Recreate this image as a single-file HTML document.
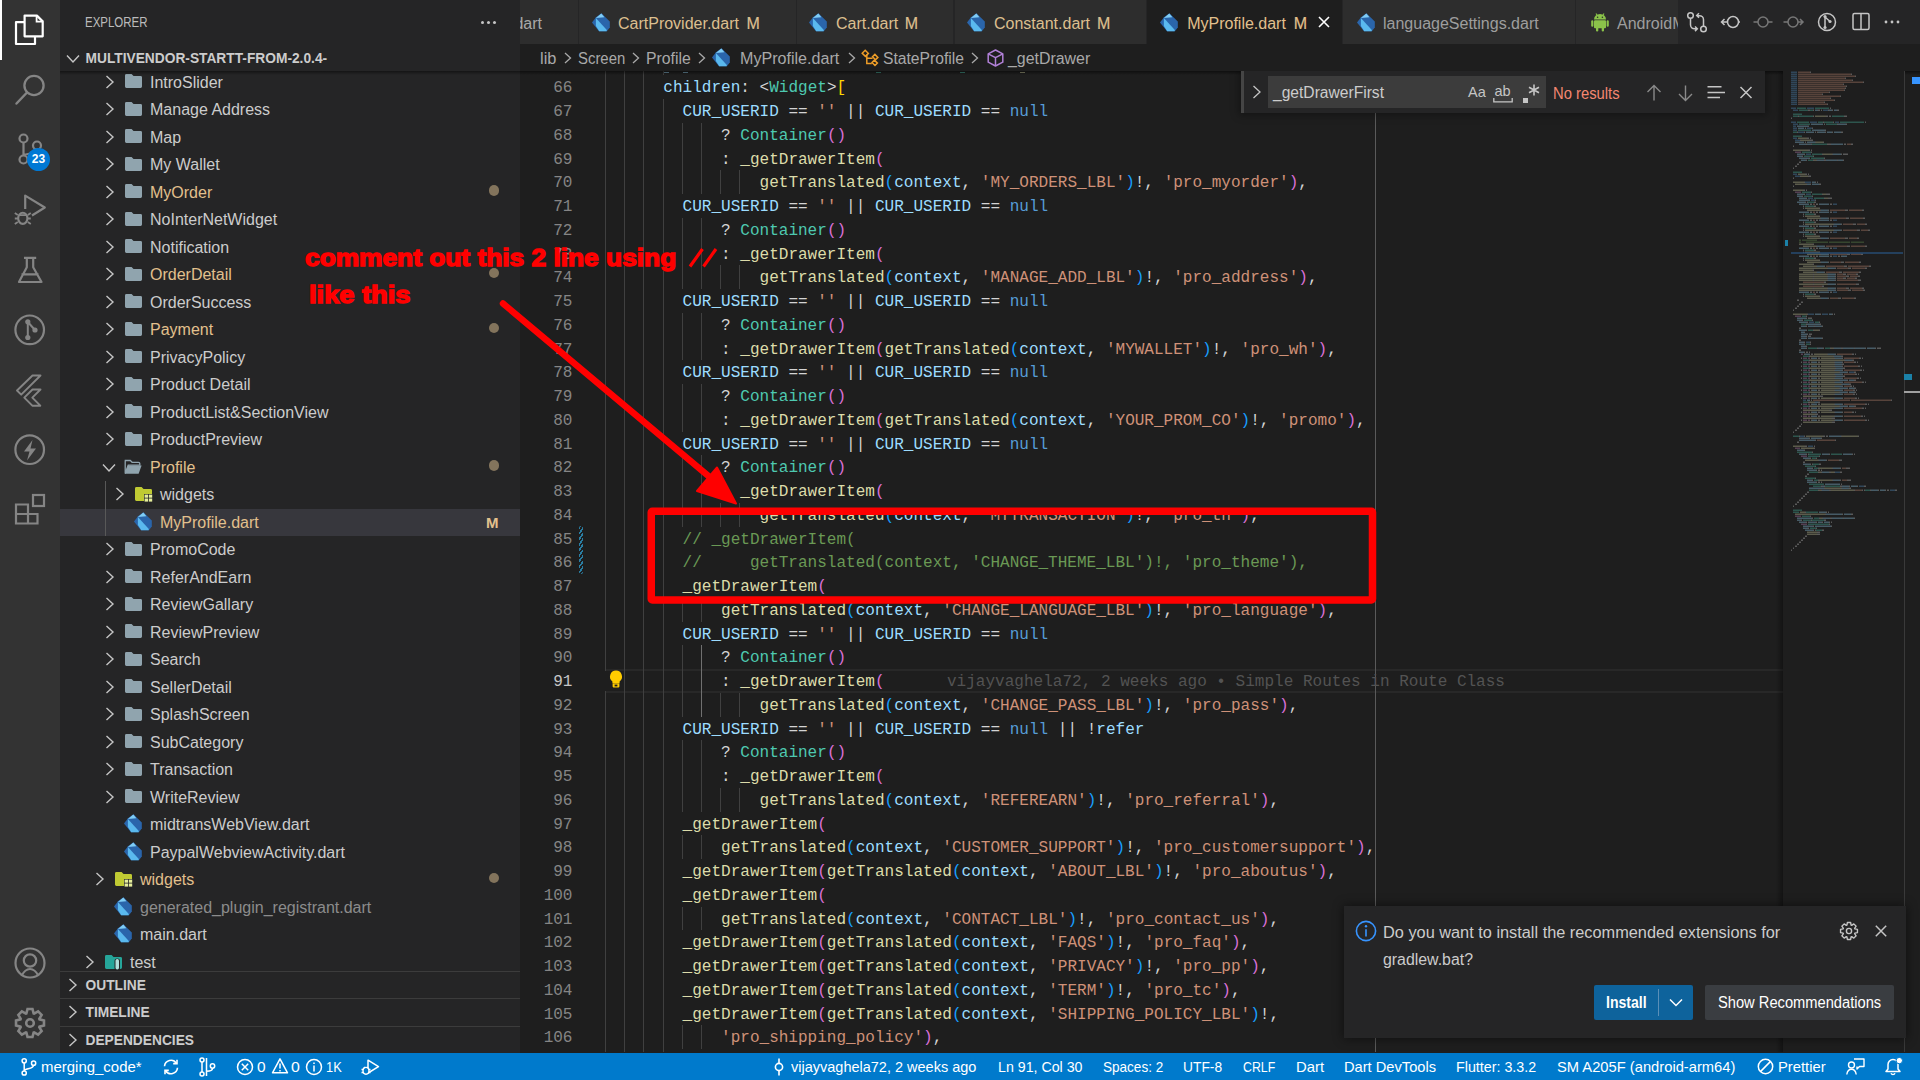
<!DOCTYPE html><html><head><meta charset="utf-8"><style>
*{margin:0;padding:0;box-sizing:border-box}
html,body{width:1920px;height:1080px;overflow:hidden;background:#1e1e1e;font-family:"Liberation Sans",sans-serif;}
.a{position:absolute}
svg{position:absolute;overflow:visible}
#act{position:absolute;left:0;top:0;width:60px;height:1052.5px;background:#333333}
#side{position:absolute;left:60px;top:0;width:460px;height:1052.5px;background:#252526;color:#cccccc;font-size:16px;overflow:hidden}
.row{position:absolute;left:0;width:460px;height:27.5px;line-height:27.5px;white-space:nowrap}
.row .t{position:absolute;top:0}
#tabs{position:absolute;left:520px;top:0;width:1400px;height:43.75px;background:#252526;overflow:hidden}
.tab{position:absolute;top:0;height:43.75px;background:#2d2d2d;font-size:16px;color:#969696;white-space:nowrap;overflow:hidden;line-height:43.75px}
#crumbs{position:absolute;left:520px;top:43.75px;width:1400px;height:27.5px;background:#1e1e1e;font-size:16px;color:#a9a9a9;white-space:nowrap;line-height:27.5px}
#editor{position:absolute;left:520px;top:71.25px;width:1400px;height:980.75px;background:#1e1e1e;overflow:hidden}
#status{position:absolute;left:0;top:1052.5px;width:1920px;height:27.5px;background:#007acc;color:#fff;font-size:16px;white-space:nowrap;line-height:28px}
.ln{position:absolute;left:0;padding-top:2px;width:52px;text-align:right;font-family:"Liberation Mono",monospace;font-size:16.04px;line-height:23.75px;color:#858585;white-space:pre}
.cl{position:absolute;padding-top:2px;font-family:"Liberation Mono",monospace;font-size:16.04px;line-height:23.75px;white-space:pre;color:#d4d4d4}
.g{position:absolute;width:1px;background:#404040}
</style></head><body>
<div id="act">
<div class="a" style="left:0;top:0;width:2.2px;height:60px;background:#ffffff"></div>
<svg width="60" height="60" style="left:0;top:0" viewBox="0 0 60 60">
<path d="M24.6 36.3V15.6h12.3l5.8 5.8v14.9z" fill="none" stroke="#fff" stroke-width="2.2" stroke-linejoin="round"/>
<path d="M36.6 15.6v6h6" fill="none" stroke="#fff" stroke-width="1.8"/>
<path d="M24.6 22.2h-8.6v21.8h19v-7.7" fill="none" stroke="#fff" stroke-width="2.2" stroke-linejoin="round"/>
</svg>
<svg width="60" height="60" style="left:0;top:60px" viewBox="0 0 60 60">
<circle cx="34" cy="25.5" r="9.6" fill="none" stroke="#858585" stroke-width="2.3"/>
<path d="M27 32.5L16.5 43.5" stroke="#858585" stroke-width="2.5" stroke-linecap="round"/>
</svg>
<svg width="60" height="60" style="left:0;top:120px" viewBox="0 0 60 60">
<circle cx="23.5" cy="18.5" r="4" fill="none" stroke="#858585" stroke-width="2.2"/>
<circle cx="37" cy="25.5" r="4" fill="none" stroke="#858585" stroke-width="2.2"/>
<circle cx="23.5" cy="39.5" r="4" fill="none" stroke="#858585" stroke-width="2.2"/>
<path d="M23.5 22.5v13M37 29.5c0 5-13.5 4-13.5 6" fill="none" stroke="#858585" stroke-width="2.2"/>
</svg>
<div class="a" style="left:27px;top:148px;width:23px;height:23px;border-radius:12px;background:#0078d4;color:#fff;font-size:12px;font-weight:bold;text-align:center;line-height:23px">23</div>
<svg width="60" height="60" style="left:0;top:180px" viewBox="0 0 60 60">
<path d="M25.2 29V15.6L44.8 27.5L32 35.5" fill="none" stroke="#858585" stroke-width="2.2" stroke-linejoin="round"/>
<ellipse cx="22.8" cy="38.3" rx="4.6" ry="5.6" fill="#333" stroke="#858585" stroke-width="2.1"/>
<path d="M18.8 35.2h8M14.8 33l3 2M14.8 38.5h3.5M14.8 44l3-2M30.8 33l-3 2M30.8 38.5h-3.5M30.8 44l-3-2" stroke="#858585" stroke-width="1.8"/>
</svg>
<svg width="60" height="60" style="left:0;top:240px" viewBox="0 0 60 60">
<path d="M24 17.8h12.2M26.8 17.8v9.5L19 42h22.5L33.2 27.3v-9.5M21.5 34.4h17" fill="none" stroke="#858585" stroke-width="2.2" stroke-linejoin="round"/>
</svg>
<svg width="60" height="60" style="left:0;top:300px" viewBox="0 0 60 60">
<circle cx="29.7" cy="29.8" r="14.3" fill="none" stroke="#858585" stroke-width="2.2"/>
<circle cx="27.8" cy="21.8" r="2.6" fill="#858585"/><circle cx="35" cy="30" r="2.6" fill="#858585"/><circle cx="27.8" cy="37.5" r="2.6" fill="#858585"/>
<path d="M27.8 21.8v15.7M27.8 22l7.2 8" stroke="#858585" stroke-width="2"/>
</svg>
<svg width="60" height="60" style="left:0;top:360px" viewBox="0 0 60 60">
<path d="M40.5 15.5h-8L17 30.5l4.2 4.2z" fill="none" stroke="#858585" stroke-width="1.9" stroke-linejoin="round"/>
<path d="M40.5 29.5h-8l-8.2 8.2l8 8h8l-8-8z" fill="none" stroke="#858585" stroke-width="1.9" stroke-linejoin="round"/>
</svg>
<svg width="60" height="60" style="left:0;top:420px" viewBox="0 0 60 60">
<circle cx="29.7" cy="29.7" r="14.3" fill="none" stroke="#858585" stroke-width="2.2"/>
<path d="M32.5 20L24 31.5h5.5L27 40.5l9-12h-5.5z" fill="#858585"/>
</svg>
<svg width="60" height="60" style="left:0;top:480px" viewBox="0 0 60 60">
<path d="M16 24.5h12v19h-12zM16 34h21.5v9.5h-9.5" fill="none" stroke="#858585" stroke-width="2.2"/>
<rect x="33" y="15" width="11" height="11" fill="none" stroke="#858585" stroke-width="2.2"/>
</svg>
<svg width="60" height="60" style="left:0;top:932.8px" viewBox="0 0 60 60">
<circle cx="30" cy="30" r="14.5" fill="none" stroke="#858585" stroke-width="2.2"/>
<circle cx="30" cy="27.5" r="6.2" fill="none" stroke="#858585" stroke-width="2.2"/>
<path d="M21.5 43c2.5-5 5-7 8.5-7s6 2 8.5 7" fill="none" stroke="#858585" stroke-width="2.2"/>
</svg>
<svg width="60" height="60" style="left:0;top:992.6px" viewBox="0 0 60 60">
<path d="M43.98 27.53 L43.98 32.47 L39.52 33.66 L39.32 34.15 L41.63 38.14 L38.14 41.63 L34.15 39.32 L33.66 39.52 L32.47 43.98 L27.53 43.98 L26.34 39.52 L25.85 39.32 L21.86 41.63 L18.37 38.14 L20.68 34.15 L20.48 33.66 L16.02 32.47 L16.02 27.53 L20.48 26.34 L20.68 25.85 L18.37 21.86 L21.86 18.37 L25.85 20.68 L26.34 20.48 L27.53 16.02 L32.47 16.02 L33.66 20.48 L34.15 20.68 L38.14 18.37 L41.63 21.86 L39.32 25.85 L39.52 26.34Z" fill="none" stroke="#858585" stroke-width="2.6" stroke-linejoin="miter"/>
<circle cx="30" cy="30" r="3.8" fill="none" stroke="#858585" stroke-width="2.6"/>
</svg>
</div>
<div id="side">
<div class="a" style="left:25.3px;top:0.5px;height:44px;line-height:44px;font-size:13.75px;color:#bbbbbb;transform-origin:0 0;transform:scaleX(0.835)">EXPLORER</div>
<div class="a" style="left:421px;top:20.5px;width:3px;height:3px;background:#c5c5c5;border-radius:2px;box-shadow:6px 0 0 #c5c5c5,12px 0 0 #c5c5c5"></div>
<div class="a" style="left:0;top:71px;width:460px;height:899.5px;overflow:hidden">
<div class="row" style="top:-2.40px;">
<svg width="10" height="14" style="left:44.5px;top:6.2px" viewBox="0 0 10 14">
<path d="M1.5 1L8 7L1.5 13" fill="none" stroke="#c5c5c5" stroke-width="1.4"/>
</svg>
<svg width="17" height="14" style="left:64.6px;top:5.8px" viewBox="0 0 17 14">
<path d="M1.4 0h5.2l1.9 1.9h7.1a1.4 1.4 0 0 1 1.4 1.4v9.3a1.4 1.4 0 0 1-1.4 1.4H1.4A1.4 1.4 0 0 1 0 12.6V1.4A1.4 1.4 0 0 1 1.4 0z" fill="#90a4ae"/>
</svg>
<div class="t" style="left:90px;color:#cccccc">IntroSlider</div>
</div>
<div class="row" style="top:25.10px;">
<svg width="10" height="14" style="left:44.5px;top:6.2px" viewBox="0 0 10 14">
<path d="M1.5 1L8 7L1.5 13" fill="none" stroke="#c5c5c5" stroke-width="1.4"/>
</svg>
<svg width="17" height="14" style="left:64.6px;top:5.8px" viewBox="0 0 17 14">
<path d="M1.4 0h5.2l1.9 1.9h7.1a1.4 1.4 0 0 1 1.4 1.4v9.3a1.4 1.4 0 0 1-1.4 1.4H1.4A1.4 1.4 0 0 1 0 12.6V1.4A1.4 1.4 0 0 1 1.4 0z" fill="#90a4ae"/>
</svg>
<div class="t" style="left:90px;color:#cccccc">Manage Address</div>
</div>
<div class="row" style="top:52.60px;">
<svg width="10" height="14" style="left:44.5px;top:6.2px" viewBox="0 0 10 14">
<path d="M1.5 1L8 7L1.5 13" fill="none" stroke="#c5c5c5" stroke-width="1.4"/>
</svg>
<svg width="17" height="14" style="left:64.6px;top:5.8px" viewBox="0 0 17 14">
<path d="M1.4 0h5.2l1.9 1.9h7.1a1.4 1.4 0 0 1 1.4 1.4v9.3a1.4 1.4 0 0 1-1.4 1.4H1.4A1.4 1.4 0 0 1 0 12.6V1.4A1.4 1.4 0 0 1 1.4 0z" fill="#90a4ae"/>
</svg>
<div class="t" style="left:90px;color:#cccccc">Map</div>
</div>
<div class="row" style="top:80.10px;">
<svg width="10" height="14" style="left:44.5px;top:6.2px" viewBox="0 0 10 14">
<path d="M1.5 1L8 7L1.5 13" fill="none" stroke="#c5c5c5" stroke-width="1.4"/>
</svg>
<svg width="17" height="14" style="left:64.6px;top:5.8px" viewBox="0 0 17 14">
<path d="M1.4 0h5.2l1.9 1.9h7.1a1.4 1.4 0 0 1 1.4 1.4v9.3a1.4 1.4 0 0 1-1.4 1.4H1.4A1.4 1.4 0 0 1 0 12.6V1.4A1.4 1.4 0 0 1 1.4 0z" fill="#90a4ae"/>
</svg>
<div class="t" style="left:90px;color:#cccccc">My Wallet</div>
</div>
<div class="row" style="top:107.60px;">
<svg width="10" height="14" style="left:44.5px;top:6.2px" viewBox="0 0 10 14">
<path d="M1.5 1L8 7L1.5 13" fill="none" stroke="#c5c5c5" stroke-width="1.4"/>
</svg>
<svg width="17" height="14" style="left:64.6px;top:5.8px" viewBox="0 0 17 14">
<path d="M1.4 0h5.2l1.9 1.9h7.1a1.4 1.4 0 0 1 1.4 1.4v9.3a1.4 1.4 0 0 1-1.4 1.4H1.4A1.4 1.4 0 0 1 0 12.6V1.4A1.4 1.4 0 0 1 1.4 0z" fill="#90a4ae"/>
</svg>
<div class="t" style="left:90px;color:#e2c08d">MyOrder</div>
<div class="a" style="left:428.5px;top:6.8px;width:10.5px;height:10.5px;border-radius:6px;background:#83745c"></div>
</div>
<div class="row" style="top:135.10px;">
<svg width="10" height="14" style="left:44.5px;top:6.2px" viewBox="0 0 10 14">
<path d="M1.5 1L8 7L1.5 13" fill="none" stroke="#c5c5c5" stroke-width="1.4"/>
</svg>
<svg width="17" height="14" style="left:64.6px;top:5.8px" viewBox="0 0 17 14">
<path d="M1.4 0h5.2l1.9 1.9h7.1a1.4 1.4 0 0 1 1.4 1.4v9.3a1.4 1.4 0 0 1-1.4 1.4H1.4A1.4 1.4 0 0 1 0 12.6V1.4A1.4 1.4 0 0 1 1.4 0z" fill="#90a4ae"/>
</svg>
<div class="t" style="left:90px;color:#cccccc">NoInterNetWidget</div>
</div>
<div class="row" style="top:162.60px;">
<svg width="10" height="14" style="left:44.5px;top:6.2px" viewBox="0 0 10 14">
<path d="M1.5 1L8 7L1.5 13" fill="none" stroke="#c5c5c5" stroke-width="1.4"/>
</svg>
<svg width="17" height="14" style="left:64.6px;top:5.8px" viewBox="0 0 17 14">
<path d="M1.4 0h5.2l1.9 1.9h7.1a1.4 1.4 0 0 1 1.4 1.4v9.3a1.4 1.4 0 0 1-1.4 1.4H1.4A1.4 1.4 0 0 1 0 12.6V1.4A1.4 1.4 0 0 1 1.4 0z" fill="#90a4ae"/>
</svg>
<div class="t" style="left:90px;color:#cccccc">Notification</div>
</div>
<div class="row" style="top:190.10px;">
<svg width="10" height="14" style="left:44.5px;top:6.2px" viewBox="0 0 10 14">
<path d="M1.5 1L8 7L1.5 13" fill="none" stroke="#c5c5c5" stroke-width="1.4"/>
</svg>
<svg width="17" height="14" style="left:64.6px;top:5.8px" viewBox="0 0 17 14">
<path d="M1.4 0h5.2l1.9 1.9h7.1a1.4 1.4 0 0 1 1.4 1.4v9.3a1.4 1.4 0 0 1-1.4 1.4H1.4A1.4 1.4 0 0 1 0 12.6V1.4A1.4 1.4 0 0 1 1.4 0z" fill="#90a4ae"/>
</svg>
<div class="t" style="left:90px;color:#e2c08d">OrderDetail</div>
<div class="a" style="left:428.5px;top:6.8px;width:10.5px;height:10.5px;border-radius:6px;background:#83745c"></div>
</div>
<div class="row" style="top:217.60px;">
<svg width="10" height="14" style="left:44.5px;top:6.2px" viewBox="0 0 10 14">
<path d="M1.5 1L8 7L1.5 13" fill="none" stroke="#c5c5c5" stroke-width="1.4"/>
</svg>
<svg width="17" height="14" style="left:64.6px;top:5.8px" viewBox="0 0 17 14">
<path d="M1.4 0h5.2l1.9 1.9h7.1a1.4 1.4 0 0 1 1.4 1.4v9.3a1.4 1.4 0 0 1-1.4 1.4H1.4A1.4 1.4 0 0 1 0 12.6V1.4A1.4 1.4 0 0 1 1.4 0z" fill="#90a4ae"/>
</svg>
<div class="t" style="left:90px;color:#cccccc">OrderSuccess</div>
</div>
<div class="row" style="top:245.10px;">
<svg width="10" height="14" style="left:44.5px;top:6.2px" viewBox="0 0 10 14">
<path d="M1.5 1L8 7L1.5 13" fill="none" stroke="#c5c5c5" stroke-width="1.4"/>
</svg>
<svg width="17" height="14" style="left:64.6px;top:5.8px" viewBox="0 0 17 14">
<path d="M1.4 0h5.2l1.9 1.9h7.1a1.4 1.4 0 0 1 1.4 1.4v9.3a1.4 1.4 0 0 1-1.4 1.4H1.4A1.4 1.4 0 0 1 0 12.6V1.4A1.4 1.4 0 0 1 1.4 0z" fill="#90a4ae"/>
</svg>
<div class="t" style="left:90px;color:#e2c08d">Payment</div>
<div class="a" style="left:428.5px;top:6.8px;width:10.5px;height:10.5px;border-radius:6px;background:#83745c"></div>
</div>
<div class="row" style="top:272.60px;">
<svg width="10" height="14" style="left:44.5px;top:6.2px" viewBox="0 0 10 14">
<path d="M1.5 1L8 7L1.5 13" fill="none" stroke="#c5c5c5" stroke-width="1.4"/>
</svg>
<svg width="17" height="14" style="left:64.6px;top:5.8px" viewBox="0 0 17 14">
<path d="M1.4 0h5.2l1.9 1.9h7.1a1.4 1.4 0 0 1 1.4 1.4v9.3a1.4 1.4 0 0 1-1.4 1.4H1.4A1.4 1.4 0 0 1 0 12.6V1.4A1.4 1.4 0 0 1 1.4 0z" fill="#90a4ae"/>
</svg>
<div class="t" style="left:90px;color:#cccccc">PrivacyPolicy</div>
</div>
<div class="row" style="top:300.10px;">
<svg width="10" height="14" style="left:44.5px;top:6.2px" viewBox="0 0 10 14">
<path d="M1.5 1L8 7L1.5 13" fill="none" stroke="#c5c5c5" stroke-width="1.4"/>
</svg>
<svg width="17" height="14" style="left:64.6px;top:5.8px" viewBox="0 0 17 14">
<path d="M1.4 0h5.2l1.9 1.9h7.1a1.4 1.4 0 0 1 1.4 1.4v9.3a1.4 1.4 0 0 1-1.4 1.4H1.4A1.4 1.4 0 0 1 0 12.6V1.4A1.4 1.4 0 0 1 1.4 0z" fill="#90a4ae"/>
</svg>
<div class="t" style="left:90px;color:#cccccc">Product Detail</div>
</div>
<div class="row" style="top:327.60px;">
<svg width="10" height="14" style="left:44.5px;top:6.2px" viewBox="0 0 10 14">
<path d="M1.5 1L8 7L1.5 13" fill="none" stroke="#c5c5c5" stroke-width="1.4"/>
</svg>
<svg width="17" height="14" style="left:64.6px;top:5.8px" viewBox="0 0 17 14">
<path d="M1.4 0h5.2l1.9 1.9h7.1a1.4 1.4 0 0 1 1.4 1.4v9.3a1.4 1.4 0 0 1-1.4 1.4H1.4A1.4 1.4 0 0 1 0 12.6V1.4A1.4 1.4 0 0 1 1.4 0z" fill="#90a4ae"/>
</svg>
<div class="t" style="left:90px;color:#cccccc">ProductList&amp;SectionView</div>
</div>
<div class="row" style="top:355.10px;">
<svg width="10" height="14" style="left:44.5px;top:6.2px" viewBox="0 0 10 14">
<path d="M1.5 1L8 7L1.5 13" fill="none" stroke="#c5c5c5" stroke-width="1.4"/>
</svg>
<svg width="17" height="14" style="left:64.6px;top:5.8px" viewBox="0 0 17 14">
<path d="M1.4 0h5.2l1.9 1.9h7.1a1.4 1.4 0 0 1 1.4 1.4v9.3a1.4 1.4 0 0 1-1.4 1.4H1.4A1.4 1.4 0 0 1 0 12.6V1.4A1.4 1.4 0 0 1 1.4 0z" fill="#90a4ae"/>
</svg>
<div class="t" style="left:90px;color:#cccccc">ProductPreview</div>
</div>
<div class="row" style="top:382.60px;">
<svg width="14" height="10" style="left:42px;top:9.5px" viewBox="0 0 14 10">
<path d="M1 1.5L7 8L13 1.5" fill="none" stroke="#c5c5c5" stroke-width="1.4"/>
</svg>
<svg width="18" height="15" style="left:64px;top:6.5px" viewBox="0 0 18 15">
<path d="M1.3 0.5h5l1.8 1.8h6.4a1.3 1.3 0 0 1 1.3 1.3v1.6H4.2L1.2 13.5V1.8z" fill="none" stroke="#90a4ae" stroke-width="1.3"/>
<path d="M4 5.6h13.6l-3 8.2H0.8z" fill="#90a4ae"/>
</svg>
<div class="t" style="left:90px;color:#e2c08d">Profile</div>
<div class="a" style="left:428.5px;top:6.8px;width:10.5px;height:10.5px;border-radius:6px;background:#83745c"></div>
</div>
<div class="row" style="top:410.10px;">
<svg width="10" height="14" style="left:54.5px;top:6.2px" viewBox="0 0 10 14">
<path d="M1.5 1L8 7L1.5 13" fill="none" stroke="#c5c5c5" stroke-width="1.4"/>
</svg>
<svg width="18" height="15" style="left:74.6px;top:6.2px" viewBox="0 0 18 15">
<path d="M1.4 0h5.2l1.9 1.9h7.1a1.4 1.4 0 0 1 1.4 1.4v9.3a1.4 1.4 0 0 1-1.4 1.4H1.4A1.4 1.4 0 0 1 0 12.6V1.4A1.4 1.4 0 0 1 1.4 0z" fill="#c0ca33"/>
<rect x="9" y="7" width="8.5" height="8" fill="#252526"/>
<rect x="9.6" y="7.6" width="3.4" height="3.1" fill="#e6ee9c"/><rect x="13.8" y="7.6" width="3.4" height="3.1" fill="#e6ee9c"/>
<rect x="9.6" y="11.5" width="3.4" height="3.1" fill="#e6ee9c"/><rect x="13.8" y="11.5" width="3.4" height="3.1" fill="#e6ee9c"/>
</svg>
<div class="t" style="left:100px;color:#cccccc">widgets</div>
</div>
<div class="row" style="top:437.60px;background:#37373d;">
<svg width="18" height="18" style="left:74px;top:3.0px" viewBox="0 0 18 18">
<path d="M4 4.2L9.4 0.3L17.8 8.6L17.8 14.5L14.8 18.2L7 18.2L0 9.5Z" fill="#2a65ab"/>
<path d="M3.9 5L14.8 17L14.6 18.2L7.2 18.2L3.9 13Z" fill="#5ab9ee"/>
<path d="M3.9 5L9.3 0.4L12.4 4.3Z" fill="#80cdf5"/>
</svg>
<div class="t" style="left:100px;color:#e2c08d">MyProfile.dart</div>
<div class="a" style="left:426px;top:0;font-size:15px;font-weight:bold;color:#e2c08d">M</div>
</div>
<div class="row" style="top:465.10px;">
<svg width="10" height="14" style="left:44.5px;top:6.2px" viewBox="0 0 10 14">
<path d="M1.5 1L8 7L1.5 13" fill="none" stroke="#c5c5c5" stroke-width="1.4"/>
</svg>
<svg width="17" height="14" style="left:64.6px;top:5.8px" viewBox="0 0 17 14">
<path d="M1.4 0h5.2l1.9 1.9h7.1a1.4 1.4 0 0 1 1.4 1.4v9.3a1.4 1.4 0 0 1-1.4 1.4H1.4A1.4 1.4 0 0 1 0 12.6V1.4A1.4 1.4 0 0 1 1.4 0z" fill="#90a4ae"/>
</svg>
<div class="t" style="left:90px;color:#cccccc">PromoCode</div>
</div>
<div class="row" style="top:492.60px;">
<svg width="10" height="14" style="left:44.5px;top:6.2px" viewBox="0 0 10 14">
<path d="M1.5 1L8 7L1.5 13" fill="none" stroke="#c5c5c5" stroke-width="1.4"/>
</svg>
<svg width="17" height="14" style="left:64.6px;top:5.8px" viewBox="0 0 17 14">
<path d="M1.4 0h5.2l1.9 1.9h7.1a1.4 1.4 0 0 1 1.4 1.4v9.3a1.4 1.4 0 0 1-1.4 1.4H1.4A1.4 1.4 0 0 1 0 12.6V1.4A1.4 1.4 0 0 1 1.4 0z" fill="#90a4ae"/>
</svg>
<div class="t" style="left:90px;color:#cccccc">ReferAndEarn</div>
</div>
<div class="row" style="top:520.10px;">
<svg width="10" height="14" style="left:44.5px;top:6.2px" viewBox="0 0 10 14">
<path d="M1.5 1L8 7L1.5 13" fill="none" stroke="#c5c5c5" stroke-width="1.4"/>
</svg>
<svg width="17" height="14" style="left:64.6px;top:5.8px" viewBox="0 0 17 14">
<path d="M1.4 0h5.2l1.9 1.9h7.1a1.4 1.4 0 0 1 1.4 1.4v9.3a1.4 1.4 0 0 1-1.4 1.4H1.4A1.4 1.4 0 0 1 0 12.6V1.4A1.4 1.4 0 0 1 1.4 0z" fill="#90a4ae"/>
</svg>
<div class="t" style="left:90px;color:#cccccc">ReviewGallary</div>
</div>
<div class="row" style="top:547.60px;">
<svg width="10" height="14" style="left:44.5px;top:6.2px" viewBox="0 0 10 14">
<path d="M1.5 1L8 7L1.5 13" fill="none" stroke="#c5c5c5" stroke-width="1.4"/>
</svg>
<svg width="17" height="14" style="left:64.6px;top:5.8px" viewBox="0 0 17 14">
<path d="M1.4 0h5.2l1.9 1.9h7.1a1.4 1.4 0 0 1 1.4 1.4v9.3a1.4 1.4 0 0 1-1.4 1.4H1.4A1.4 1.4 0 0 1 0 12.6V1.4A1.4 1.4 0 0 1 1.4 0z" fill="#90a4ae"/>
</svg>
<div class="t" style="left:90px;color:#cccccc">ReviewPreview</div>
</div>
<div class="row" style="top:575.10px;">
<svg width="10" height="14" style="left:44.5px;top:6.2px" viewBox="0 0 10 14">
<path d="M1.5 1L8 7L1.5 13" fill="none" stroke="#c5c5c5" stroke-width="1.4"/>
</svg>
<svg width="17" height="14" style="left:64.6px;top:5.8px" viewBox="0 0 17 14">
<path d="M1.4 0h5.2l1.9 1.9h7.1a1.4 1.4 0 0 1 1.4 1.4v9.3a1.4 1.4 0 0 1-1.4 1.4H1.4A1.4 1.4 0 0 1 0 12.6V1.4A1.4 1.4 0 0 1 1.4 0z" fill="#90a4ae"/>
</svg>
<div class="t" style="left:90px;color:#cccccc">Search</div>
</div>
<div class="row" style="top:602.60px;">
<svg width="10" height="14" style="left:44.5px;top:6.2px" viewBox="0 0 10 14">
<path d="M1.5 1L8 7L1.5 13" fill="none" stroke="#c5c5c5" stroke-width="1.4"/>
</svg>
<svg width="17" height="14" style="left:64.6px;top:5.8px" viewBox="0 0 17 14">
<path d="M1.4 0h5.2l1.9 1.9h7.1a1.4 1.4 0 0 1 1.4 1.4v9.3a1.4 1.4 0 0 1-1.4 1.4H1.4A1.4 1.4 0 0 1 0 12.6V1.4A1.4 1.4 0 0 1 1.4 0z" fill="#90a4ae"/>
</svg>
<div class="t" style="left:90px;color:#cccccc">SellerDetail</div>
</div>
<div class="row" style="top:630.10px;">
<svg width="10" height="14" style="left:44.5px;top:6.2px" viewBox="0 0 10 14">
<path d="M1.5 1L8 7L1.5 13" fill="none" stroke="#c5c5c5" stroke-width="1.4"/>
</svg>
<svg width="17" height="14" style="left:64.6px;top:5.8px" viewBox="0 0 17 14">
<path d="M1.4 0h5.2l1.9 1.9h7.1a1.4 1.4 0 0 1 1.4 1.4v9.3a1.4 1.4 0 0 1-1.4 1.4H1.4A1.4 1.4 0 0 1 0 12.6V1.4A1.4 1.4 0 0 1 1.4 0z" fill="#90a4ae"/>
</svg>
<div class="t" style="left:90px;color:#cccccc">SplashScreen</div>
</div>
<div class="row" style="top:657.60px;">
<svg width="10" height="14" style="left:44.5px;top:6.2px" viewBox="0 0 10 14">
<path d="M1.5 1L8 7L1.5 13" fill="none" stroke="#c5c5c5" stroke-width="1.4"/>
</svg>
<svg width="17" height="14" style="left:64.6px;top:5.8px" viewBox="0 0 17 14">
<path d="M1.4 0h5.2l1.9 1.9h7.1a1.4 1.4 0 0 1 1.4 1.4v9.3a1.4 1.4 0 0 1-1.4 1.4H1.4A1.4 1.4 0 0 1 0 12.6V1.4A1.4 1.4 0 0 1 1.4 0z" fill="#90a4ae"/>
</svg>
<div class="t" style="left:90px;color:#cccccc">SubCategory</div>
</div>
<div class="row" style="top:685.10px;">
<svg width="10" height="14" style="left:44.5px;top:6.2px" viewBox="0 0 10 14">
<path d="M1.5 1L8 7L1.5 13" fill="none" stroke="#c5c5c5" stroke-width="1.4"/>
</svg>
<svg width="17" height="14" style="left:64.6px;top:5.8px" viewBox="0 0 17 14">
<path d="M1.4 0h5.2l1.9 1.9h7.1a1.4 1.4 0 0 1 1.4 1.4v9.3a1.4 1.4 0 0 1-1.4 1.4H1.4A1.4 1.4 0 0 1 0 12.6V1.4A1.4 1.4 0 0 1 1.4 0z" fill="#90a4ae"/>
</svg>
<div class="t" style="left:90px;color:#cccccc">Transaction</div>
</div>
<div class="row" style="top:712.60px;">
<svg width="10" height="14" style="left:44.5px;top:6.2px" viewBox="0 0 10 14">
<path d="M1.5 1L8 7L1.5 13" fill="none" stroke="#c5c5c5" stroke-width="1.4"/>
</svg>
<svg width="17" height="14" style="left:64.6px;top:5.8px" viewBox="0 0 17 14">
<path d="M1.4 0h5.2l1.9 1.9h7.1a1.4 1.4 0 0 1 1.4 1.4v9.3a1.4 1.4 0 0 1-1.4 1.4H1.4A1.4 1.4 0 0 1 0 12.6V1.4A1.4 1.4 0 0 1 1.4 0z" fill="#90a4ae"/>
</svg>
<div class="t" style="left:90px;color:#cccccc">WriteReview</div>
</div>
<div class="row" style="top:740.10px;">
<svg width="18" height="18" style="left:64px;top:3.0px" viewBox="0 0 18 18">
<path d="M4 4.2L9.4 0.3L17.8 8.6L17.8 14.5L14.8 18.2L7 18.2L0 9.5Z" fill="#2a65ab"/>
<path d="M3.9 5L14.8 17L14.6 18.2L7.2 18.2L3.9 13Z" fill="#5ab9ee"/>
<path d="M3.9 5L9.3 0.4L12.4 4.3Z" fill="#80cdf5"/>
</svg>
<div class="t" style="left:90px;color:#cccccc">midtransWebView.dart</div>
</div>
<div class="row" style="top:767.60px;">
<svg width="18" height="18" style="left:64px;top:3.0px" viewBox="0 0 18 18">
<path d="M4 4.2L9.4 0.3L17.8 8.6L17.8 14.5L14.8 18.2L7 18.2L0 9.5Z" fill="#2a65ab"/>
<path d="M3.9 5L14.8 17L14.6 18.2L7.2 18.2L3.9 13Z" fill="#5ab9ee"/>
<path d="M3.9 5L9.3 0.4L12.4 4.3Z" fill="#80cdf5"/>
</svg>
<div class="t" style="left:90px;color:#cccccc">PaypalWebviewActivity.dart</div>
</div>
<div class="row" style="top:795.10px;">
<svg width="10" height="14" style="left:34.5px;top:6.2px" viewBox="0 0 10 14">
<path d="M1.5 1L8 7L1.5 13" fill="none" stroke="#c5c5c5" stroke-width="1.4"/>
</svg>
<svg width="18" height="15" style="left:54.6px;top:6.2px" viewBox="0 0 18 15">
<path d="M1.4 0h5.2l1.9 1.9h7.1a1.4 1.4 0 0 1 1.4 1.4v9.3a1.4 1.4 0 0 1-1.4 1.4H1.4A1.4 1.4 0 0 1 0 12.6V1.4A1.4 1.4 0 0 1 1.4 0z" fill="#c0ca33"/>
<rect x="9" y="7" width="8.5" height="8" fill="#252526"/>
<rect x="9.6" y="7.6" width="3.4" height="3.1" fill="#e6ee9c"/><rect x="13.8" y="7.6" width="3.4" height="3.1" fill="#e6ee9c"/>
<rect x="9.6" y="11.5" width="3.4" height="3.1" fill="#e6ee9c"/><rect x="13.8" y="11.5" width="3.4" height="3.1" fill="#e6ee9c"/>
</svg>
<div class="t" style="left:80px;color:#e2c08d">widgets</div>
<div class="a" style="left:428.5px;top:6.8px;width:10.5px;height:10.5px;border-radius:6px;background:#83745c"></div>
</div>
<div class="row" style="top:822.60px;">
<svg width="18" height="18" style="left:54px;top:3.0px" viewBox="0 0 18 18">
<path d="M4 4.2L9.4 0.3L17.8 8.6L17.8 14.5L14.8 18.2L7 18.2L0 9.5Z" fill="#2a65ab"/>
<path d="M3.9 5L14.8 17L14.6 18.2L7.2 18.2L3.9 13Z" fill="#5ab9ee"/>
<path d="M3.9 5L9.3 0.4L12.4 4.3Z" fill="#80cdf5"/>
</svg>
<div class="t" style="left:80px;color:#8c8c8c">generated_plugin_registrant.dart</div>
</div>
<div class="row" style="top:850.10px;">
<svg width="18" height="18" style="left:54px;top:3.0px" viewBox="0 0 18 18">
<path d="M4 4.2L9.4 0.3L17.8 8.6L17.8 14.5L14.8 18.2L7 18.2L0 9.5Z" fill="#2a65ab"/>
<path d="M3.9 5L14.8 17L14.6 18.2L7.2 18.2L3.9 13Z" fill="#5ab9ee"/>
<path d="M3.9 5L9.3 0.4L12.4 4.3Z" fill="#80cdf5"/>
</svg>
<div class="t" style="left:80px;color:#cccccc">main.dart</div>
</div>
<div class="row" style="top:877.60px;">
<svg width="10" height="14" style="left:24.5px;top:6.2px" viewBox="0 0 10 14">
<path d="M1.5 1L8 7L1.5 13" fill="none" stroke="#c5c5c5" stroke-width="1.4"/>
</svg>
<svg width="18" height="15" style="left:44.6px;top:6.2px" viewBox="0 0 18 15">
<path d="M1.4 0h5.2l1.9 1.9h7.1a1.4 1.4 0 0 1 1.4 1.4v9.3a1.4 1.4 0 0 1-1.4 1.4H1.4A1.4 1.4 0 0 1 0 12.6V1.4A1.4 1.4 0 0 1 1.4 0z" fill="#26a69a"/>
<rect x="9.5" y="3.5" width="5.5" height="12" rx="2.5" fill="#252526"/>
<rect x="10.5" y="4" width="3.5" height="10.5" rx="1.7" fill="#b2dfdb"/>
</svg>
<div class="t" style="left:70px;color:#cccccc">test</div>
</div>
<div class="a" style="left:44.8px;top:410.10px;width:1px;height:55.0px;background:#585858"></div>
</div>
<svg width="14" height="10" style="left:5.5px;top:53.5px" viewBox="0 0 14 10">
<path d="M1 1.5L7 8L13 1.5" fill="none" stroke="#c5c5c5" stroke-width="1.4"/>
</svg>
<div class="a" style="left:25.5px;top:45px;height:27px;line-height:27px;font-size:13.75px;font-weight:bold;color:#cccccc">MULTIVENDOR-STARTT-FROM-2.0.4-</div>
<div class="a" style="left:0;top:71px;width:460px;height:4px;background:linear-gradient(rgba(0,0,0,0.45),rgba(0,0,0,0))"></div>
<div class="a" style="left:0;top:970.5px;width:460px;height:27.5px;background:#252526;border-top:1px solid #3c3c3c"></div>
<svg width="10" height="14" style="left:8px;top:977.5px" viewBox="0 0 10 14">
<path d="M1.5 1L8 7L1.5 13" fill="none" stroke="#c5c5c5" stroke-width="1.4"/>
</svg>
<div class="a" style="left:25.5px;top:971.8px;height:27.5px;line-height:28px;font-size:13.75px;font-weight:bold;color:#cccccc">OUTLINE</div>
<div class="a" style="left:0;top:998.0px;width:460px;height:27.5px;background:#252526;border-top:1px solid #3c3c3c"></div>
<svg width="10" height="14" style="left:8px;top:1005.0px" viewBox="0 0 10 14">
<path d="M1.5 1L8 7L1.5 13" fill="none" stroke="#c5c5c5" stroke-width="1.4"/>
</svg>
<div class="a" style="left:25.5px;top:999.3px;height:27.5px;line-height:28px;font-size:13.75px;font-weight:bold;color:#cccccc">TIMELINE</div>
<div class="a" style="left:0;top:1025.5px;width:460px;height:27.5px;background:#252526;border-top:1px solid #3c3c3c"></div>
<svg width="10" height="14" style="left:8px;top:1032.5px" viewBox="0 0 10 14">
<path d="M1.5 1L8 7L1.5 13" fill="none" stroke="#c5c5c5" stroke-width="1.4"/>
</svg>
<div class="a" style="left:25.5px;top:1026.8px;height:27.5px;line-height:28px;font-size:13.75px;font-weight:bold;color:#cccccc">DEPENDENCIES</div>
</div>
<div id="tabs">
<div class="tab" style="left:0px;width:57.799999999999955px;background:#2d2d2d">
<div class="a" style="right:35.799999999999955px;top:1.5px;line-height:43.75px;color:#a8a8a8">Helper.dart</div>
</div>
<div class="tab" style="left:58.799999999999955px;width:216.80000000000007px;background:#2d2d2d">
<svg width="18" height="18" style="left:13.200000000000045px;top:12.8px" viewBox="0 0 18 18">
<path d="M4 4.2L9.4 0.3L17.8 8.6L17.8 14.5L14.8 18.2L7 18.2L0 9.5Z" fill="#2a65ab"/>
<path d="M3.9 5L14.8 17L14.6 18.2L7.2 18.2L3.9 13Z" fill="#5ab9ee"/>
<path d="M3.9 5L9.3 0.4L12.4 4.3Z" fill="#80cdf5"/>
</svg>
<div class="a" style="left:39.200000000000045px;top:1.5px;line-height:43.75px;color:#dcbf8f">CartProvider.dart</div>
<div class="a" style="left:167.80000000000007px;top:1.5px;line-height:43.75px;color:#dcbf8f;font-size:16px;-webkit-text-stroke:0.2px #dcbf8f">M</div>
</div>
<div class="tab" style="left:276.6px;width:156.89999999999998px;background:#2d2d2d">
<svg width="18" height="18" style="left:12.149999999999977px;top:12.8px" viewBox="0 0 18 18">
<path d="M4 4.2L9.4 0.3L17.8 8.6L17.8 14.5L14.8 18.2L7 18.2L0 9.5Z" fill="#2a65ab"/>
<path d="M3.9 5L14.8 17L14.6 18.2L7.2 18.2L3.9 13Z" fill="#5ab9ee"/>
<path d="M3.9 5L9.3 0.4L12.4 4.3Z" fill="#80cdf5"/>
</svg>
<div class="a" style="left:39.39999999999998px;top:1.5px;line-height:43.75px;color:#dcbf8f">Cart.dart</div>
<div class="a" style="left:108.19999999999993px;top:1.5px;line-height:43.75px;color:#dcbf8f;font-size:16px;-webkit-text-stroke:0.2px #dcbf8f">M</div>
</div>
<div class="tab" style="left:434.5px;width:191.79999999999995px;background:#2d2d2d">
<svg width="18" height="18" style="left:12.5px;top:12.8px" viewBox="0 0 18 18">
<path d="M4 4.2L9.4 0.3L17.8 8.6L17.8 14.5L14.8 18.2L7 18.2L0 9.5Z" fill="#2a65ab"/>
<path d="M3.9 5L14.8 17L14.6 18.2L7.2 18.2L3.9 13Z" fill="#5ab9ee"/>
<path d="M3.9 5L9.3 0.4L12.4 4.3Z" fill="#80cdf5"/>
</svg>
<div class="a" style="left:39.5px;top:1.5px;line-height:43.75px;color:#dcbf8f">Constant.dart</div>
<div class="a" style="left:142.5px;top:1.5px;line-height:43.75px;color:#dcbf8f;font-size:16px;-webkit-text-stroke:0.2px #dcbf8f">M</div>
</div>
<div class="tab" style="left:627.3px;width:195.10000000000014px;background:#1e1e1e">
<svg width="18" height="18" style="left:13.100000000000136px;top:12.8px" viewBox="0 0 18 18">
<path d="M4 4.2L9.4 0.3L17.8 8.6L17.8 14.5L14.8 18.2L7 18.2L0 9.5Z" fill="#2a65ab"/>
<path d="M3.9 5L14.8 17L14.6 18.2L7.2 18.2L3.9 13Z" fill="#5ab9ee"/>
<path d="M3.9 5L9.3 0.4L12.4 4.3Z" fill="#80cdf5"/>
</svg>
<div class="a" style="left:39.90000000000009px;top:1.5px;line-height:43.75px;color:#e2c08d">MyProfile.dart</div>
<div class="a" style="left:146.5px;top:1.5px;line-height:43.75px;color:#e2c08d;font-size:16px;-webkit-text-stroke:0.2px #e2c08d">M</div>
<svg width="12" height="12" style="left:171.20000000000005px;top:16px" viewBox="0 0 12 12"><path d="M1 1L11 11M11 1L1 11" stroke="#ffffff" stroke-width="1.6"/></svg>
</div>
<div class="tab" style="left:823.4000000000001px;width:231.39999999999986px;background:#2d2d2d">
<svg width="18" height="18" style="left:14.099999999999909px;top:12.8px" viewBox="0 0 18 18">
<path d="M4 4.2L9.4 0.3L17.8 8.6L17.8 14.5L14.8 18.2L7 18.2L0 9.5Z" fill="#2a65ab"/>
<path d="M3.9 5L14.8 17L14.6 18.2L7.2 18.2L3.9 13Z" fill="#5ab9ee"/>
<path d="M3.9 5L9.3 0.4L12.4 4.3Z" fill="#80cdf5"/>
</svg>
<div class="a" style="left:39.59999999999991px;top:1.5px;line-height:43.75px;color:#9e9e9e">languageSettings.dart</div>
</div>
<div class="tab" style="left:1055.8px;width:102.20000000000005px;background:#2d2d2d">
<svg width="18" height="20" style="left:15.200000000000045px;top:12px" viewBox="0 0 18 20">
<path d="M3 7.5a6 5.5 0 0 1 12 0z" fill="#8bc34a"/>
<path d="M5 1.5l1.6 2.5M13 1.5l-1.6 2.5" stroke="#8bc34a" stroke-width="1.1"/>
<rect x="3" y="8.3" width="12" height="8" rx="1" fill="#8bc34a"/>
<rect x="0.2" y="8.3" width="2.2" height="6.5" rx="1.1" fill="#8bc34a"/><rect x="15.6" y="8.3" width="2.2" height="6.5" rx="1.1" fill="#8bc34a"/>
<rect x="5" y="15" width="2.3" height="4.5" rx="1.1" fill="#8bc34a"/><rect x="10.7" y="15" width="2.3" height="4.5" rx="1.1" fill="#8bc34a"/>
<circle cx="6.6" cy="5.3" r="0.8" fill="#2d2d2d"/><circle cx="11.4" cy="5.3" r="0.8" fill="#2d2d2d"/>
</svg>
<div class="a" style="left:41.200000000000045px;top:1.5px;line-height:43.75px;color:#9e9e9e">AndroidManifest.xml</div>
</div>
<svg width="242" height="44" style="left:1139px;top:0" viewBox="0 0 242 44">
<g fill="none" stroke="#c5c5c5" stroke-width="1.5">
<circle cx="31.5" cy="15.5" r="2.8"/><circle cx="44.5" cy="29" r="2.8"/>
<path d="M31.5 18.3v6.5a4 4 0 0 0 4 4h2.5M36 26.5l2.3 2.3l-2.3 2.3M44.5 26.2v-6.5a4 4 0 0 0-4-4h-2.5M40 13.2l-2.3 2.3l2.3 2.3"/>
<circle cx="74" cy="22" r="5.5"/><path d="M68.5 22h-6M65.5 19l-3 3l3 3M79.5 22h1.5"/>
</g>
<g fill="none" stroke="#777" stroke-width="1.5">
<circle cx="104" cy="22" r="5"/><path d="M94.5 22h4.5M109 22h4.5"/>
<circle cx="134" cy="22" r="5"/><path d="M124.5 22h4.5M139 22h5M141 19l3 3l-3 3"/>
</g>
<g fill="none" stroke="#c5c5c5" stroke-width="1.5">
<circle cx="168" cy="22" r="8.5"/><path d="M166 16v12M166 17l5 4.5"/>
</g>
<circle cx="166" cy="16.5" r="1.6" fill="#c5c5c5"/><circle cx="171" cy="21.5" r="1.6" fill="#c5c5c5"/><circle cx="166" cy="27.5" r="1.6" fill="#c5c5c5"/>
<g fill="none" stroke="#c5c5c5" stroke-width="1.5">
<rect x="194" y="13.5" width="16" height="16" rx="1.5"/><path d="M202 13.5v16"/>
</g>
<circle cx="227" cy="22" r="1.4" fill="#c5c5c5"/><circle cx="233" cy="22" r="1.4" fill="#c5c5c5"/><circle cx="239" cy="22" r="1.4" fill="#c5c5c5"/>
</svg>
</div>
<div id="crumbs">
<div class="a" style="left:20.30px;top:7.20px;font-size:16px;color:#a9a9a9;white-space:nowrap;line-height:1;transform-origin:0 0;transform:scale(1.0245,1.0);">lib</div>
<svg width="8" height="12" style="left:44px;top:8.5px" viewBox="0 0 8 12"><path d="M1 1L6.5 6L1 11" fill="none" stroke="#a9a9a9" stroke-width="1.3"/></svg>
<div class="a" style="left:57.80px;top:7.20px;font-size:16px;color:#a9a9a9;white-space:nowrap;line-height:1;transform-origin:0 0;transform:scale(0.9311,1.0);">Screen</div>
<svg width="8" height="12" style="left:112px;top:8.5px" viewBox="0 0 8 12"><path d="M1 1L6.5 6L1 11" fill="none" stroke="#a9a9a9" stroke-width="1.3"/></svg>
<div class="a" style="left:126.20px;top:7.20px;font-size:16px;color:#a9a9a9;white-space:nowrap;line-height:1;transform-origin:0 0;transform:scale(0.9867,1.0);">Profile</div>
<svg width="8" height="12" style="left:177.5px;top:8.5px" viewBox="0 0 8 12"><path d="M1 1L6.5 6L1 11" fill="none" stroke="#a9a9a9" stroke-width="1.3"/></svg>
<svg width="18" height="18" style="left:192px;top:4.5px" viewBox="0 0 18 18">
<path d="M4 4.2L9.4 0.3L17.8 8.6L17.8 14.5L14.8 18.2L7 18.2L0 9.5Z" fill="#2a65ab"/>
<path d="M3.9 5L14.8 17L14.6 18.2L7.2 18.2L3.9 13Z" fill="#5ab9ee"/>
<path d="M3.9 5L9.3 0.4L12.4 4.3Z" fill="#80cdf5"/>
</svg>
<div class="a" style="left:219.50px;top:7.20px;font-size:16px;color:#a9a9a9;white-space:nowrap;line-height:1;transform-origin:0 0;transform:scale(1.0051,1.0);">MyProfile.dart</div>
<svg width="8" height="12" style="left:327.5px;top:8.5px" viewBox="0 0 8 12"><path d="M1 1L6.5 6L1 11" fill="none" stroke="#a9a9a9" stroke-width="1.3"/></svg>
<svg width="18" height="18" style="left:341px;top:5px" viewBox="0 0 18 18"><g fill="none" stroke="#ee9d28" stroke-width="1.5">
<path d="M1.2 4.2l3-3l3.2 3.2l-3 3z"/><path d="M11.5 7.8l2.4-2.4l3 3l-2.4 2.4z"/><path d="M11 13.5l2.4-2.4l3 3l-2.4 2.4z"/>
<path d="M5.8 5.8v8.8h5M5.8 9.2h5.8"/></g></svg>
<div class="a" style="left:363.00px;top:7.20px;font-size:16px;color:#a9a9a9;white-space:nowrap;line-height:1;transform-origin:0 0;transform:scale(0.9793,1.0);">StateProfile</div>
<svg width="8" height="12" style="left:451px;top:8.5px" viewBox="0 0 8 12"><path d="M1 1L6.5 6L1 11" fill="none" stroke="#a9a9a9" stroke-width="1.3"/></svg>
<svg width="17" height="18" style="left:466.5px;top:5px" viewBox="0 0 17 18"><g fill="none" stroke="#b180d7" stroke-width="1.5" stroke-linejoin="round">
<path d="M8.5 1L15.8 4.8v8.4L8.5 17L1.2 13.2V4.8z"/><path d="M1.2 4.8L8.5 8.6L15.8 4.8M8.5 8.6V17"/></g></svg>
<div class="a" style="left:487.50px;top:7.20px;font-size:16px;color:#a9a9a9;white-space:nowrap;line-height:1;transform-origin:0 0;transform:scale(0.9939,1.0);">_getDrawer</div>
</div>
<div id="editor">
<div class="a" style="left:85.60000000000002px;top:597.75px;width:1177.4px;height:23.75px;border-top:2px solid #282828;border-bottom:2px solid #282828"></div>
<div class="g" style="left:84.80px;top:4.00px;height:23.75px;background:#404040"></div>
<div class="g" style="left:104.04px;top:4.00px;height:23.75px;background:#404040"></div>
<div class="g" style="left:123.28px;top:4.00px;height:23.75px;background:#404040"></div>
<div class="g" style="left:84.80px;top:27.75px;height:23.75px;background:#404040"></div>
<div class="g" style="left:104.04px;top:27.75px;height:23.75px;background:#404040"></div>
<div class="g" style="left:123.28px;top:27.75px;height:23.75px;background:#404040"></div>
<div class="g" style="left:142.52px;top:27.75px;height:23.75px;background:#404040"></div>
<div class="g" style="left:84.80px;top:51.50px;height:23.75px;background:#404040"></div>
<div class="g" style="left:104.04px;top:51.50px;height:23.75px;background:#404040"></div>
<div class="g" style="left:123.28px;top:51.50px;height:23.75px;background:#404040"></div>
<div class="g" style="left:142.52px;top:51.50px;height:23.75px;background:#404040"></div>
<div class="g" style="left:161.76px;top:51.50px;height:23.75px;background:#404040"></div>
<div class="g" style="left:181.00px;top:51.50px;height:23.75px;background:#404040"></div>
<div class="g" style="left:84.80px;top:75.25px;height:23.75px;background:#404040"></div>
<div class="g" style="left:104.04px;top:75.25px;height:23.75px;background:#404040"></div>
<div class="g" style="left:123.28px;top:75.25px;height:23.75px;background:#404040"></div>
<div class="g" style="left:142.52px;top:75.25px;height:23.75px;background:#404040"></div>
<div class="g" style="left:161.76px;top:75.25px;height:23.75px;background:#404040"></div>
<div class="g" style="left:181.00px;top:75.25px;height:23.75px;background:#404040"></div>
<div class="g" style="left:84.80px;top:99.00px;height:23.75px;background:#404040"></div>
<div class="g" style="left:104.04px;top:99.00px;height:23.75px;background:#404040"></div>
<div class="g" style="left:123.28px;top:99.00px;height:23.75px;background:#404040"></div>
<div class="g" style="left:142.52px;top:99.00px;height:23.75px;background:#404040"></div>
<div class="g" style="left:161.76px;top:99.00px;height:23.75px;background:#404040"></div>
<div class="g" style="left:181.00px;top:99.00px;height:23.75px;background:#404040"></div>
<div class="g" style="left:200.24px;top:99.00px;height:23.75px;background:#404040"></div>
<div class="g" style="left:219.48px;top:99.00px;height:23.75px;background:#404040"></div>
<div class="g" style="left:84.80px;top:122.75px;height:23.75px;background:#404040"></div>
<div class="g" style="left:104.04px;top:122.75px;height:23.75px;background:#404040"></div>
<div class="g" style="left:123.28px;top:122.75px;height:23.75px;background:#404040"></div>
<div class="g" style="left:142.52px;top:122.75px;height:23.75px;background:#404040"></div>
<div class="g" style="left:84.80px;top:146.50px;height:23.75px;background:#404040"></div>
<div class="g" style="left:104.04px;top:146.50px;height:23.75px;background:#404040"></div>
<div class="g" style="left:123.28px;top:146.50px;height:23.75px;background:#404040"></div>
<div class="g" style="left:142.52px;top:146.50px;height:23.75px;background:#404040"></div>
<div class="g" style="left:161.76px;top:146.50px;height:23.75px;background:#404040"></div>
<div class="g" style="left:181.00px;top:146.50px;height:23.75px;background:#404040"></div>
<div class="g" style="left:84.80px;top:170.25px;height:23.75px;background:#404040"></div>
<div class="g" style="left:104.04px;top:170.25px;height:23.75px;background:#404040"></div>
<div class="g" style="left:123.28px;top:170.25px;height:23.75px;background:#404040"></div>
<div class="g" style="left:142.52px;top:170.25px;height:23.75px;background:#404040"></div>
<div class="g" style="left:161.76px;top:170.25px;height:23.75px;background:#404040"></div>
<div class="g" style="left:181.00px;top:170.25px;height:23.75px;background:#404040"></div>
<div class="g" style="left:84.80px;top:194.00px;height:23.75px;background:#404040"></div>
<div class="g" style="left:104.04px;top:194.00px;height:23.75px;background:#404040"></div>
<div class="g" style="left:123.28px;top:194.00px;height:23.75px;background:#404040"></div>
<div class="g" style="left:142.52px;top:194.00px;height:23.75px;background:#404040"></div>
<div class="g" style="left:161.76px;top:194.00px;height:23.75px;background:#404040"></div>
<div class="g" style="left:181.00px;top:194.00px;height:23.75px;background:#404040"></div>
<div class="g" style="left:200.24px;top:194.00px;height:23.75px;background:#404040"></div>
<div class="g" style="left:219.48px;top:194.00px;height:23.75px;background:#404040"></div>
<div class="g" style="left:84.80px;top:217.75px;height:23.75px;background:#404040"></div>
<div class="g" style="left:104.04px;top:217.75px;height:23.75px;background:#404040"></div>
<div class="g" style="left:123.28px;top:217.75px;height:23.75px;background:#404040"></div>
<div class="g" style="left:142.52px;top:217.75px;height:23.75px;background:#404040"></div>
<div class="g" style="left:84.80px;top:241.50px;height:23.75px;background:#404040"></div>
<div class="g" style="left:104.04px;top:241.50px;height:23.75px;background:#404040"></div>
<div class="g" style="left:123.28px;top:241.50px;height:23.75px;background:#404040"></div>
<div class="g" style="left:142.52px;top:241.50px;height:23.75px;background:#404040"></div>
<div class="g" style="left:161.76px;top:241.50px;height:23.75px;background:#404040"></div>
<div class="g" style="left:181.00px;top:241.50px;height:23.75px;background:#404040"></div>
<div class="g" style="left:84.80px;top:265.25px;height:23.75px;background:#404040"></div>
<div class="g" style="left:104.04px;top:265.25px;height:23.75px;background:#404040"></div>
<div class="g" style="left:123.28px;top:265.25px;height:23.75px;background:#404040"></div>
<div class="g" style="left:142.52px;top:265.25px;height:23.75px;background:#404040"></div>
<div class="g" style="left:161.76px;top:265.25px;height:23.75px;background:#404040"></div>
<div class="g" style="left:181.00px;top:265.25px;height:23.75px;background:#404040"></div>
<div class="g" style="left:84.80px;top:289.00px;height:23.75px;background:#404040"></div>
<div class="g" style="left:104.04px;top:289.00px;height:23.75px;background:#404040"></div>
<div class="g" style="left:123.28px;top:289.00px;height:23.75px;background:#404040"></div>
<div class="g" style="left:142.52px;top:289.00px;height:23.75px;background:#404040"></div>
<div class="g" style="left:84.80px;top:312.75px;height:23.75px;background:#404040"></div>
<div class="g" style="left:104.04px;top:312.75px;height:23.75px;background:#404040"></div>
<div class="g" style="left:123.28px;top:312.75px;height:23.75px;background:#404040"></div>
<div class="g" style="left:142.52px;top:312.75px;height:23.75px;background:#404040"></div>
<div class="g" style="left:161.76px;top:312.75px;height:23.75px;background:#404040"></div>
<div class="g" style="left:181.00px;top:312.75px;height:23.75px;background:#404040"></div>
<div class="g" style="left:84.80px;top:336.50px;height:23.75px;background:#404040"></div>
<div class="g" style="left:104.04px;top:336.50px;height:23.75px;background:#404040"></div>
<div class="g" style="left:123.28px;top:336.50px;height:23.75px;background:#404040"></div>
<div class="g" style="left:142.52px;top:336.50px;height:23.75px;background:#404040"></div>
<div class="g" style="left:161.76px;top:336.50px;height:23.75px;background:#404040"></div>
<div class="g" style="left:181.00px;top:336.50px;height:23.75px;background:#404040"></div>
<div class="g" style="left:84.80px;top:360.25px;height:23.75px;background:#404040"></div>
<div class="g" style="left:104.04px;top:360.25px;height:23.75px;background:#404040"></div>
<div class="g" style="left:123.28px;top:360.25px;height:23.75px;background:#404040"></div>
<div class="g" style="left:142.52px;top:360.25px;height:23.75px;background:#404040"></div>
<div class="g" style="left:84.80px;top:384.00px;height:23.75px;background:#404040"></div>
<div class="g" style="left:104.04px;top:384.00px;height:23.75px;background:#404040"></div>
<div class="g" style="left:123.28px;top:384.00px;height:23.75px;background:#404040"></div>
<div class="g" style="left:142.52px;top:384.00px;height:23.75px;background:#404040"></div>
<div class="g" style="left:161.76px;top:384.00px;height:23.75px;background:#404040"></div>
<div class="g" style="left:181.00px;top:384.00px;height:23.75px;background:#404040"></div>
<div class="g" style="left:84.80px;top:407.75px;height:23.75px;background:#404040"></div>
<div class="g" style="left:104.04px;top:407.75px;height:23.75px;background:#404040"></div>
<div class="g" style="left:123.28px;top:407.75px;height:23.75px;background:#404040"></div>
<div class="g" style="left:142.52px;top:407.75px;height:23.75px;background:#404040"></div>
<div class="g" style="left:161.76px;top:407.75px;height:23.75px;background:#404040"></div>
<div class="g" style="left:181.00px;top:407.75px;height:23.75px;background:#404040"></div>
<div class="g" style="left:84.80px;top:431.50px;height:23.75px;background:#404040"></div>
<div class="g" style="left:104.04px;top:431.50px;height:23.75px;background:#404040"></div>
<div class="g" style="left:123.28px;top:431.50px;height:23.75px;background:#404040"></div>
<div class="g" style="left:142.52px;top:431.50px;height:23.75px;background:#404040"></div>
<div class="g" style="left:161.76px;top:431.50px;height:23.75px;background:#404040"></div>
<div class="g" style="left:181.00px;top:431.50px;height:23.75px;background:#404040"></div>
<div class="g" style="left:200.24px;top:431.50px;height:23.75px;background:#404040"></div>
<div class="g" style="left:219.48px;top:431.50px;height:23.75px;background:#404040"></div>
<div class="g" style="left:84.80px;top:455.25px;height:23.75px;background:#404040"></div>
<div class="g" style="left:104.04px;top:455.25px;height:23.75px;background:#404040"></div>
<div class="g" style="left:123.28px;top:455.25px;height:23.75px;background:#404040"></div>
<div class="g" style="left:142.52px;top:455.25px;height:23.75px;background:#404040"></div>
<div class="g" style="left:84.80px;top:479.00px;height:23.75px;background:#404040"></div>
<div class="g" style="left:104.04px;top:479.00px;height:23.75px;background:#404040"></div>
<div class="g" style="left:123.28px;top:479.00px;height:23.75px;background:#404040"></div>
<div class="g" style="left:142.52px;top:479.00px;height:23.75px;background:#404040"></div>
<div class="g" style="left:84.80px;top:502.75px;height:23.75px;background:#404040"></div>
<div class="g" style="left:104.04px;top:502.75px;height:23.75px;background:#404040"></div>
<div class="g" style="left:123.28px;top:502.75px;height:23.75px;background:#404040"></div>
<div class="g" style="left:142.52px;top:502.75px;height:23.75px;background:#404040"></div>
<div class="g" style="left:84.80px;top:526.50px;height:23.75px;background:#404040"></div>
<div class="g" style="left:104.04px;top:526.50px;height:23.75px;background:#404040"></div>
<div class="g" style="left:123.28px;top:526.50px;height:23.75px;background:#404040"></div>
<div class="g" style="left:142.52px;top:526.50px;height:23.75px;background:#404040"></div>
<div class="g" style="left:161.76px;top:526.50px;height:23.75px;background:#404040"></div>
<div class="g" style="left:181.00px;top:526.50px;height:23.75px;background:#404040"></div>
<div class="g" style="left:84.80px;top:550.25px;height:23.75px;background:#404040"></div>
<div class="g" style="left:104.04px;top:550.25px;height:23.75px;background:#404040"></div>
<div class="g" style="left:123.28px;top:550.25px;height:23.75px;background:#404040"></div>
<div class="g" style="left:142.52px;top:550.25px;height:23.75px;background:#404040"></div>
<div class="g" style="left:84.80px;top:574.00px;height:23.75px;background:#404040"></div>
<div class="g" style="left:104.04px;top:574.00px;height:23.75px;background:#404040"></div>
<div class="g" style="left:123.28px;top:574.00px;height:23.75px;background:#404040"></div>
<div class="g" style="left:142.52px;top:574.00px;height:23.75px;background:#404040"></div>
<div class="g" style="left:161.76px;top:574.00px;height:23.75px;background:#404040"></div>
<div class="g" style="left:181.00px;top:574.00px;height:23.75px;background:#707070"></div>
<div class="g" style="left:84.80px;top:597.75px;height:23.75px;background:#404040"></div>
<div class="g" style="left:104.04px;top:597.75px;height:23.75px;background:#404040"></div>
<div class="g" style="left:123.28px;top:597.75px;height:23.75px;background:#404040"></div>
<div class="g" style="left:142.52px;top:597.75px;height:23.75px;background:#404040"></div>
<div class="g" style="left:161.76px;top:597.75px;height:23.75px;background:#404040"></div>
<div class="g" style="left:181.00px;top:597.75px;height:23.75px;background:#707070"></div>
<div class="g" style="left:84.80px;top:621.50px;height:23.75px;background:#404040"></div>
<div class="g" style="left:104.04px;top:621.50px;height:23.75px;background:#404040"></div>
<div class="g" style="left:123.28px;top:621.50px;height:23.75px;background:#404040"></div>
<div class="g" style="left:142.52px;top:621.50px;height:23.75px;background:#404040"></div>
<div class="g" style="left:161.76px;top:621.50px;height:23.75px;background:#404040"></div>
<div class="g" style="left:181.00px;top:621.50px;height:23.75px;background:#707070"></div>
<div class="g" style="left:200.24px;top:621.50px;height:23.75px;background:#404040"></div>
<div class="g" style="left:219.48px;top:621.50px;height:23.75px;background:#404040"></div>
<div class="g" style="left:84.80px;top:645.25px;height:23.75px;background:#404040"></div>
<div class="g" style="left:104.04px;top:645.25px;height:23.75px;background:#404040"></div>
<div class="g" style="left:123.28px;top:645.25px;height:23.75px;background:#404040"></div>
<div class="g" style="left:142.52px;top:645.25px;height:23.75px;background:#404040"></div>
<div class="g" style="left:84.80px;top:669.00px;height:23.75px;background:#404040"></div>
<div class="g" style="left:104.04px;top:669.00px;height:23.75px;background:#404040"></div>
<div class="g" style="left:123.28px;top:669.00px;height:23.75px;background:#404040"></div>
<div class="g" style="left:142.52px;top:669.00px;height:23.75px;background:#404040"></div>
<div class="g" style="left:161.76px;top:669.00px;height:23.75px;background:#404040"></div>
<div class="g" style="left:181.00px;top:669.00px;height:23.75px;background:#404040"></div>
<div class="g" style="left:84.80px;top:692.75px;height:23.75px;background:#404040"></div>
<div class="g" style="left:104.04px;top:692.75px;height:23.75px;background:#404040"></div>
<div class="g" style="left:123.28px;top:692.75px;height:23.75px;background:#404040"></div>
<div class="g" style="left:142.52px;top:692.75px;height:23.75px;background:#404040"></div>
<div class="g" style="left:161.76px;top:692.75px;height:23.75px;background:#404040"></div>
<div class="g" style="left:181.00px;top:692.75px;height:23.75px;background:#404040"></div>
<div class="g" style="left:84.80px;top:716.50px;height:23.75px;background:#404040"></div>
<div class="g" style="left:104.04px;top:716.50px;height:23.75px;background:#404040"></div>
<div class="g" style="left:123.28px;top:716.50px;height:23.75px;background:#404040"></div>
<div class="g" style="left:142.52px;top:716.50px;height:23.75px;background:#404040"></div>
<div class="g" style="left:161.76px;top:716.50px;height:23.75px;background:#404040"></div>
<div class="g" style="left:181.00px;top:716.50px;height:23.75px;background:#404040"></div>
<div class="g" style="left:200.24px;top:716.50px;height:23.75px;background:#404040"></div>
<div class="g" style="left:219.48px;top:716.50px;height:23.75px;background:#404040"></div>
<div class="g" style="left:84.80px;top:740.25px;height:23.75px;background:#404040"></div>
<div class="g" style="left:104.04px;top:740.25px;height:23.75px;background:#404040"></div>
<div class="g" style="left:123.28px;top:740.25px;height:23.75px;background:#404040"></div>
<div class="g" style="left:142.52px;top:740.25px;height:23.75px;background:#404040"></div>
<div class="g" style="left:84.80px;top:764.00px;height:23.75px;background:#404040"></div>
<div class="g" style="left:104.04px;top:764.00px;height:23.75px;background:#404040"></div>
<div class="g" style="left:123.28px;top:764.00px;height:23.75px;background:#404040"></div>
<div class="g" style="left:142.52px;top:764.00px;height:23.75px;background:#404040"></div>
<div class="g" style="left:161.76px;top:764.00px;height:23.75px;background:#404040"></div>
<div class="g" style="left:181.00px;top:764.00px;height:23.75px;background:#404040"></div>
<div class="g" style="left:84.80px;top:787.75px;height:23.75px;background:#404040"></div>
<div class="g" style="left:104.04px;top:787.75px;height:23.75px;background:#404040"></div>
<div class="g" style="left:123.28px;top:787.75px;height:23.75px;background:#404040"></div>
<div class="g" style="left:142.52px;top:787.75px;height:23.75px;background:#404040"></div>
<div class="g" style="left:84.80px;top:811.50px;height:23.75px;background:#404040"></div>
<div class="g" style="left:104.04px;top:811.50px;height:23.75px;background:#404040"></div>
<div class="g" style="left:123.28px;top:811.50px;height:23.75px;background:#404040"></div>
<div class="g" style="left:142.52px;top:811.50px;height:23.75px;background:#404040"></div>
<div class="g" style="left:84.80px;top:835.25px;height:23.75px;background:#404040"></div>
<div class="g" style="left:104.04px;top:835.25px;height:23.75px;background:#404040"></div>
<div class="g" style="left:123.28px;top:835.25px;height:23.75px;background:#404040"></div>
<div class="g" style="left:142.52px;top:835.25px;height:23.75px;background:#404040"></div>
<div class="g" style="left:161.76px;top:835.25px;height:23.75px;background:#404040"></div>
<div class="g" style="left:181.00px;top:835.25px;height:23.75px;background:#404040"></div>
<div class="g" style="left:84.80px;top:859.00px;height:23.75px;background:#404040"></div>
<div class="g" style="left:104.04px;top:859.00px;height:23.75px;background:#404040"></div>
<div class="g" style="left:123.28px;top:859.00px;height:23.75px;background:#404040"></div>
<div class="g" style="left:142.52px;top:859.00px;height:23.75px;background:#404040"></div>
<div class="g" style="left:84.80px;top:882.75px;height:23.75px;background:#404040"></div>
<div class="g" style="left:104.04px;top:882.75px;height:23.75px;background:#404040"></div>
<div class="g" style="left:123.28px;top:882.75px;height:23.75px;background:#404040"></div>
<div class="g" style="left:142.52px;top:882.75px;height:23.75px;background:#404040"></div>
<div class="g" style="left:84.80px;top:906.50px;height:23.75px;background:#404040"></div>
<div class="g" style="left:104.04px;top:906.50px;height:23.75px;background:#404040"></div>
<div class="g" style="left:123.28px;top:906.50px;height:23.75px;background:#404040"></div>
<div class="g" style="left:142.52px;top:906.50px;height:23.75px;background:#404040"></div>
<div class="g" style="left:84.80px;top:930.25px;height:23.75px;background:#404040"></div>
<div class="g" style="left:104.04px;top:930.25px;height:23.75px;background:#404040"></div>
<div class="g" style="left:123.28px;top:930.25px;height:23.75px;background:#404040"></div>
<div class="g" style="left:142.52px;top:930.25px;height:23.75px;background:#404040"></div>
<div class="g" style="left:84.80px;top:954.00px;height:23.75px;background:#404040"></div>
<div class="g" style="left:104.04px;top:954.00px;height:23.75px;background:#404040"></div>
<div class="g" style="left:123.28px;top:954.00px;height:23.75px;background:#404040"></div>
<div class="g" style="left:142.52px;top:954.00px;height:23.75px;background:#404040"></div>
<div class="g" style="left:161.76px;top:954.00px;height:23.75px;background:#404040"></div>
<div class="g" style="left:181.00px;top:954.00px;height:23.75px;background:#404040"></div>
<div class="g" style="left:84.80px;top:-19.75px;height:23.75px"></div>
<div class="g" style="left:84.80px;top:977.75px;height:23.75px"></div>
<div class="g" style="left:104.04px;top:-19.75px;height:23.75px"></div>
<div class="g" style="left:104.04px;top:977.75px;height:23.75px"></div>
<div class="g" style="left:123.28px;top:-19.75px;height:23.75px"></div>
<div class="g" style="left:123.28px;top:977.75px;height:23.75px"></div>
<div class="g" style="left:142.52px;top:-19.75px;height:23.75px"></div>
<div class="g" style="left:142.52px;top:977.75px;height:23.75px"></div>
<div class="a" style="left:855px;top:0;width:1px;height:981px;background:#5a5a5a"></div>
<div class="ln" style="left:0;width:52.5px;top:4.00px;color:#858585">66</div>
<div class="ln" style="left:0;width:52.5px;top:27.75px;color:#858585">67</div>
<div class="ln" style="left:0;width:52.5px;top:51.50px;color:#858585">68</div>
<div class="ln" style="left:0;width:52.5px;top:75.25px;color:#858585">69</div>
<div class="ln" style="left:0;width:52.5px;top:99.00px;color:#858585">70</div>
<div class="ln" style="left:0;width:52.5px;top:122.75px;color:#858585">71</div>
<div class="ln" style="left:0;width:52.5px;top:146.50px;color:#858585">72</div>
<div class="ln" style="left:0;width:52.5px;top:170.25px;color:#858585">73</div>
<div class="ln" style="left:0;width:52.5px;top:194.00px;color:#858585">74</div>
<div class="ln" style="left:0;width:52.5px;top:217.75px;color:#858585">75</div>
<div class="ln" style="left:0;width:52.5px;top:241.50px;color:#858585">76</div>
<div class="ln" style="left:0;width:52.5px;top:265.25px;color:#858585">77</div>
<div class="ln" style="left:0;width:52.5px;top:289.00px;color:#858585">78</div>
<div class="ln" style="left:0;width:52.5px;top:312.75px;color:#858585">79</div>
<div class="ln" style="left:0;width:52.5px;top:336.50px;color:#858585">80</div>
<div class="ln" style="left:0;width:52.5px;top:360.25px;color:#858585">81</div>
<div class="ln" style="left:0;width:52.5px;top:384.00px;color:#858585">82</div>
<div class="ln" style="left:0;width:52.5px;top:407.75px;color:#858585">83</div>
<div class="ln" style="left:0;width:52.5px;top:431.50px;color:#858585">84</div>
<div class="ln" style="left:0;width:52.5px;top:455.25px;color:#858585">85</div>
<div class="ln" style="left:0;width:52.5px;top:479.00px;color:#858585">86</div>
<div class="ln" style="left:0;width:52.5px;top:502.75px;color:#858585">87</div>
<div class="ln" style="left:0;width:52.5px;top:526.50px;color:#858585">88</div>
<div class="ln" style="left:0;width:52.5px;top:550.25px;color:#858585">89</div>
<div class="ln" style="left:0;width:52.5px;top:574.00px;color:#858585">90</div>
<div class="ln" style="left:0;width:52.5px;top:597.75px;color:#c6c6c6">91</div>
<div class="ln" style="left:0;width:52.5px;top:621.50px;color:#858585">92</div>
<div class="ln" style="left:0;width:52.5px;top:645.25px;color:#858585">93</div>
<div class="ln" style="left:0;width:52.5px;top:669.00px;color:#858585">94</div>
<div class="ln" style="left:0;width:52.5px;top:692.75px;color:#858585">95</div>
<div class="ln" style="left:0;width:52.5px;top:716.50px;color:#858585">96</div>
<div class="ln" style="left:0;width:52.5px;top:740.25px;color:#858585">97</div>
<div class="ln" style="left:0;width:52.5px;top:764.00px;color:#858585">98</div>
<div class="ln" style="left:0;width:52.5px;top:787.75px;color:#858585">99</div>
<div class="ln" style="left:0;width:52.5px;top:811.50px;color:#858585">100</div>
<div class="ln" style="left:0;width:52.5px;top:835.25px;color:#858585">101</div>
<div class="ln" style="left:0;width:52.5px;top:859.00px;color:#858585">102</div>
<div class="ln" style="left:0;width:52.5px;top:882.75px;color:#858585">103</div>
<div class="ln" style="left:0;width:52.5px;top:906.50px;color:#858585">104</div>
<div class="ln" style="left:0;width:52.5px;top:930.25px;color:#858585">105</div>
<div class="ln" style="left:0;width:52.5px;top:954.00px;color:#858585">106</div>
<div class="ln" style="left:0;width:52.5px;top:977.75px;color:#858585">107</div>
<div class="cl" style="left:143.32px;top:4.00px"><span style="color:#9cdcfe">children</span>: &lt;<span style="color:#4ec9b0">Widget</span>&gt;<span style="color:#ffd700">[</span></div>
<div class="cl" style="left:162.56px;top:27.75px"><span style="color:#9cdcfe">CUR_USERID</span> == <span style="color:#ce9178">&#x27;&#x27;</span> || <span style="color:#9cdcfe">CUR_USERID</span> == <span style="color:#569cd6">null</span></div>
<div class="cl" style="left:201.04px;top:51.50px">? <span style="color:#4ec9b0">Container</span><span style="color:#da70d6">(</span><span style="color:#da70d6">)</span></div>
<div class="cl" style="left:201.04px;top:75.25px">: <span style="color:#dcdcaa">_getDrawerItem</span><span style="color:#da70d6">(</span></div>
<div class="cl" style="left:239.52px;top:99.00px"><span style="color:#dcdcaa">getTranslated</span><span style="color:#179fff">(</span><span style="color:#9cdcfe">context</span>, <span style="color:#ce9178">&#x27;MY_ORDERS_LBL&#x27;</span><span style="color:#179fff">)</span>!, <span style="color:#ce9178">&#x27;pro_myorder&#x27;</span><span style="color:#da70d6">)</span>,</div>
<div class="cl" style="left:162.56px;top:122.75px"><span style="color:#9cdcfe">CUR_USERID</span> == <span style="color:#ce9178">&#x27;&#x27;</span> || <span style="color:#9cdcfe">CUR_USERID</span> == <span style="color:#569cd6">null</span></div>
<div class="cl" style="left:201.04px;top:146.50px">? <span style="color:#4ec9b0">Container</span><span style="color:#da70d6">(</span><span style="color:#da70d6">)</span></div>
<div class="cl" style="left:201.04px;top:170.25px">: <span style="color:#dcdcaa">_getDrawerItem</span><span style="color:#da70d6">(</span></div>
<div class="cl" style="left:239.52px;top:194.00px"><span style="color:#dcdcaa">getTranslated</span><span style="color:#179fff">(</span><span style="color:#9cdcfe">context</span>, <span style="color:#ce9178">&#x27;MANAGE_ADD_LBL&#x27;</span><span style="color:#179fff">)</span>!, <span style="color:#ce9178">&#x27;pro_address&#x27;</span><span style="color:#da70d6">)</span>,</div>
<div class="cl" style="left:162.56px;top:217.75px"><span style="color:#9cdcfe">CUR_USERID</span> == <span style="color:#ce9178">&#x27;&#x27;</span> || <span style="color:#9cdcfe">CUR_USERID</span> == <span style="color:#569cd6">null</span></div>
<div class="cl" style="left:201.04px;top:241.50px">? <span style="color:#4ec9b0">Container</span><span style="color:#da70d6">(</span><span style="color:#da70d6">)</span></div>
<div class="cl" style="left:201.04px;top:265.25px">: <span style="color:#dcdcaa">_getDrawerItem</span><span style="color:#da70d6">(</span><span style="color:#dcdcaa">getTranslated</span><span style="color:#179fff">(</span><span style="color:#9cdcfe">context</span>, <span style="color:#ce9178">&#x27;MYWALLET&#x27;</span><span style="color:#179fff">)</span>!, <span style="color:#ce9178">&#x27;pro_wh&#x27;</span><span style="color:#da70d6">)</span>,</div>
<div class="cl" style="left:162.56px;top:289.00px"><span style="color:#9cdcfe">CUR_USERID</span> == <span style="color:#ce9178">&#x27;&#x27;</span> || <span style="color:#9cdcfe">CUR_USERID</span> == <span style="color:#569cd6">null</span></div>
<div class="cl" style="left:201.04px;top:312.75px">? <span style="color:#4ec9b0">Container</span><span style="color:#da70d6">(</span><span style="color:#da70d6">)</span></div>
<div class="cl" style="left:201.04px;top:336.50px">: <span style="color:#dcdcaa">_getDrawerItem</span><span style="color:#da70d6">(</span><span style="color:#dcdcaa">getTranslated</span><span style="color:#179fff">(</span><span style="color:#9cdcfe">context</span>, <span style="color:#ce9178">&#x27;YOUR_PROM_CO&#x27;</span><span style="color:#179fff">)</span>!, <span style="color:#ce9178">&#x27;promo&#x27;</span><span style="color:#da70d6">)</span>,</div>
<div class="cl" style="left:162.56px;top:360.25px"><span style="color:#9cdcfe">CUR_USERID</span> == <span style="color:#ce9178">&#x27;&#x27;</span> || <span style="color:#9cdcfe">CUR_USERID</span> == <span style="color:#569cd6">null</span></div>
<div class="cl" style="left:201.04px;top:384.00px">? <span style="color:#4ec9b0">Container</span><span style="color:#da70d6">(</span><span style="color:#da70d6">)</span></div>
<div class="cl" style="left:201.04px;top:407.75px">: <span style="color:#dcdcaa">_getDrawerItem</span><span style="color:#da70d6">(</span></div>
<div class="cl" style="left:239.52px;top:431.50px"><span style="color:#dcdcaa">getTranslated</span><span style="color:#179fff">(</span><span style="color:#9cdcfe">context</span>, <span style="color:#ce9178">&#x27;MYTRANSACTION&#x27;</span><span style="color:#179fff">)</span>!, <span style="color:#ce9178">&#x27;pro_th&#x27;</span><span style="color:#da70d6">)</span>,</div>
<div class="cl" style="left:162.56px;top:455.25px"><span style="color:#6a9955">// _getDrawerItem(</span></div>
<div class="cl" style="left:162.56px;top:479.00px"><span style="color:#6a9955">//     getTranslated(context, &#x27;CHANGE_THEME_LBL&#x27;)!, &#x27;pro_theme&#x27;),</span></div>
<div class="cl" style="left:162.56px;top:502.75px"><span style="color:#dcdcaa">_getDrawerItem</span><span style="color:#da70d6">(</span></div>
<div class="cl" style="left:201.04px;top:526.50px"><span style="color:#dcdcaa">getTranslated</span><span style="color:#179fff">(</span><span style="color:#9cdcfe">context</span>, <span style="color:#ce9178">&#x27;CHANGE_LANGUAGE_LBL&#x27;</span><span style="color:#179fff">)</span>!, <span style="color:#ce9178">&#x27;pro_language&#x27;</span><span style="color:#da70d6">)</span>,</div>
<div class="cl" style="left:162.56px;top:550.25px"><span style="color:#9cdcfe">CUR_USERID</span> == <span style="color:#ce9178">&#x27;&#x27;</span> || <span style="color:#9cdcfe">CUR_USERID</span> == <span style="color:#569cd6">null</span></div>
<div class="cl" style="left:201.04px;top:574.00px">? <span style="color:#4ec9b0">Container</span><span style="color:#da70d6">(</span><span style="color:#da70d6">)</span></div>
<div class="cl" style="left:201.04px;top:597.75px">: <span style="color:#dcdcaa">_getDrawerItem</span><span style="color:#da70d6">(</span></div>
<div class="cl" style="left:239.52px;top:621.50px"><span style="color:#dcdcaa">getTranslated</span><span style="color:#179fff">(</span><span style="color:#9cdcfe">context</span>, <span style="color:#ce9178">&#x27;CHANGE_PASS_LBL&#x27;</span><span style="color:#179fff">)</span>!, <span style="color:#ce9178">&#x27;pro_pass&#x27;</span><span style="color:#da70d6">)</span>,</div>
<div class="cl" style="left:162.56px;top:645.25px"><span style="color:#9cdcfe">CUR_USERID</span> == <span style="color:#ce9178">&#x27;&#x27;</span> || <span style="color:#9cdcfe">CUR_USERID</span> == <span style="color:#569cd6">null</span> || !<span style="color:#9cdcfe">refer</span></div>
<div class="cl" style="left:201.04px;top:669.00px">? <span style="color:#4ec9b0">Container</span><span style="color:#da70d6">(</span><span style="color:#da70d6">)</span></div>
<div class="cl" style="left:201.04px;top:692.75px">: <span style="color:#dcdcaa">_getDrawerItem</span><span style="color:#da70d6">(</span></div>
<div class="cl" style="left:239.52px;top:716.50px"><span style="color:#dcdcaa">getTranslated</span><span style="color:#179fff">(</span><span style="color:#9cdcfe">context</span>, <span style="color:#ce9178">&#x27;REFEREARN&#x27;</span><span style="color:#179fff">)</span>!, <span style="color:#ce9178">&#x27;pro_referral&#x27;</span><span style="color:#da70d6">)</span>,</div>
<div class="cl" style="left:162.56px;top:740.25px"><span style="color:#dcdcaa">_getDrawerItem</span><span style="color:#da70d6">(</span></div>
<div class="cl" style="left:201.04px;top:764.00px"><span style="color:#dcdcaa">getTranslated</span><span style="color:#179fff">(</span><span style="color:#9cdcfe">context</span>, <span style="color:#ce9178">&#x27;CUSTOMER_SUPPORT&#x27;</span><span style="color:#179fff">)</span>!, <span style="color:#ce9178">&#x27;pro_customersupport&#x27;</span><span style="color:#da70d6">)</span>,</div>
<div class="cl" style="left:162.56px;top:787.75px"><span style="color:#dcdcaa">_getDrawerItem</span><span style="color:#da70d6">(</span><span style="color:#dcdcaa">getTranslated</span><span style="color:#179fff">(</span><span style="color:#9cdcfe">context</span>, <span style="color:#ce9178">&#x27;ABOUT_LBL&#x27;</span><span style="color:#179fff">)</span>!, <span style="color:#ce9178">&#x27;pro_aboutus&#x27;</span><span style="color:#da70d6">)</span>,</div>
<div class="cl" style="left:162.56px;top:811.50px"><span style="color:#dcdcaa">_getDrawerItem</span><span style="color:#da70d6">(</span></div>
<div class="cl" style="left:201.04px;top:835.25px"><span style="color:#dcdcaa">getTranslated</span><span style="color:#179fff">(</span><span style="color:#9cdcfe">context</span>, <span style="color:#ce9178">&#x27;CONTACT_LBL&#x27;</span><span style="color:#179fff">)</span>!, <span style="color:#ce9178">&#x27;pro_contact_us&#x27;</span><span style="color:#da70d6">)</span>,</div>
<div class="cl" style="left:162.56px;top:859.00px"><span style="color:#dcdcaa">_getDrawerItem</span><span style="color:#da70d6">(</span><span style="color:#dcdcaa">getTranslated</span><span style="color:#179fff">(</span><span style="color:#9cdcfe">context</span>, <span style="color:#ce9178">&#x27;FAQS&#x27;</span><span style="color:#179fff">)</span>!, <span style="color:#ce9178">&#x27;pro_faq&#x27;</span><span style="color:#da70d6">)</span>,</div>
<div class="cl" style="left:162.56px;top:882.75px"><span style="color:#dcdcaa">_getDrawerItem</span><span style="color:#da70d6">(</span><span style="color:#dcdcaa">getTranslated</span><span style="color:#179fff">(</span><span style="color:#9cdcfe">context</span>, <span style="color:#ce9178">&#x27;PRIVACY&#x27;</span><span style="color:#179fff">)</span>!, <span style="color:#ce9178">&#x27;pro_pp&#x27;</span><span style="color:#da70d6">)</span>,</div>
<div class="cl" style="left:162.56px;top:906.50px"><span style="color:#dcdcaa">_getDrawerItem</span><span style="color:#da70d6">(</span><span style="color:#dcdcaa">getTranslated</span><span style="color:#179fff">(</span><span style="color:#9cdcfe">context</span>, <span style="color:#ce9178">&#x27;TERM&#x27;</span><span style="color:#179fff">)</span>!, <span style="color:#ce9178">&#x27;pro_tc&#x27;</span><span style="color:#da70d6">)</span>,</div>
<div class="cl" style="left:162.56px;top:930.25px"><span style="color:#dcdcaa">_getDrawerItem</span><span style="color:#da70d6">(</span><span style="color:#dcdcaa">getTranslated</span><span style="color:#179fff">(</span><span style="color:#9cdcfe">context</span>, <span style="color:#ce9178">&#x27;SHIPPING_POLICY_LBL&#x27;</span><span style="color:#179fff">)</span>!,</div>
<div class="cl" style="left:201.04px;top:954.00px"><span style="color:#ce9178">&#x27;pro_shipping_policy&#x27;</span><span style="color:#da70d6">)</span>,</div>
<div class="cl" style="left:162.56px;top:977.75px"><span style="color:#ffd700">]</span></div>
<div class="cl" style="left:427px;top:597.75px;color:#535353">vijayvaghela72, 2 weeks ago • Simple Routes in Route Class</div>
<div class="a" style="left:84.40000000000002px;top:599.75px;width:18.74px;height:19.75px;background:#1e1e1e"></div>
<svg width="14" height="18" style="left:88.70000000000005px;top:598.75px" viewBox="0 0 14 18">
<path d="M7 0.6a6 6 0 0 1 3.6 10.8v2.2h-7.2v-2.2A6 6 0 0 1 7 0.6z" fill="#ffcc00"/>
<rect x="3.6" y="13.6" width="6.8" height="3.8" rx="0.8" fill="#ffcc00"/><rect x="5.6" y="14.6" width="2.8" height="1.8" fill="#1e1e1e"/>
</svg>
<div class="a" style="left:58.700000000000045px;top:454.55px;width:4.6px;height:48.4px;background:repeating-linear-gradient(-55deg,#2a7ea3 0 1.6px,transparent 1.6px 3.2px);border-radius:2px"></div>
<div class="a" style="left:144px;top:0.5px;width:5px;height:1.5px;background:#9cdcfe;opacity:.55"></div>
<div class="a" style="left:163px;top:0.5px;width:5px;height:1.5px;background:#9cdcfe;opacity:.55"></div>
<div class="a" style="left:356px;top:0.5px;width:5px;height:1.5px;background:#4ec9b0;opacity:.55"></div>
<div class="a" style="left:440px;top:0.5px;width:5px;height:1.5px;background:#4ec9b0;opacity:.55"></div>
<div class="a" style="left:500px;top:0.5px;width:5px;height:1.5px;background:#dcdcaa;opacity:.55"></div>
<div class="a" style="left:0;top:0;width:1400px;height:4px;background:linear-gradient(rgba(0,0,0,0.5),rgba(0,0,0,0))"></div>
<div class="a" style="left:1256px;top:0;width:7px;height:981px;background:linear-gradient(90deg,rgba(0,0,0,0),rgba(0,0,0,0.35))"></div>
<div class="a" style="left:1263px;top:0;width:120.5px;height:981px;background:#1e1e1e"></div>
<div class="a" style="left:1383.5px;top:0;width:1px;height:981px;background:#3a3a3a"></div>
<div class="a" style="left:1392px;top:5.75px;width:8px;height:7px;background:#3794ff"></div>
<div class="a" style="left:1384px;top:302.75px;width:8px;height:6px;background:#1b81a8"></div>
<div class="a" style="left:1384px;top:319.75px;width:16px;height:2px;background:#a0a0a0"></div>
<div class="a" style="left:1265px;top:168.75px;width:3px;height:6px;background:#1b81a8"></div>
<svg width="120" height="490" style="left:1263px;top:-0.25px"><g opacity="0.32"><rect x="8" y="0.5" width="6" height="1.5" fill="#569cd6"/><rect x="15" y="0.5" width="12" height="1.5" fill="#ce9178"/><rect x="27" y="0.5" width="1" height="1.5" fill="#d4d4d4"/><rect x="8" y="2.5" width="6" height="1.5" fill="#569cd6"/><rect x="15" y="2.5" width="53" height="1.5" fill="#ce9178"/><rect x="68" y="2.5" width="1" height="1.5" fill="#d4d4d4"/><rect x="8" y="4.5" width="6" height="1.5" fill="#569cd6"/><rect x="15" y="4.5" width="57" height="1.5" fill="#ce9178"/><rect x="72" y="4.5" width="1" height="1.5" fill="#d4d4d4"/><rect x="8" y="6.5" width="6" height="1.5" fill="#569cd6"/><rect x="15" y="6.5" width="47" height="1.5" fill="#ce9178"/><rect x="62" y="6.5" width="1" height="1.5" fill="#d4d4d4"/><rect x="8" y="8.5" width="6" height="1.5" fill="#569cd6"/><rect x="15" y="8.5" width="54" height="1.5" fill="#ce9178"/><rect x="69" y="8.5" width="1" height="1.5" fill="#d4d4d4"/><rect x="8" y="10.5" width="6" height="1.5" fill="#569cd6"/><rect x="15" y="10.5" width="65" height="1.5" fill="#ce9178"/><rect x="80" y="10.5" width="1" height="1.5" fill="#d4d4d4"/><rect x="8" y="12.5" width="6" height="1.5" fill="#569cd6"/><rect x="15" y="12.5" width="45" height="1.5" fill="#ce9178"/><rect x="60" y="12.5" width="1" height="1.5" fill="#d4d4d4"/><rect x="8" y="14.5" width="6" height="1.5" fill="#569cd6"/><rect x="15" y="14.5" width="48" height="1.5" fill="#ce9178"/><rect x="63" y="14.5" width="1" height="1.5" fill="#d4d4d4"/><rect x="8" y="16.5" width="6" height="1.5" fill="#569cd6"/><rect x="15" y="16.5" width="47" height="1.5" fill="#ce9178"/><rect x="62" y="16.5" width="1" height="1.5" fill="#d4d4d4"/><rect x="8" y="18.5" width="6" height="1.5" fill="#569cd6"/><rect x="15" y="18.5" width="46" height="1.5" fill="#ce9178"/><rect x="61" y="18.5" width="1" height="1.5" fill="#d4d4d4"/><rect x="8" y="20.5" width="6" height="1.5" fill="#569cd6"/><rect x="15" y="20.5" width="31" height="1.5" fill="#ce9178"/><rect x="46" y="20.5" width="1" height="1.5" fill="#d4d4d4"/><rect x="8" y="22.5" width="6" height="1.5" fill="#569cd6"/><rect x="15" y="22.5" width="24" height="1.5" fill="#ce9178"/><rect x="39" y="22.5" width="1" height="1.5" fill="#d4d4d4"/><rect x="8" y="24.5" width="6" height="1.5" fill="#569cd6"/><rect x="15" y="24.5" width="42" height="1.5" fill="#ce9178"/><rect x="57" y="24.5" width="1" height="1.5" fill="#d4d4d4"/><rect x="8" y="26.5" width="6" height="1.5" fill="#569cd6"/><rect x="15" y="26.5" width="32" height="1.5" fill="#ce9178"/><rect x="47" y="26.5" width="1" height="1.5" fill="#d4d4d4"/><rect x="8" y="28.5" width="6" height="1.5" fill="#569cd6"/><rect x="15" y="28.5" width="36" height="1.5" fill="#ce9178"/><rect x="51" y="28.5" width="1" height="1.5" fill="#d4d4d4"/><rect x="8" y="30.5" width="6" height="1.5" fill="#569cd6"/><rect x="15" y="30.5" width="26" height="1.5" fill="#ce9178"/><rect x="41" y="30.5" width="1" height="1.5" fill="#d4d4d4"/><rect x="8" y="32.5" width="6" height="1.5" fill="#569cd6"/><rect x="15" y="32.5" width="29" height="1.5" fill="#ce9178"/><rect x="44" y="32.5" width="1" height="1.5" fill="#d4d4d4"/><rect x="8" y="36.5" width="5" height="1.5" fill="#569cd6"/><rect x="14" y="36.5" width="9" height="1.5" fill="#4ec9b0"/><rect x="24" y="36.5" width="7" height="1.5" fill="#569cd6"/><rect x="32" y="36.5" width="14" height="1.5" fill="#4ec9b0"/><rect x="47" y="36.5" width="1" height="1.5" fill="#d4d4d4"/><rect x="10" y="38.5" width="5" height="1.5" fill="#569cd6"/><rect x="16" y="38.5" width="9" height="1.5" fill="#4ec9b0"/><rect x="25" y="38.5" width="1" height="1.5" fill="#d4d4d4"/><rect x="26" y="38.5" width="1" height="1.5" fill="#d4d4d4"/><rect x="27" y="38.5" width="3" height="1.5" fill="#4ec9b0"/><rect x="30" y="38.5" width="1" height="1.5" fill="#d4d4d4"/><rect x="32" y="38.5" width="3" height="1.5" fill="#9cdcfe"/><rect x="35" y="38.5" width="1" height="1.5" fill="#d4d4d4"/><rect x="36" y="38.5" width="1" height="1.5" fill="#d4d4d4"/><rect x="38" y="38.5" width="1" height="1.5" fill="#d4d4d4"/><rect x="40" y="38.5" width="5" height="1.5" fill="#569cd6"/><rect x="45" y="38.5" width="1" height="1.5" fill="#d4d4d4"/><rect x="46" y="38.5" width="3" height="1.5" fill="#9cdcfe"/><rect x="49" y="38.5" width="1" height="1.5" fill="#d4d4d4"/><rect x="51" y="38.5" width="3" height="1.5" fill="#9cdcfe"/><rect x="54" y="38.5" width="1" height="1.5" fill="#d4d4d4"/><rect x="55" y="38.5" width="1" height="1.5" fill="#d4d4d4"/><rect x="10" y="42.5" width="9" height="1.5" fill="#4ec9b0"/><rect x="10" y="44.5" width="5" height="1.5" fill="#4ec9b0"/><rect x="15" y="44.5" width="1" height="1.5" fill="#d4d4d4"/><rect x="16" y="44.5" width="14" height="1.5" fill="#4ec9b0"/><rect x="30" y="44.5" width="1" height="1.5" fill="#d4d4d4"/><rect x="32" y="44.5" width="11" height="1.5" fill="#dcdcaa"/><rect x="43" y="44.5" width="1" height="1.5" fill="#d4d4d4"/><rect x="44" y="44.5" width="1" height="1.5" fill="#d4d4d4"/><rect x="46" y="44.5" width="1" height="1.5" fill="#d4d4d4"/><rect x="47" y="44.5" width="1" height="1.5" fill="#d4d4d4"/><rect x="49" y="44.5" width="12" height="1.5" fill="#4ec9b0"/><rect x="61" y="44.5" width="1" height="1.5" fill="#d4d4d4"/><rect x="62" y="44.5" width="1" height="1.5" fill="#d4d4d4"/><rect x="63" y="44.5" width="1" height="1.5" fill="#d4d4d4"/><rect x="8" y="46.5" width="1" height="1.5" fill="#d4d4d4"/><rect x="8" y="50.5" width="5" height="1.5" fill="#569cd6"/><rect x="14" y="50.5" width="12" height="1.5" fill="#4ec9b0"/><rect x="27" y="50.5" width="7" height="1.5" fill="#569cd6"/><rect x="35" y="50.5" width="5" height="1.5" fill="#4ec9b0"/><rect x="40" y="50.5" width="1" height="1.5" fill="#d4d4d4"/><rect x="41" y="50.5" width="9" height="1.5" fill="#4ec9b0"/><rect x="50" y="50.5" width="1" height="1.5" fill="#d4d4d4"/><rect x="52" y="50.5" width="4" height="1.5" fill="#569cd6"/><rect x="57" y="50.5" width="24" height="1.5" fill="#4ec9b0"/><rect x="82" y="50.5" width="1" height="1.5" fill="#d4d4d4"/><rect x="10" y="52.5" width="5" height="1.5" fill="#569cd6"/><rect x="16" y="52.5" width="11" height="1.5" fill="#4ec9b0"/><rect x="28" y="52.5" width="12" height="1.5" fill="#9cdcfe"/><rect x="41" y="52.5" width="1" height="1.5" fill="#d4d4d4"/><rect x="43" y="52.5" width="11" height="1.5" fill="#4ec9b0"/><rect x="54" y="52.5" width="1" height="1.5" fill="#d4d4d4"/><rect x="55" y="52.5" width="8" height="1.5" fill="#9cdcfe"/><rect x="63" y="52.5" width="1" height="1.5" fill="#d4d4d4"/><rect x="10" y="54.5" width="3" height="1.5" fill="#569cd6"/><rect x="14" y="54.5" width="11" height="1.5" fill="#9cdcfe"/><rect x="25" y="54.5" width="1" height="1.5" fill="#d4d4d4"/><rect x="10" y="56.5" width="4" height="1.5" fill="#569cd6"/><rect x="15" y="56.5" width="6" height="1.5" fill="#9cdcfe"/><rect x="22" y="56.5" width="1" height="1.5" fill="#d4d4d4"/><rect x="24" y="56.5" width="5" height="1.5" fill="#569cd6"/><rect x="29" y="56.5" width="1" height="1.5" fill="#d4d4d4"/><rect x="10" y="58.5" width="4" height="1.5" fill="#569cd6"/><rect x="15" y="58.5" width="13" height="1.5" fill="#4ec9b0"/><rect x="29" y="58.5" width="13" height="1.5" fill="#9cdcfe"/><rect x="42" y="58.5" width="1" height="1.5" fill="#d4d4d4"/><rect x="10" y="60.5" width="4" height="1.5" fill="#4ec9b0"/><rect x="14" y="60.5" width="1" height="1.5" fill="#d4d4d4"/><rect x="15" y="60.5" width="6" height="1.5" fill="#569cd6"/><rect x="21" y="60.5" width="1" height="1.5" fill="#d4d4d4"/><rect x="23" y="60.5" width="8" height="1.5" fill="#9cdcfe"/><rect x="32" y="60.5" width="1" height="1.5" fill="#d4d4d4"/><rect x="34" y="60.5" width="1" height="1.5" fill="#d4d4d4"/><rect x="35" y="60.5" width="7" height="1.5" fill="#9cdcfe"/><rect x="42" y="60.5" width="1" height="1.5" fill="#d4d4d4"/><rect x="44" y="60.5" width="5" height="1.5" fill="#9cdcfe"/><rect x="49" y="60.5" width="1" height="1.5" fill="#d4d4d4"/><rect x="51" y="60.5" width="7" height="1.5" fill="#9cdcfe"/><rect x="58" y="60.5" width="1" height="1.5" fill="#d4d4d4"/><rect x="59" y="60.5" width="1" height="1.5" fill="#d4d4d4"/><rect x="10" y="64.5" width="9" height="1.5" fill="#4ec9b0"/><rect x="10" y="66.5" width="4" height="1.5" fill="#569cd6"/><rect x="15" y="66.5" width="9" height="1.5" fill="#dcdcaa"/><rect x="24" y="66.5" width="1" height="1.5" fill="#d4d4d4"/><rect x="25" y="66.5" width="1" height="1.5" fill="#d4d4d4"/><rect x="27" y="66.5" width="1" height="1.5" fill="#d4d4d4"/><rect x="12" y="68.5" width="5" height="1.5" fill="#569cd6"/><rect x="17" y="68.5" width="1" height="1.5" fill="#d4d4d4"/><rect x="18" y="68.5" width="9" height="1.5" fill="#dcdcaa"/><rect x="27" y="68.5" width="1" height="1.5" fill="#d4d4d4"/><rect x="28" y="68.5" width="1" height="1.5" fill="#d4d4d4"/><rect x="29" y="68.5" width="1" height="1.5" fill="#d4d4d4"/><rect x="12" y="70.5" width="9" height="1.5" fill="#9cdcfe"/><rect x="22" y="70.5" width="1" height="1.5" fill="#d4d4d4"/><rect x="24" y="70.5" width="8" height="1.5" fill="#9cdcfe"/><rect x="32" y="70.5" width="1" height="1.5" fill="#d4d4d4"/><rect x="33" y="70.5" width="7" height="1.5" fill="#dcdcaa"/><rect x="40" y="70.5" width="1" height="1.5" fill="#d4d4d4"/><rect x="16" y="72.5" width="7" height="1.5" fill="#9cdcfe"/><rect x="23" y="72.5" width="1" height="1.5" fill="#d4d4d4"/><rect x="24" y="72.5" width="4" height="1.5" fill="#9cdcfe"/><rect x="28" y="72.5" width="1" height="1.5" fill="#d4d4d4"/><rect x="29" y="72.5" width="15" height="1.5" fill="#4ec9b0"/><rect x="44" y="72.5" width="1" height="1.5" fill="#d4d4d4"/><rect x="45" y="72.5" width="1" height="1.5" fill="#d4d4d4"/><rect x="46" y="72.5" width="1" height="1.5" fill="#d4d4d4"/><rect x="47" y="72.5" width="1" height="1.5" fill="#d4d4d4"/><rect x="48" y="72.5" width="12" height="1.5" fill="#9cdcfe"/><rect x="61" y="72.5" width="1" height="1.5" fill="#d4d4d4"/><rect x="62" y="72.5" width="1" height="1.5" fill="#d4d4d4"/><rect x="64" y="72.5" width="4" height="1.5" fill="#ce9178"/><rect x="68" y="72.5" width="1" height="1.5" fill="#d4d4d4"/><rect x="69" y="72.5" width="1" height="1.5" fill="#d4d4d4"/><rect x="10" y="74.5" width="1" height="1.5" fill="#d4d4d4"/><rect x="10" y="78.5" width="15" height="1.5" fill="#dcdcaa"/><rect x="25" y="78.5" width="1" height="1.5" fill="#d4d4d4"/><rect x="26" y="78.5" width="1" height="1.5" fill="#d4d4d4"/><rect x="28" y="78.5" width="1" height="1.5" fill="#d4d4d4"/><rect x="12" y="80.5" width="6" height="1.5" fill="#c586c0"/><rect x="19" y="80.5" width="9" height="1.5" fill="#4ec9b0"/><rect x="28" y="80.5" width="1" height="1.5" fill="#d4d4d4"/><rect x="14" y="82.5" width="7" height="1.5" fill="#9cdcfe"/><rect x="21" y="82.5" width="1" height="1.5" fill="#d4d4d4"/><rect x="23" y="82.5" width="5" height="1.5" fill="#569cd6"/><rect x="29" y="82.5" width="10" height="1.5" fill="#4ec9b0"/><rect x="39" y="82.5" width="1" height="1.5" fill="#d4d4d4"/><rect x="40" y="82.5" width="9" height="1.5" fill="#dcdcaa"/><rect x="49" y="82.5" width="1" height="1.5" fill="#d4d4d4"/><rect x="50" y="82.5" width="8" height="1.5" fill="#9cdcfe"/><rect x="58" y="82.5" width="1" height="1.5" fill="#d4d4d4"/><rect x="60" y="82.5" width="1" height="1.5" fill="#d4d4d4"/><rect x="61" y="82.5" width="1" height="1.5" fill="#d4d4d4"/><rect x="62" y="82.5" width="1" height="1.5" fill="#d4d4d4"/><rect x="63" y="82.5" width="1" height="1.5" fill="#d4d4d4"/><rect x="64" y="82.5" width="1" height="1.5" fill="#d4d4d4"/><rect x="14" y="84.5" width="5" height="1.5" fill="#9cdcfe"/><rect x="19" y="84.5" width="1" height="1.5" fill="#d4d4d4"/><rect x="21" y="84.5" width="9" height="1.5" fill="#4ec9b0"/><rect x="30" y="84.5" width="1" height="1.5" fill="#d4d4d4"/><rect x="16" y="86.5" width="10" height="1.5" fill="#9cdcfe"/><rect x="26" y="86.5" width="1" height="1.5" fill="#d4d4d4"/><rect x="28" y="86.5" width="13" height="1.5" fill="#4ec9b0"/><rect x="41" y="86.5" width="1" height="1.5" fill="#d4d4d4"/><rect x="18" y="88.5" width="5" height="1.5" fill="#9cdcfe"/><rect x="23" y="88.5" width="1" height="1.5" fill="#d4d4d4"/><rect x="25" y="88.5" width="5" height="1.5" fill="#4ec9b0"/><rect x="30" y="88.5" width="1" height="1.5" fill="#d4d4d4"/><rect x="31" y="88.5" width="2" height="1.5" fill="#dcdcaa"/><rect x="33" y="88.5" width="1" height="1.5" fill="#d4d4d4"/><rect x="34" y="88.5" width="7" height="1.5" fill="#9cdcfe"/><rect x="41" y="88.5" width="1" height="1.5" fill="#d4d4d4"/><rect x="42" y="88.5" width="1" height="1.5" fill="#d4d4d4"/><rect x="43" y="88.5" width="11" height="1.5" fill="#9cdcfe"/><rect x="54" y="88.5" width="1" height="1.5" fill="#d4d4d4"/><rect x="55" y="88.5" width="5" height="1.5" fill="#9cdcfe"/><rect x="60" y="88.5" width="1" height="1.5" fill="#d4d4d4"/><rect x="16" y="90.5" width="1" height="1.5" fill="#d4d4d4"/><rect x="17" y="90.5" width="1" height="1.5" fill="#d4d4d4"/><rect x="14" y="92.5" width="1" height="1.5" fill="#d4d4d4"/><rect x="15" y="92.5" width="1" height="1.5" fill="#d4d4d4"/><rect x="12" y="94.5" width="1" height="1.5" fill="#d4d4d4"/><rect x="13" y="94.5" width="1" height="1.5" fill="#d4d4d4"/><rect x="10" y="96.5" width="1" height="1.5" fill="#d4d4d4"/><rect x="10" y="100.5" width="9" height="1.5" fill="#4ec9b0"/><rect x="10" y="102.5" width="4" height="1.5" fill="#569cd6"/><rect x="15" y="102.5" width="7" height="1.5" fill="#dcdcaa"/><rect x="22" y="102.5" width="1" height="1.5" fill="#d4d4d4"/><rect x="23" y="102.5" width="1" height="1.5" fill="#d4d4d4"/><rect x="25" y="102.5" width="1" height="1.5" fill="#d4d4d4"/><rect x="12" y="104.5" width="5" height="1.5" fill="#569cd6"/><rect x="17" y="104.5" width="1" height="1.5" fill="#d4d4d4"/><rect x="18" y="104.5" width="7" height="1.5" fill="#dcdcaa"/><rect x="25" y="104.5" width="1" height="1.5" fill="#d4d4d4"/><rect x="26" y="104.5" width="1" height="1.5" fill="#d4d4d4"/><rect x="27" y="104.5" width="1" height="1.5" fill="#d4d4d4"/><rect x="10" y="106.5" width="1" height="1.5" fill="#d4d4d4"/><rect x="10" y="110.5" width="11" height="1.5" fill="#dcdcaa"/><rect x="21" y="110.5" width="1" height="1.5" fill="#d4d4d4"/><rect x="22" y="110.5" width="6" height="1.5" fill="#569cd6"/><rect x="29" y="110.5" width="3" height="1.5" fill="#9cdcfe"/><rect x="32" y="110.5" width="1" height="1.5" fill="#d4d4d4"/><rect x="34" y="110.5" width="1" height="1.5" fill="#d4d4d4"/><rect x="12" y="112.5" width="11" height="1.5" fill="#dcdcaa"/><rect x="23" y="112.5" width="1" height="1.5" fill="#d4d4d4"/><rect x="24" y="112.5" width="3" height="1.5" fill="#9cdcfe"/><rect x="27" y="112.5" width="1" height="1.5" fill="#d4d4d4"/><rect x="29" y="112.5" width="7" height="1.5" fill="#9cdcfe"/><rect x="36" y="112.5" width="1" height="1.5" fill="#d4d4d4"/><rect x="37" y="112.5" width="1" height="1.5" fill="#d4d4d4"/><rect x="10" y="114.5" width="1" height="1.5" fill="#d4d4d4"/><rect x="10" y="118.5" width="10" height="1.5" fill="#dcdcaa"/><rect x="20" y="118.5" width="1" height="1.5" fill="#d4d4d4"/><rect x="21" y="118.5" width="1" height="1.5" fill="#d4d4d4"/><rect x="23" y="118.5" width="1" height="1.5" fill="#d4d4d4"/><rect x="12" y="120.5" width="6" height="1.5" fill="#c586c0"/><rect x="19" y="120.5" width="9" height="1.5" fill="#4ec9b0"/><rect x="28" y="120.5" width="1" height="1.5" fill="#d4d4d4"/><rect x="14" y="122.5" width="7" height="1.5" fill="#9cdcfe"/><rect x="21" y="122.5" width="1" height="1.5" fill="#d4d4d4"/><rect x="23" y="122.5" width="5" height="1.5" fill="#569cd6"/><rect x="29" y="122.5" width="10" height="1.5" fill="#4ec9b0"/><rect x="39" y="122.5" width="1" height="1.5" fill="#d4d4d4"/><rect x="40" y="122.5" width="3" height="1.5" fill="#dcdcaa"/><rect x="43" y="122.5" width="1" height="1.5" fill="#d4d4d4"/><rect x="44" y="122.5" width="1" height="1.5" fill="#d4d4d4"/><rect x="45" y="122.5" width="1" height="1.5" fill="#d4d4d4"/><rect x="46" y="122.5" width="1" height="1.5" fill="#d4d4d4"/><rect x="14" y="124.5" width="5" height="1.5" fill="#9cdcfe"/><rect x="19" y="124.5" width="1" height="1.5" fill="#d4d4d4"/><rect x="21" y="124.5" width="8" height="1.5" fill="#4ec9b0"/><rect x="29" y="124.5" width="1" height="1.5" fill="#d4d4d4"/><rect x="16" y="126.5" width="7" height="1.5" fill="#9cdcfe"/><rect x="23" y="126.5" width="1" height="1.5" fill="#d4d4d4"/><rect x="25" y="126.5" width="5" height="1.5" fill="#569cd6"/><rect x="31" y="126.5" width="10" height="1.5" fill="#4ec9b0"/><rect x="41" y="126.5" width="1" height="1.5" fill="#d4d4d4"/><rect x="42" y="126.5" width="3" height="1.5" fill="#dcdcaa"/><rect x="45" y="126.5" width="1" height="1.5" fill="#d4d4d4"/><rect x="46" y="126.5" width="1" height="1.5" fill="#d4d4d4"/><rect x="47" y="126.5" width="1" height="1.5" fill="#d4d4d4"/><rect x="48" y="126.5" width="1" height="1.5" fill="#d4d4d4"/><rect x="16" y="128.5" width="10" height="1.5" fill="#9cdcfe"/><rect x="26" y="128.5" width="1" height="1.5" fill="#d4d4d4"/><rect x="28" y="128.5" width="4" height="1.5" fill="#569cd6"/><rect x="32" y="128.5" width="1" height="1.5" fill="#d4d4d4"/><rect x="14" y="130.5" width="8" height="1.5" fill="#9cdcfe"/><rect x="22" y="130.5" width="1" height="1.5" fill="#d4d4d4"/><rect x="24" y="130.5" width="1" height="1.5" fill="#d4d4d4"/><rect x="25" y="130.5" width="6" height="1.5" fill="#4ec9b0"/><rect x="31" y="130.5" width="1" height="1.5" fill="#d4d4d4"/><rect x="32" y="130.5" width="1" height="1.5" fill="#d4d4d4"/><rect x="16" y="132.5" width="10" height="1.5" fill="#9cdcfe"/><rect x="27" y="132.5" width="1" height="1.5" fill="#d4d4d4"/><rect x="28" y="132.5" width="1" height="1.5" fill="#d4d4d4"/><rect x="30" y="132.5" width="2" height="1.5" fill="#ce9178"/><rect x="33" y="132.5" width="1" height="1.5" fill="#d4d4d4"/><rect x="34" y="132.5" width="1" height="1.5" fill="#d4d4d4"/><rect x="36" y="132.5" width="10" height="1.5" fill="#9cdcfe"/><rect x="47" y="132.5" width="1" height="1.5" fill="#d4d4d4"/><rect x="48" y="132.5" width="1" height="1.5" fill="#d4d4d4"/><rect x="50" y="132.5" width="4" height="1.5" fill="#569cd6"/><rect x="20" y="134.5" width="1" height="1.5" fill="#d4d4d4"/><rect x="22" y="134.5" width="9" height="1.5" fill="#4ec9b0"/><rect x="31" y="134.5" width="1" height="1.5" fill="#d4d4d4"/><rect x="32" y="134.5" width="1" height="1.5" fill="#d4d4d4"/><rect x="20" y="136.5" width="1" height="1.5" fill="#d4d4d4"/><rect x="22" y="136.5" width="14" height="1.5" fill="#dcdcaa"/><rect x="36" y="136.5" width="1" height="1.5" fill="#d4d4d4"/><rect x="24" y="138.5" width="13" height="1.5" fill="#dcdcaa"/><rect x="37" y="138.5" width="1" height="1.5" fill="#d4d4d4"/><rect x="38" y="138.5" width="7" height="1.5" fill="#9cdcfe"/><rect x="45" y="138.5" width="1" height="1.5" fill="#d4d4d4"/><rect x="47" y="138.5" width="15" height="1.5" fill="#ce9178"/><rect x="62" y="138.5" width="1" height="1.5" fill="#d4d4d4"/><rect x="63" y="138.5" width="1" height="1.5" fill="#d4d4d4"/><rect x="64" y="138.5" width="1" height="1.5" fill="#d4d4d4"/><rect x="66" y="138.5" width="13" height="1.5" fill="#ce9178"/><rect x="79" y="138.5" width="1" height="1.5" fill="#d4d4d4"/><rect x="80" y="138.5" width="1" height="1.5" fill="#d4d4d4"/><rect x="16" y="140.5" width="10" height="1.5" fill="#9cdcfe"/><rect x="27" y="140.5" width="1" height="1.5" fill="#d4d4d4"/><rect x="28" y="140.5" width="1" height="1.5" fill="#d4d4d4"/><rect x="30" y="140.5" width="2" height="1.5" fill="#ce9178"/><rect x="33" y="140.5" width="1" height="1.5" fill="#d4d4d4"/><rect x="34" y="140.5" width="1" height="1.5" fill="#d4d4d4"/><rect x="36" y="140.5" width="10" height="1.5" fill="#9cdcfe"/><rect x="47" y="140.5" width="1" height="1.5" fill="#d4d4d4"/><rect x="48" y="140.5" width="1" height="1.5" fill="#d4d4d4"/><rect x="50" y="140.5" width="4" height="1.5" fill="#569cd6"/><rect x="20" y="142.5" width="1" height="1.5" fill="#d4d4d4"/><rect x="22" y="142.5" width="9" height="1.5" fill="#4ec9b0"/><rect x="31" y="142.5" width="1" height="1.5" fill="#d4d4d4"/><rect x="32" y="142.5" width="1" height="1.5" fill="#d4d4d4"/><rect x="20" y="144.5" width="1" height="1.5" fill="#d4d4d4"/><rect x="22" y="144.5" width="14" height="1.5" fill="#dcdcaa"/><rect x="36" y="144.5" width="1" height="1.5" fill="#d4d4d4"/><rect x="24" y="146.5" width="13" height="1.5" fill="#dcdcaa"/><rect x="37" y="146.5" width="1" height="1.5" fill="#d4d4d4"/><rect x="38" y="146.5" width="7" height="1.5" fill="#9cdcfe"/><rect x="45" y="146.5" width="1" height="1.5" fill="#d4d4d4"/><rect x="47" y="146.5" width="16" height="1.5" fill="#ce9178"/><rect x="63" y="146.5" width="1" height="1.5" fill="#d4d4d4"/><rect x="64" y="146.5" width="1" height="1.5" fill="#d4d4d4"/><rect x="65" y="146.5" width="1" height="1.5" fill="#d4d4d4"/><rect x="67" y="146.5" width="13" height="1.5" fill="#ce9178"/><rect x="80" y="146.5" width="1" height="1.5" fill="#d4d4d4"/><rect x="81" y="146.5" width="1" height="1.5" fill="#d4d4d4"/><rect x="16" y="148.5" width="10" height="1.5" fill="#9cdcfe"/><rect x="27" y="148.5" width="1" height="1.5" fill="#d4d4d4"/><rect x="28" y="148.5" width="1" height="1.5" fill="#d4d4d4"/><rect x="30" y="148.5" width="2" height="1.5" fill="#ce9178"/><rect x="33" y="148.5" width="1" height="1.5" fill="#d4d4d4"/><rect x="34" y="148.5" width="1" height="1.5" fill="#d4d4d4"/><rect x="36" y="148.5" width="10" height="1.5" fill="#9cdcfe"/><rect x="47" y="148.5" width="1" height="1.5" fill="#d4d4d4"/><rect x="48" y="148.5" width="1" height="1.5" fill="#d4d4d4"/><rect x="50" y="148.5" width="4" height="1.5" fill="#569cd6"/><rect x="20" y="150.5" width="1" height="1.5" fill="#d4d4d4"/><rect x="22" y="150.5" width="9" height="1.5" fill="#4ec9b0"/><rect x="31" y="150.5" width="1" height="1.5" fill="#d4d4d4"/><rect x="32" y="150.5" width="1" height="1.5" fill="#d4d4d4"/><rect x="20" y="152.5" width="1" height="1.5" fill="#d4d4d4"/><rect x="22" y="152.5" width="14" height="1.5" fill="#dcdcaa"/><rect x="36" y="152.5" width="1" height="1.5" fill="#d4d4d4"/><rect x="37" y="152.5" width="13" height="1.5" fill="#dcdcaa"/><rect x="50" y="152.5" width="1" height="1.5" fill="#d4d4d4"/><rect x="51" y="152.5" width="7" height="1.5" fill="#9cdcfe"/><rect x="58" y="152.5" width="1" height="1.5" fill="#d4d4d4"/><rect x="60" y="152.5" width="10" height="1.5" fill="#ce9178"/><rect x="70" y="152.5" width="1" height="1.5" fill="#d4d4d4"/><rect x="71" y="152.5" width="1" height="1.5" fill="#d4d4d4"/><rect x="72" y="152.5" width="1" height="1.5" fill="#d4d4d4"/><rect x="74" y="152.5" width="8" height="1.5" fill="#ce9178"/><rect x="82" y="152.5" width="1" height="1.5" fill="#d4d4d4"/><rect x="83" y="152.5" width="1" height="1.5" fill="#d4d4d4"/><rect x="16" y="154.5" width="10" height="1.5" fill="#9cdcfe"/><rect x="27" y="154.5" width="1" height="1.5" fill="#d4d4d4"/><rect x="28" y="154.5" width="1" height="1.5" fill="#d4d4d4"/><rect x="30" y="154.5" width="2" height="1.5" fill="#ce9178"/><rect x="33" y="154.5" width="1" height="1.5" fill="#d4d4d4"/><rect x="34" y="154.5" width="1" height="1.5" fill="#d4d4d4"/><rect x="36" y="154.5" width="10" height="1.5" fill="#9cdcfe"/><rect x="47" y="154.5" width="1" height="1.5" fill="#d4d4d4"/><rect x="48" y="154.5" width="1" height="1.5" fill="#d4d4d4"/><rect x="50" y="154.5" width="4" height="1.5" fill="#569cd6"/><rect x="20" y="156.5" width="1" height="1.5" fill="#d4d4d4"/><rect x="22" y="156.5" width="9" height="1.5" fill="#4ec9b0"/><rect x="31" y="156.5" width="1" height="1.5" fill="#d4d4d4"/><rect x="32" y="156.5" width="1" height="1.5" fill="#d4d4d4"/><rect x="20" y="158.5" width="1" height="1.5" fill="#d4d4d4"/><rect x="22" y="158.5" width="14" height="1.5" fill="#dcdcaa"/><rect x="36" y="158.5" width="1" height="1.5" fill="#d4d4d4"/><rect x="37" y="158.5" width="13" height="1.5" fill="#dcdcaa"/><rect x="50" y="158.5" width="1" height="1.5" fill="#d4d4d4"/><rect x="51" y="158.5" width="7" height="1.5" fill="#9cdcfe"/><rect x="58" y="158.5" width="1" height="1.5" fill="#d4d4d4"/><rect x="60" y="158.5" width="14" height="1.5" fill="#ce9178"/><rect x="74" y="158.5" width="1" height="1.5" fill="#d4d4d4"/><rect x="75" y="158.5" width="1" height="1.5" fill="#d4d4d4"/><rect x="76" y="158.5" width="1" height="1.5" fill="#d4d4d4"/><rect x="78" y="158.5" width="7" height="1.5" fill="#ce9178"/><rect x="85" y="158.5" width="1" height="1.5" fill="#d4d4d4"/><rect x="86" y="158.5" width="1" height="1.5" fill="#d4d4d4"/><rect x="16" y="160.5" width="10" height="1.5" fill="#9cdcfe"/><rect x="27" y="160.5" width="1" height="1.5" fill="#d4d4d4"/><rect x="28" y="160.5" width="1" height="1.5" fill="#d4d4d4"/><rect x="30" y="160.5" width="2" height="1.5" fill="#ce9178"/><rect x="33" y="160.5" width="1" height="1.5" fill="#d4d4d4"/><rect x="34" y="160.5" width="1" height="1.5" fill="#d4d4d4"/><rect x="36" y="160.5" width="10" height="1.5" fill="#9cdcfe"/><rect x="47" y="160.5" width="1" height="1.5" fill="#d4d4d4"/><rect x="48" y="160.5" width="1" height="1.5" fill="#d4d4d4"/><rect x="50" y="160.5" width="4" height="1.5" fill="#569cd6"/><rect x="20" y="162.5" width="1" height="1.5" fill="#d4d4d4"/><rect x="22" y="162.5" width="9" height="1.5" fill="#4ec9b0"/><rect x="31" y="162.5" width="1" height="1.5" fill="#d4d4d4"/><rect x="32" y="162.5" width="1" height="1.5" fill="#d4d4d4"/><rect x="20" y="164.5" width="1" height="1.5" fill="#d4d4d4"/><rect x="22" y="164.5" width="14" height="1.5" fill="#dcdcaa"/><rect x="36" y="164.5" width="1" height="1.5" fill="#d4d4d4"/><rect x="24" y="166.5" width="13" height="1.5" fill="#dcdcaa"/><rect x="37" y="166.5" width="1" height="1.5" fill="#d4d4d4"/><rect x="38" y="166.5" width="7" height="1.5" fill="#9cdcfe"/><rect x="45" y="166.5" width="1" height="1.5" fill="#d4d4d4"/><rect x="47" y="166.5" width="15" height="1.5" fill="#ce9178"/><rect x="62" y="166.5" width="1" height="1.5" fill="#d4d4d4"/><rect x="63" y="166.5" width="1" height="1.5" fill="#d4d4d4"/><rect x="64" y="166.5" width="1" height="1.5" fill="#d4d4d4"/><rect x="66" y="166.5" width="8" height="1.5" fill="#ce9178"/><rect x="74" y="166.5" width="1" height="1.5" fill="#d4d4d4"/><rect x="75" y="166.5" width="1" height="1.5" fill="#d4d4d4"/><rect x="16" y="168.5" width="2" height="1.5" fill="#6a9955"/><rect x="19" y="168.5" width="15" height="1.5" fill="#6a9955"/><rect x="16" y="170.5" width="2" height="1.5" fill="#6a9955"/><rect x="23" y="170.5" width="22" height="1.5" fill="#6a9955"/><rect x="46" y="170.5" width="21" height="1.5" fill="#6a9955"/><rect x="68" y="170.5" width="13" height="1.5" fill="#6a9955"/><rect x="16" y="172.5" width="14" height="1.5" fill="#dcdcaa"/><rect x="30" y="172.5" width="1" height="1.5" fill="#d4d4d4"/><rect x="20" y="174.5" width="13" height="1.5" fill="#dcdcaa"/><rect x="33" y="174.5" width="1" height="1.5" fill="#d4d4d4"/><rect x="34" y="174.5" width="7" height="1.5" fill="#9cdcfe"/><rect x="41" y="174.5" width="1" height="1.5" fill="#d4d4d4"/><rect x="43" y="174.5" width="21" height="1.5" fill="#ce9178"/><rect x="64" y="174.5" width="1" height="1.5" fill="#d4d4d4"/><rect x="65" y="174.5" width="1" height="1.5" fill="#d4d4d4"/><rect x="66" y="174.5" width="1" height="1.5" fill="#d4d4d4"/><rect x="68" y="174.5" width="14" height="1.5" fill="#ce9178"/><rect x="82" y="174.5" width="1" height="1.5" fill="#d4d4d4"/><rect x="83" y="174.5" width="1" height="1.5" fill="#d4d4d4"/><rect x="16" y="176.5" width="10" height="1.5" fill="#9cdcfe"/><rect x="27" y="176.5" width="1" height="1.5" fill="#d4d4d4"/><rect x="28" y="176.5" width="1" height="1.5" fill="#d4d4d4"/><rect x="30" y="176.5" width="2" height="1.5" fill="#ce9178"/><rect x="33" y="176.5" width="1" height="1.5" fill="#d4d4d4"/><rect x="34" y="176.5" width="1" height="1.5" fill="#d4d4d4"/><rect x="36" y="176.5" width="10" height="1.5" fill="#9cdcfe"/><rect x="47" y="176.5" width="1" height="1.5" fill="#d4d4d4"/><rect x="48" y="176.5" width="1" height="1.5" fill="#d4d4d4"/><rect x="50" y="176.5" width="4" height="1.5" fill="#569cd6"/><rect x="20" y="178.5" width="1" height="1.5" fill="#d4d4d4"/><rect x="22" y="178.5" width="9" height="1.5" fill="#4ec9b0"/><rect x="31" y="178.5" width="1" height="1.5" fill="#d4d4d4"/><rect x="32" y="178.5" width="1" height="1.5" fill="#d4d4d4"/><rect x="20" y="180.5" width="1" height="1.5" fill="#d4d4d4"/><rect x="22" y="180.5" width="14" height="1.5" fill="#dcdcaa"/><rect x="36" y="180.5" width="1" height="1.5" fill="#d4d4d4"/><rect x="24" y="182.5" width="13" height="1.5" fill="#dcdcaa"/><rect x="37" y="182.5" width="1" height="1.5" fill="#d4d4d4"/><rect x="38" y="182.5" width="7" height="1.5" fill="#9cdcfe"/><rect x="45" y="182.5" width="1" height="1.5" fill="#d4d4d4"/><rect x="47" y="182.5" width="17" height="1.5" fill="#ce9178"/><rect x="64" y="182.5" width="1" height="1.5" fill="#d4d4d4"/><rect x="65" y="182.5" width="1" height="1.5" fill="#d4d4d4"/><rect x="66" y="182.5" width="1" height="1.5" fill="#d4d4d4"/><rect x="68" y="182.5" width="10" height="1.5" fill="#ce9178"/><rect x="78" y="182.5" width="1" height="1.5" fill="#d4d4d4"/><rect x="79" y="182.5" width="1" height="1.5" fill="#d4d4d4"/><rect x="16" y="184.5" width="10" height="1.5" fill="#9cdcfe"/><rect x="27" y="184.5" width="1" height="1.5" fill="#d4d4d4"/><rect x="28" y="184.5" width="1" height="1.5" fill="#d4d4d4"/><rect x="30" y="184.5" width="2" height="1.5" fill="#ce9178"/><rect x="33" y="184.5" width="1" height="1.5" fill="#d4d4d4"/><rect x="34" y="184.5" width="1" height="1.5" fill="#d4d4d4"/><rect x="36" y="184.5" width="10" height="1.5" fill="#9cdcfe"/><rect x="47" y="184.5" width="1" height="1.5" fill="#d4d4d4"/><rect x="48" y="184.5" width="1" height="1.5" fill="#d4d4d4"/><rect x="50" y="184.5" width="4" height="1.5" fill="#569cd6"/><rect x="55" y="184.5" width="1" height="1.5" fill="#d4d4d4"/><rect x="56" y="184.5" width="1" height="1.5" fill="#d4d4d4"/><rect x="58" y="184.5" width="1" height="1.5" fill="#d4d4d4"/><rect x="59" y="184.5" width="5" height="1.5" fill="#9cdcfe"/><rect x="20" y="186.5" width="1" height="1.5" fill="#d4d4d4"/><rect x="22" y="186.5" width="9" height="1.5" fill="#4ec9b0"/><rect x="31" y="186.5" width="1" height="1.5" fill="#d4d4d4"/><rect x="32" y="186.5" width="1" height="1.5" fill="#d4d4d4"/><rect x="20" y="188.5" width="1" height="1.5" fill="#d4d4d4"/><rect x="22" y="188.5" width="14" height="1.5" fill="#dcdcaa"/><rect x="36" y="188.5" width="1" height="1.5" fill="#d4d4d4"/><rect x="24" y="190.5" width="13" height="1.5" fill="#dcdcaa"/><rect x="37" y="190.5" width="1" height="1.5" fill="#d4d4d4"/><rect x="38" y="190.5" width="7" height="1.5" fill="#9cdcfe"/><rect x="45" y="190.5" width="1" height="1.5" fill="#d4d4d4"/><rect x="47" y="190.5" width="11" height="1.5" fill="#ce9178"/><rect x="58" y="190.5" width="1" height="1.5" fill="#d4d4d4"/><rect x="59" y="190.5" width="1" height="1.5" fill="#d4d4d4"/><rect x="60" y="190.5" width="1" height="1.5" fill="#d4d4d4"/><rect x="62" y="190.5" width="14" height="1.5" fill="#ce9178"/><rect x="76" y="190.5" width="1" height="1.5" fill="#d4d4d4"/><rect x="77" y="190.5" width="1" height="1.5" fill="#d4d4d4"/><rect x="16" y="192.5" width="14" height="1.5" fill="#dcdcaa"/><rect x="30" y="192.5" width="1" height="1.5" fill="#d4d4d4"/><rect x="20" y="194.5" width="13" height="1.5" fill="#dcdcaa"/><rect x="33" y="194.5" width="1" height="1.5" fill="#d4d4d4"/><rect x="34" y="194.5" width="7" height="1.5" fill="#9cdcfe"/><rect x="41" y="194.5" width="1" height="1.5" fill="#d4d4d4"/><rect x="43" y="194.5" width="18" height="1.5" fill="#ce9178"/><rect x="61" y="194.5" width="1" height="1.5" fill="#d4d4d4"/><rect x="62" y="194.5" width="1" height="1.5" fill="#d4d4d4"/><rect x="63" y="194.5" width="1" height="1.5" fill="#d4d4d4"/><rect x="65" y="194.5" width="21" height="1.5" fill="#ce9178"/><rect x="86" y="194.5" width="1" height="1.5" fill="#d4d4d4"/><rect x="87" y="194.5" width="1" height="1.5" fill="#d4d4d4"/><rect x="16" y="196.5" width="14" height="1.5" fill="#dcdcaa"/><rect x="30" y="196.5" width="1" height="1.5" fill="#d4d4d4"/><rect x="31" y="196.5" width="13" height="1.5" fill="#dcdcaa"/><rect x="44" y="196.5" width="1" height="1.5" fill="#d4d4d4"/><rect x="45" y="196.5" width="7" height="1.5" fill="#9cdcfe"/><rect x="52" y="196.5" width="1" height="1.5" fill="#d4d4d4"/><rect x="54" y="196.5" width="11" height="1.5" fill="#ce9178"/><rect x="65" y="196.5" width="1" height="1.5" fill="#d4d4d4"/><rect x="66" y="196.5" width="1" height="1.5" fill="#d4d4d4"/><rect x="67" y="196.5" width="1" height="1.5" fill="#d4d4d4"/><rect x="69" y="196.5" width="13" height="1.5" fill="#ce9178"/><rect x="82" y="196.5" width="1" height="1.5" fill="#d4d4d4"/><rect x="83" y="196.5" width="1" height="1.5" fill="#d4d4d4"/><rect x="16" y="198.5" width="14" height="1.5" fill="#dcdcaa"/><rect x="30" y="198.5" width="1" height="1.5" fill="#d4d4d4"/><rect x="20" y="200.5" width="13" height="1.5" fill="#dcdcaa"/><rect x="33" y="200.5" width="1" height="1.5" fill="#d4d4d4"/><rect x="34" y="200.5" width="7" height="1.5" fill="#9cdcfe"/><rect x="41" y="200.5" width="1" height="1.5" fill="#d4d4d4"/><rect x="43" y="200.5" width="13" height="1.5" fill="#ce9178"/><rect x="56" y="200.5" width="1" height="1.5" fill="#d4d4d4"/><rect x="57" y="200.5" width="1" height="1.5" fill="#d4d4d4"/><rect x="58" y="200.5" width="1" height="1.5" fill="#d4d4d4"/><rect x="60" y="200.5" width="16" height="1.5" fill="#ce9178"/><rect x="76" y="200.5" width="1" height="1.5" fill="#d4d4d4"/><rect x="77" y="200.5" width="1" height="1.5" fill="#d4d4d4"/><rect x="16" y="202.5" width="14" height="1.5" fill="#dcdcaa"/><rect x="30" y="202.5" width="1" height="1.5" fill="#d4d4d4"/><rect x="31" y="202.5" width="13" height="1.5" fill="#dcdcaa"/><rect x="44" y="202.5" width="1" height="1.5" fill="#d4d4d4"/><rect x="45" y="202.5" width="7" height="1.5" fill="#9cdcfe"/><rect x="52" y="202.5" width="1" height="1.5" fill="#d4d4d4"/><rect x="54" y="202.5" width="6" height="1.5" fill="#ce9178"/><rect x="60" y="202.5" width="1" height="1.5" fill="#d4d4d4"/><rect x="61" y="202.5" width="1" height="1.5" fill="#d4d4d4"/><rect x="62" y="202.5" width="1" height="1.5" fill="#d4d4d4"/><rect x="64" y="202.5" width="9" height="1.5" fill="#ce9178"/><rect x="73" y="202.5" width="1" height="1.5" fill="#d4d4d4"/><rect x="74" y="202.5" width="1" height="1.5" fill="#d4d4d4"/><rect x="16" y="204.5" width="14" height="1.5" fill="#dcdcaa"/><rect x="30" y="204.5" width="1" height="1.5" fill="#d4d4d4"/><rect x="31" y="204.5" width="13" height="1.5" fill="#dcdcaa"/><rect x="44" y="204.5" width="1" height="1.5" fill="#d4d4d4"/><rect x="45" y="204.5" width="7" height="1.5" fill="#9cdcfe"/><rect x="52" y="204.5" width="1" height="1.5" fill="#d4d4d4"/><rect x="54" y="204.5" width="9" height="1.5" fill="#ce9178"/><rect x="63" y="204.5" width="1" height="1.5" fill="#d4d4d4"/><rect x="64" y="204.5" width="1" height="1.5" fill="#d4d4d4"/><rect x="65" y="204.5" width="1" height="1.5" fill="#d4d4d4"/><rect x="67" y="204.5" width="8" height="1.5" fill="#ce9178"/><rect x="75" y="204.5" width="1" height="1.5" fill="#d4d4d4"/><rect x="76" y="204.5" width="1" height="1.5" fill="#d4d4d4"/><rect x="16" y="206.5" width="14" height="1.5" fill="#dcdcaa"/><rect x="30" y="206.5" width="1" height="1.5" fill="#d4d4d4"/><rect x="31" y="206.5" width="13" height="1.5" fill="#dcdcaa"/><rect x="44" y="206.5" width="1" height="1.5" fill="#d4d4d4"/><rect x="45" y="206.5" width="7" height="1.5" fill="#9cdcfe"/><rect x="52" y="206.5" width="1" height="1.5" fill="#d4d4d4"/><rect x="54" y="206.5" width="6" height="1.5" fill="#ce9178"/><rect x="60" y="206.5" width="1" height="1.5" fill="#d4d4d4"/><rect x="61" y="206.5" width="1" height="1.5" fill="#d4d4d4"/><rect x="62" y="206.5" width="1" height="1.5" fill="#d4d4d4"/><rect x="64" y="206.5" width="8" height="1.5" fill="#ce9178"/><rect x="72" y="206.5" width="1" height="1.5" fill="#d4d4d4"/><rect x="73" y="206.5" width="1" height="1.5" fill="#d4d4d4"/><rect x="16" y="208.5" width="14" height="1.5" fill="#dcdcaa"/><rect x="30" y="208.5" width="1" height="1.5" fill="#d4d4d4"/><rect x="31" y="208.5" width="13" height="1.5" fill="#dcdcaa"/><rect x="44" y="208.5" width="1" height="1.5" fill="#d4d4d4"/><rect x="45" y="208.5" width="7" height="1.5" fill="#9cdcfe"/><rect x="52" y="208.5" width="1" height="1.5" fill="#d4d4d4"/><rect x="54" y="208.5" width="21" height="1.5" fill="#ce9178"/><rect x="75" y="208.5" width="1" height="1.5" fill="#d4d4d4"/><rect x="76" y="208.5" width="1" height="1.5" fill="#d4d4d4"/><rect x="77" y="208.5" width="1" height="1.5" fill="#d4d4d4"/><rect x="20" y="210.5" width="21" height="1.5" fill="#ce9178"/><rect x="41" y="210.5" width="1" height="1.5" fill="#d4d4d4"/><rect x="42" y="210.5" width="1" height="1.5" fill="#d4d4d4"/><rect x="16" y="212.5" width="14" height="1.5" fill="#dcdcaa"/><rect x="30" y="212.5" width="1" height="1.5" fill="#d4d4d4"/><rect x="31" y="212.5" width="13" height="1.5" fill="#dcdcaa"/><rect x="44" y="212.5" width="1" height="1.5" fill="#d4d4d4"/><rect x="45" y="212.5" width="7" height="1.5" fill="#9cdcfe"/><rect x="52" y="212.5" width="1" height="1.5" fill="#d4d4d4"/><rect x="54" y="212.5" width="19" height="1.5" fill="#ce9178"/><rect x="73" y="212.5" width="1" height="1.5" fill="#d4d4d4"/><rect x="74" y="212.5" width="1" height="1.5" fill="#d4d4d4"/><rect x="75" y="212.5" width="1" height="1.5" fill="#d4d4d4"/><rect x="20" y="214.5" width="19" height="1.5" fill="#ce9178"/><rect x="39" y="214.5" width="1" height="1.5" fill="#d4d4d4"/><rect x="40" y="214.5" width="1" height="1.5" fill="#d4d4d4"/><rect x="16" y="216.5" width="14" height="1.5" fill="#dcdcaa"/><rect x="30" y="216.5" width="1" height="1.5" fill="#d4d4d4"/><rect x="31" y="216.5" width="13" height="1.5" fill="#dcdcaa"/><rect x="44" y="216.5" width="1" height="1.5" fill="#d4d4d4"/><rect x="45" y="216.5" width="7" height="1.5" fill="#9cdcfe"/><rect x="52" y="216.5" width="1" height="1.5" fill="#d4d4d4"/><rect x="54" y="216.5" width="9" height="1.5" fill="#ce9178"/><rect x="63" y="216.5" width="1" height="1.5" fill="#d4d4d4"/><rect x="64" y="216.5" width="1" height="1.5" fill="#d4d4d4"/><rect x="65" y="216.5" width="1" height="1.5" fill="#d4d4d4"/><rect x="67" y="216.5" width="12" height="1.5" fill="#ce9178"/><rect x="79" y="216.5" width="1" height="1.5" fill="#d4d4d4"/><rect x="80" y="216.5" width="1" height="1.5" fill="#d4d4d4"/><rect x="16" y="218.5" width="14" height="1.5" fill="#dcdcaa"/><rect x="30" y="218.5" width="1" height="1.5" fill="#d4d4d4"/><rect x="31" y="218.5" width="13" height="1.5" fill="#dcdcaa"/><rect x="44" y="218.5" width="1" height="1.5" fill="#d4d4d4"/><rect x="45" y="218.5" width="7" height="1.5" fill="#9cdcfe"/><rect x="52" y="218.5" width="1" height="1.5" fill="#d4d4d4"/><rect x="54" y="218.5" width="11" height="1.5" fill="#ce9178"/><rect x="65" y="218.5" width="1" height="1.5" fill="#d4d4d4"/><rect x="66" y="218.5" width="1" height="1.5" fill="#d4d4d4"/><rect x="67" y="218.5" width="1" height="1.5" fill="#d4d4d4"/><rect x="69" y="218.5" width="11" height="1.5" fill="#ce9178"/><rect x="80" y="218.5" width="1" height="1.5" fill="#d4d4d4"/><rect x="81" y="218.5" width="1" height="1.5" fill="#d4d4d4"/><rect x="16" y="220.5" width="10" height="1.5" fill="#9cdcfe"/><rect x="27" y="220.5" width="1" height="1.5" fill="#d4d4d4"/><rect x="28" y="220.5" width="1" height="1.5" fill="#d4d4d4"/><rect x="30" y="220.5" width="2" height="1.5" fill="#ce9178"/><rect x="33" y="220.5" width="1" height="1.5" fill="#d4d4d4"/><rect x="34" y="220.5" width="1" height="1.5" fill="#d4d4d4"/><rect x="36" y="220.5" width="10" height="1.5" fill="#9cdcfe"/><rect x="47" y="220.5" width="1" height="1.5" fill="#d4d4d4"/><rect x="48" y="220.5" width="1" height="1.5" fill="#d4d4d4"/><rect x="50" y="220.5" width="4" height="1.5" fill="#569cd6"/><rect x="20" y="222.5" width="1" height="1.5" fill="#d4d4d4"/><rect x="22" y="222.5" width="9" height="1.5" fill="#4ec9b0"/><rect x="31" y="222.5" width="1" height="1.5" fill="#d4d4d4"/><rect x="32" y="222.5" width="1" height="1.5" fill="#d4d4d4"/><rect x="20" y="224.5" width="1" height="1.5" fill="#d4d4d4"/><rect x="22" y="224.5" width="14" height="1.5" fill="#dcdcaa"/><rect x="36" y="224.5" width="1" height="1.5" fill="#d4d4d4"/><rect x="24" y="226.5" width="13" height="1.5" fill="#dcdcaa"/><rect x="37" y="226.5" width="1" height="1.5" fill="#d4d4d4"/><rect x="38" y="226.5" width="7" height="1.5" fill="#9cdcfe"/><rect x="45" y="226.5" width="1" height="1.5" fill="#d4d4d4"/><rect x="47" y="226.5" width="8" height="1.5" fill="#ce9178"/><rect x="55" y="226.5" width="1" height="1.5" fill="#d4d4d4"/><rect x="56" y="226.5" width="1" height="1.5" fill="#d4d4d4"/><rect x="57" y="226.5" width="1" height="1.5" fill="#d4d4d4"/><rect x="59" y="226.5" width="12" height="1.5" fill="#ce9178"/><rect x="71" y="226.5" width="1" height="1.5" fill="#d4d4d4"/><rect x="72" y="226.5" width="1" height="1.5" fill="#d4d4d4"/><rect x="14" y="228.5" width="1" height="1.5" fill="#d4d4d4"/><rect x="15" y="228.5" width="1" height="1.5" fill="#d4d4d4"/><rect x="18" y="230.5" width="1" height="1.5" fill="#d4d4d4"/><rect x="19" y="230.5" width="1" height="1.5" fill="#d4d4d4"/><rect x="16" y="232.5" width="1" height="1.5" fill="#d4d4d4"/><rect x="17" y="232.5" width="1" height="1.5" fill="#d4d4d4"/><rect x="14" y="234.5" width="1" height="1.5" fill="#d4d4d4"/><rect x="15" y="234.5" width="1" height="1.5" fill="#d4d4d4"/><rect x="12" y="236.5" width="1" height="1.5" fill="#d4d4d4"/><rect x="13" y="236.5" width="1" height="1.5" fill="#d4d4d4"/><rect x="10" y="238.5" width="1" height="1.5" fill="#d4d4d4"/><rect x="10" y="242.5" width="14" height="1.5" fill="#dcdcaa"/><rect x="24" y="242.5" width="1" height="1.5" fill="#d4d4d4"/><rect x="25" y="242.5" width="6" height="1.5" fill="#569cd6"/><rect x="32" y="242.5" width="5" height="1.5" fill="#9cdcfe"/><rect x="37" y="242.5" width="1" height="1.5" fill="#d4d4d4"/><rect x="39" y="242.5" width="6" height="1.5" fill="#569cd6"/><rect x="46" y="242.5" width="3" height="1.5" fill="#9cdcfe"/><rect x="49" y="242.5" width="1" height="1.5" fill="#d4d4d4"/><rect x="51" y="242.5" width="1" height="1.5" fill="#d4d4d4"/><rect x="12" y="244.5" width="6" height="1.5" fill="#c586c0"/><rect x="19" y="244.5" width="4" height="1.5" fill="#4ec9b0"/><rect x="23" y="244.5" width="1" height="1.5" fill="#d4d4d4"/><rect x="14" y="246.5" width="9" height="1.5" fill="#9cdcfe"/><rect x="23" y="246.5" width="1" height="1.5" fill="#d4d4d4"/><rect x="25" y="246.5" width="1" height="1.5" fill="#d4d4d4"/><rect x="26" y="246.5" width="1" height="1.5" fill="#d4d4d4"/><rect x="27" y="246.5" width="1" height="1.5" fill="#d4d4d4"/><rect x="28" y="246.5" width="1" height="1.5" fill="#d4d4d4"/><rect x="14" y="248.5" width="5" height="1.5" fill="#9cdcfe"/><rect x="19" y="248.5" width="1" height="1.5" fill="#d4d4d4"/><rect x="21" y="248.5" width="8" height="1.5" fill="#4ec9b0"/><rect x="29" y="248.5" width="1" height="1.5" fill="#d4d4d4"/><rect x="16" y="250.5" width="8" height="1.5" fill="#9cdcfe"/><rect x="24" y="250.5" width="1" height="1.5" fill="#d4d4d4"/><rect x="26" y="250.5" width="5" height="1.5" fill="#569cd6"/><rect x="32" y="250.5" width="4" height="1.5" fill="#4ec9b0"/><rect x="36" y="250.5" width="1" height="1.5" fill="#d4d4d4"/><rect x="18" y="252.5" width="5" height="1.5" fill="#4ec9b0"/><rect x="23" y="252.5" width="1" height="1.5" fill="#d4d4d4"/><rect x="24" y="252.5" width="13" height="1.5" fill="#9cdcfe"/><rect x="37" y="252.5" width="1" height="1.5" fill="#d4d4d4"/><rect x="18" y="254.5" width="5" height="1.5" fill="#9cdcfe"/><rect x="23" y="254.5" width="1" height="1.5" fill="#d4d4d4"/><rect x="25" y="254.5" width="6" height="1.5" fill="#9cdcfe"/><rect x="31" y="254.5" width="1" height="1.5" fill="#d4d4d4"/><rect x="32" y="254.5" width="7" height="1.5" fill="#9cdcfe"/><rect x="39" y="254.5" width="1" height="1.5" fill="#d4d4d4"/><rect x="16" y="256.5" width="1" height="1.5" fill="#d4d4d4"/><rect x="17" y="256.5" width="1" height="1.5" fill="#d4d4d4"/><rect x="16" y="258.5" width="7" height="1.5" fill="#9cdcfe"/><rect x="23" y="258.5" width="1" height="1.5" fill="#d4d4d4"/><rect x="25" y="258.5" width="5" height="1.5" fill="#4ec9b0"/><rect x="30" y="258.5" width="1" height="1.5" fill="#d4d4d4"/><rect x="31" y="258.5" width="5" height="1.5" fill="#dcdcaa"/><rect x="36" y="258.5" width="1" height="1.5" fill="#d4d4d4"/><rect x="18" y="260.5" width="3" height="1.5" fill="#9cdcfe"/><rect x="21" y="260.5" width="1" height="1.5" fill="#d4d4d4"/><rect x="18" y="262.5" width="6" height="1.5" fill="#9cdcfe"/><rect x="24" y="262.5" width="1" height="1.5" fill="#d4d4d4"/><rect x="26" y="262.5" width="1" height="1.5" fill="#d4d4d4"/><rect x="27" y="262.5" width="1" height="1.5" fill="#d4d4d4"/><rect x="28" y="262.5" width="1" height="1.5" fill="#d4d4d4"/><rect x="18" y="264.5" width="5" height="1.5" fill="#9cdcfe"/><rect x="23" y="264.5" width="1" height="1.5" fill="#d4d4d4"/><rect x="25" y="264.5" width="1" height="1.5" fill="#d4d4d4"/><rect x="26" y="264.5" width="1" height="1.5" fill="#d4d4d4"/><rect x="27" y="264.5" width="1" height="1.5" fill="#d4d4d4"/><rect x="18" y="266.5" width="5" height="1.5" fill="#9cdcfe"/><rect x="23" y="266.5" width="1" height="1.5" fill="#d4d4d4"/><rect x="25" y="266.5" width="6" height="1.5" fill="#9cdcfe"/><rect x="31" y="266.5" width="1" height="1.5" fill="#d4d4d4"/><rect x="32" y="266.5" width="7" height="1.5" fill="#9cdcfe"/><rect x="39" y="266.5" width="1" height="1.5" fill="#d4d4d4"/><rect x="16" y="268.5" width="1" height="1.5" fill="#d4d4d4"/><rect x="17" y="268.5" width="1" height="1.5" fill="#d4d4d4"/><rect x="16" y="270.5" width="5" height="1.5" fill="#9cdcfe"/><rect x="21" y="270.5" width="1" height="1.5" fill="#d4d4d4"/><rect x="23" y="270.5" width="4" height="1.5" fill="#569cd6"/><rect x="27" y="270.5" width="1" height="1.5" fill="#d4d4d4"/><rect x="16" y="272.5" width="5" height="1.5" fill="#9cdcfe"/><rect x="21" y="272.5" width="1" height="1.5" fill="#d4d4d4"/><rect x="23" y="272.5" width="4" height="1.5" fill="#4ec9b0"/><rect x="27" y="272.5" width="1" height="1.5" fill="#d4d4d4"/><rect x="18" y="274.5" width="5" height="1.5" fill="#9cdcfe"/><rect x="23" y="274.5" width="1" height="1.5" fill="#d4d4d4"/><rect x="18" y="276.5" width="5" height="1.5" fill="#9cdcfe"/><rect x="23" y="276.5" width="1" height="1.5" fill="#d4d4d4"/><rect x="25" y="276.5" width="9" height="1.5" fill="#4ec9b0"/><rect x="34" y="276.5" width="1" height="1.5" fill="#d4d4d4"/><rect x="35" y="276.5" width="5" height="1.5" fill="#9cdcfe"/><rect x="40" y="276.5" width="1" height="1.5" fill="#d4d4d4"/><rect x="42" y="276.5" width="5" height="1.5" fill="#4ec9b0"/><rect x="47" y="276.5" width="1" height="1.5" fill="#d4d4d4"/><rect x="48" y="276.5" width="2" height="1.5" fill="#dcdcaa"/><rect x="50" y="276.5" width="1" height="1.5" fill="#d4d4d4"/><rect x="51" y="276.5" width="7" height="1.5" fill="#9cdcfe"/><rect x="58" y="276.5" width="1" height="1.5" fill="#d4d4d4"/><rect x="59" y="276.5" width="1" height="1.5" fill="#d4d4d4"/><rect x="60" y="276.5" width="11" height="1.5" fill="#9cdcfe"/><rect x="71" y="276.5" width="1" height="1.5" fill="#d4d4d4"/><rect x="72" y="276.5" width="10" height="1.5" fill="#9cdcfe"/><rect x="82" y="276.5" width="1" height="1.5" fill="#d4d4d4"/><rect x="84" y="276.5" width="8" height="1.5" fill="#9cdcfe"/><rect x="92" y="276.5" width="1" height="1.5" fill="#d4d4d4"/><rect x="94" y="276.5" width="1" height="1.5" fill="#d4d4d4"/><rect x="95" y="276.5" width="1" height="1.5" fill="#d4d4d4"/><rect x="96" y="276.5" width="1" height="1.5" fill="#d4d4d4"/><rect x="97" y="276.5" width="1" height="1.5" fill="#d4d4d4"/><rect x="16" y="278.5" width="1" height="1.5" fill="#d4d4d4"/><rect x="17" y="278.5" width="1" height="1.5" fill="#d4d4d4"/><rect x="16" y="280.5" width="5" height="1.5" fill="#9cdcfe"/><rect x="21" y="280.5" width="1" height="1.5" fill="#d4d4d4"/><rect x="23" y="280.5" width="1" height="1.5" fill="#d4d4d4"/><rect x="24" y="280.5" width="1" height="1.5" fill="#d4d4d4"/><rect x="26" y="280.5" width="1" height="1.5" fill="#d4d4d4"/><rect x="18" y="282.5" width="2" height="1.5" fill="#c586c0"/><rect x="21" y="282.5" width="1" height="1.5" fill="#d4d4d4"/><rect x="22" y="282.5" width="5" height="1.5" fill="#9cdcfe"/><rect x="28" y="282.5" width="1" height="1.5" fill="#d4d4d4"/><rect x="29" y="282.5" width="1" height="1.5" fill="#d4d4d4"/><rect x="31" y="282.5" width="13" height="1.5" fill="#dcdcaa"/><rect x="44" y="282.5" width="1" height="1.5" fill="#d4d4d4"/><rect x="45" y="282.5" width="7" height="1.5" fill="#9cdcfe"/><rect x="52" y="282.5" width="1" height="1.5" fill="#d4d4d4"/><rect x="54" y="282.5" width="15" height="1.5" fill="#ce9178"/><rect x="69" y="282.5" width="1" height="1.5" fill="#d4d4d4"/><rect x="70" y="282.5" width="1" height="1.5" fill="#d4d4d4"/><rect x="72" y="282.5" width="1" height="1.5" fill="#d4d4d4"/><rect x="20" y="284.5" width="6" height="1.5" fill="#4ec9b0"/><rect x="26" y="284.5" width="1" height="1.5" fill="#d4d4d4"/><rect x="27" y="284.5" width="23" height="1.5" fill="#dcdcaa"/><rect x="50" y="284.5" width="1" height="1.5" fill="#d4d4d4"/><rect x="51" y="284.5" width="7" height="1.5" fill="#9cdcfe"/><rect x="58" y="284.5" width="1" height="1.5" fill="#d4d4d4"/><rect x="59" y="284.5" width="1" height="1.5" fill="#d4d4d4"/><rect x="18" y="286.5" width="1" height="1.5" fill="#d4d4d4"/><rect x="20" y="286.5" width="4" height="1.5" fill="#c586c0"/><rect x="25" y="286.5" width="2" height="1.5" fill="#c586c0"/><rect x="28" y="286.5" width="1" height="1.5" fill="#d4d4d4"/><rect x="29" y="286.5" width="5" height="1.5" fill="#9cdcfe"/><rect x="35" y="286.5" width="1" height="1.5" fill="#d4d4d4"/><rect x="36" y="286.5" width="1" height="1.5" fill="#d4d4d4"/><rect x="38" y="286.5" width="13" height="1.5" fill="#dcdcaa"/><rect x="51" y="286.5" width="1" height="1.5" fill="#d4d4d4"/><rect x="52" y="286.5" width="7" height="1.5" fill="#9cdcfe"/><rect x="59" y="286.5" width="1" height="1.5" fill="#d4d4d4"/><rect x="61" y="286.5" width="15" height="1.5" fill="#ce9178"/><rect x="76" y="286.5" width="1" height="1.5" fill="#d4d4d4"/><rect x="77" y="286.5" width="1" height="1.5" fill="#d4d4d4"/><rect x="79" y="286.5" width="1" height="1.5" fill="#d4d4d4"/><rect x="20" y="288.5" width="6" height="1.5" fill="#4ec9b0"/><rect x="26" y="288.5" width="1" height="1.5" fill="#d4d4d4"/><rect x="27" y="288.5" width="34" height="1.5" fill="#dcdcaa"/><rect x="61" y="288.5" width="1" height="1.5" fill="#d4d4d4"/><rect x="62" y="288.5" width="7" height="1.5" fill="#9cdcfe"/><rect x="69" y="288.5" width="1" height="1.5" fill="#d4d4d4"/><rect x="70" y="288.5" width="1" height="1.5" fill="#d4d4d4"/><rect x="18" y="290.5" width="1" height="1.5" fill="#d4d4d4"/><rect x="20" y="290.5" width="4" height="1.5" fill="#c586c0"/><rect x="25" y="290.5" width="2" height="1.5" fill="#c586c0"/><rect x="28" y="290.5" width="1" height="1.5" fill="#d4d4d4"/><rect x="29" y="290.5" width="5" height="1.5" fill="#9cdcfe"/><rect x="35" y="290.5" width="1" height="1.5" fill="#d4d4d4"/><rect x="36" y="290.5" width="1" height="1.5" fill="#d4d4d4"/><rect x="38" y="290.5" width="13" height="1.5" fill="#dcdcaa"/><rect x="51" y="290.5" width="1" height="1.5" fill="#d4d4d4"/><rect x="52" y="290.5" width="7" height="1.5" fill="#9cdcfe"/><rect x="59" y="290.5" width="1" height="1.5" fill="#d4d4d4"/><rect x="61" y="290.5" width="10" height="1.5" fill="#ce9178"/><rect x="71" y="290.5" width="1" height="1.5" fill="#d4d4d4"/><rect x="72" y="290.5" width="1" height="1.5" fill="#d4d4d4"/><rect x="74" y="290.5" width="1" height="1.5" fill="#d4d4d4"/><rect x="20" y="292.5" width="6" height="1.5" fill="#4ec9b0"/><rect x="26" y="292.5" width="1" height="1.5" fill="#d4d4d4"/><rect x="27" y="292.5" width="24" height="1.5" fill="#dcdcaa"/><rect x="51" y="292.5" width="1" height="1.5" fill="#d4d4d4"/><rect x="52" y="292.5" width="7" height="1.5" fill="#9cdcfe"/><rect x="59" y="292.5" width="1" height="1.5" fill="#d4d4d4"/><rect x="60" y="292.5" width="1" height="1.5" fill="#d4d4d4"/><rect x="18" y="294.5" width="1" height="1.5" fill="#d4d4d4"/><rect x="20" y="294.5" width="4" height="1.5" fill="#c586c0"/><rect x="25" y="294.5" width="2" height="1.5" fill="#c586c0"/><rect x="28" y="294.5" width="1" height="1.5" fill="#d4d4d4"/><rect x="29" y="294.5" width="5" height="1.5" fill="#9cdcfe"/><rect x="35" y="294.5" width="1" height="1.5" fill="#d4d4d4"/><rect x="36" y="294.5" width="1" height="1.5" fill="#d4d4d4"/><rect x="38" y="294.5" width="13" height="1.5" fill="#dcdcaa"/><rect x="51" y="294.5" width="1" height="1.5" fill="#d4d4d4"/><rect x="52" y="294.5" width="7" height="1.5" fill="#9cdcfe"/><rect x="59" y="294.5" width="1" height="1.5" fill="#d4d4d4"/><rect x="61" y="294.5" width="14" height="1.5" fill="#ce9178"/><rect x="75" y="294.5" width="1" height="1.5" fill="#d4d4d4"/><rect x="76" y="294.5" width="1" height="1.5" fill="#d4d4d4"/><rect x="78" y="294.5" width="1" height="1.5" fill="#d4d4d4"/><rect x="20" y="296.5" width="6" height="1.5" fill="#4ec9b0"/><rect x="26" y="296.5" width="1" height="1.5" fill="#d4d4d4"/><rect x="27" y="296.5" width="25" height="1.5" fill="#dcdcaa"/><rect x="52" y="296.5" width="1" height="1.5" fill="#d4d4d4"/><rect x="53" y="296.5" width="7" height="1.5" fill="#9cdcfe"/><rect x="60" y="296.5" width="1" height="1.5" fill="#d4d4d4"/><rect x="61" y="296.5" width="1" height="1.5" fill="#d4d4d4"/><rect x="18" y="298.5" width="1" height="1.5" fill="#d4d4d4"/><rect x="20" y="298.5" width="4" height="1.5" fill="#c586c0"/><rect x="25" y="298.5" width="2" height="1.5" fill="#c586c0"/><rect x="28" y="298.5" width="1" height="1.5" fill="#d4d4d4"/><rect x="29" y="298.5" width="5" height="1.5" fill="#9cdcfe"/><rect x="35" y="298.5" width="1" height="1.5" fill="#d4d4d4"/><rect x="36" y="298.5" width="1" height="1.5" fill="#d4d4d4"/><rect x="38" y="298.5" width="13" height="1.5" fill="#dcdcaa"/><rect x="51" y="298.5" width="1" height="1.5" fill="#d4d4d4"/><rect x="52" y="298.5" width="7" height="1.5" fill="#9cdcfe"/><rect x="59" y="298.5" width="1" height="1.5" fill="#d4d4d4"/><rect x="61" y="298.5" width="16" height="1.5" fill="#ce9178"/><rect x="77" y="298.5" width="1" height="1.5" fill="#d4d4d4"/><rect x="78" y="298.5" width="1" height="1.5" fill="#d4d4d4"/><rect x="80" y="298.5" width="1" height="1.5" fill="#d4d4d4"/><rect x="20" y="300.5" width="6" height="1.5" fill="#4ec9b0"/><rect x="26" y="300.5" width="1" height="1.5" fill="#d4d4d4"/><rect x="27" y="300.5" width="29" height="1.5" fill="#dcdcaa"/><rect x="56" y="300.5" width="1" height="1.5" fill="#d4d4d4"/><rect x="57" y="300.5" width="7" height="1.5" fill="#9cdcfe"/><rect x="64" y="300.5" width="1" height="1.5" fill="#d4d4d4"/><rect x="66" y="300.5" width="5" height="1.5" fill="#569cd6"/><rect x="71" y="300.5" width="1" height="1.5" fill="#d4d4d4"/><rect x="72" y="300.5" width="1" height="1.5" fill="#d4d4d4"/><rect x="18" y="302.5" width="1" height="1.5" fill="#d4d4d4"/><rect x="20" y="302.5" width="4" height="1.5" fill="#c586c0"/><rect x="25" y="302.5" width="2" height="1.5" fill="#c586c0"/><rect x="28" y="302.5" width="1" height="1.5" fill="#d4d4d4"/><rect x="29" y="302.5" width="5" height="1.5" fill="#9cdcfe"/><rect x="35" y="302.5" width="1" height="1.5" fill="#d4d4d4"/><rect x="36" y="302.5" width="1" height="1.5" fill="#d4d4d4"/><rect x="38" y="302.5" width="13" height="1.5" fill="#dcdcaa"/><rect x="51" y="302.5" width="1" height="1.5" fill="#d4d4d4"/><rect x="52" y="302.5" width="7" height="1.5" fill="#9cdcfe"/><rect x="59" y="302.5" width="1" height="1.5" fill="#d4d4d4"/><rect x="61" y="302.5" width="11" height="1.5" fill="#ce9178"/><rect x="72" y="302.5" width="1" height="1.5" fill="#d4d4d4"/><rect x="73" y="302.5" width="1" height="1.5" fill="#d4d4d4"/><rect x="75" y="302.5" width="1" height="1.5" fill="#d4d4d4"/><rect x="20" y="304.5" width="6" height="1.5" fill="#4ec9b0"/><rect x="26" y="304.5" width="1" height="1.5" fill="#d4d4d4"/><rect x="27" y="304.5" width="25" height="1.5" fill="#dcdcaa"/><rect x="52" y="304.5" width="1" height="1.5" fill="#d4d4d4"/><rect x="53" y="304.5" width="7" height="1.5" fill="#9cdcfe"/><rect x="60" y="304.5" width="1" height="1.5" fill="#d4d4d4"/><rect x="61" y="304.5" width="1" height="1.5" fill="#d4d4d4"/><rect x="18" y="306.5" width="1" height="1.5" fill="#d4d4d4"/><rect x="20" y="306.5" width="4" height="1.5" fill="#c586c0"/><rect x="25" y="306.5" width="2" height="1.5" fill="#c586c0"/><rect x="28" y="306.5" width="1" height="1.5" fill="#d4d4d4"/><rect x="29" y="306.5" width="5" height="1.5" fill="#9cdcfe"/><rect x="35" y="306.5" width="1" height="1.5" fill="#d4d4d4"/><rect x="36" y="306.5" width="1" height="1.5" fill="#d4d4d4"/><rect x="38" y="306.5" width="13" height="1.5" fill="#dcdcaa"/><rect x="51" y="306.5" width="1" height="1.5" fill="#d4d4d4"/><rect x="52" y="306.5" width="7" height="1.5" fill="#9cdcfe"/><rect x="59" y="306.5" width="1" height="1.5" fill="#d4d4d4"/><rect x="61" y="306.5" width="13" height="1.5" fill="#ce9178"/><rect x="74" y="306.5" width="1" height="1.5" fill="#d4d4d4"/><rect x="75" y="306.5" width="1" height="1.5" fill="#d4d4d4"/><rect x="77" y="306.5" width="1" height="1.5" fill="#d4d4d4"/><rect x="20" y="308.5" width="6" height="1.5" fill="#4ec9b0"/><rect x="26" y="308.5" width="1" height="1.5" fill="#d4d4d4"/><rect x="27" y="308.5" width="29" height="1.5" fill="#dcdcaa"/><rect x="56" y="308.5" width="1" height="1.5" fill="#d4d4d4"/><rect x="57" y="308.5" width="7" height="1.5" fill="#9cdcfe"/><rect x="64" y="308.5" width="1" height="1.5" fill="#d4d4d4"/><rect x="66" y="308.5" width="5" height="1.5" fill="#9cdcfe"/><rect x="71" y="308.5" width="1" height="1.5" fill="#d4d4d4"/><rect x="72" y="308.5" width="1" height="1.5" fill="#d4d4d4"/><rect x="18" y="310.5" width="1" height="1.5" fill="#d4d4d4"/><rect x="20" y="310.5" width="4" height="1.5" fill="#c586c0"/><rect x="25" y="310.5" width="2" height="1.5" fill="#c586c0"/><rect x="28" y="310.5" width="1" height="1.5" fill="#d4d4d4"/><rect x="29" y="310.5" width="5" height="1.5" fill="#9cdcfe"/><rect x="35" y="310.5" width="1" height="1.5" fill="#d4d4d4"/><rect x="36" y="310.5" width="1" height="1.5" fill="#d4d4d4"/><rect x="38" y="310.5" width="13" height="1.5" fill="#dcdcaa"/><rect x="51" y="310.5" width="1" height="1.5" fill="#d4d4d4"/><rect x="52" y="310.5" width="7" height="1.5" fill="#9cdcfe"/><rect x="59" y="310.5" width="1" height="1.5" fill="#d4d4d4"/><rect x="61" y="310.5" width="18" height="1.5" fill="#ce9178"/><rect x="79" y="310.5" width="1" height="1.5" fill="#d4d4d4"/><rect x="80" y="310.5" width="1" height="1.5" fill="#d4d4d4"/><rect x="82" y="310.5" width="1" height="1.5" fill="#d4d4d4"/><rect x="20" y="312.5" width="6" height="1.5" fill="#4ec9b0"/><rect x="26" y="312.5" width="1" height="1.5" fill="#d4d4d4"/><rect x="27" y="312.5" width="31" height="1.5" fill="#dcdcaa"/><rect x="58" y="312.5" width="1" height="1.5" fill="#d4d4d4"/><rect x="59" y="312.5" width="7" height="1.5" fill="#9cdcfe"/><rect x="66" y="312.5" width="1" height="1.5" fill="#d4d4d4"/><rect x="67" y="312.5" width="1" height="1.5" fill="#d4d4d4"/><rect x="18" y="314.5" width="1" height="1.5" fill="#d4d4d4"/><rect x="20" y="314.5" width="4" height="1.5" fill="#c586c0"/><rect x="25" y="314.5" width="2" height="1.5" fill="#c586c0"/><rect x="28" y="314.5" width="1" height="1.5" fill="#d4d4d4"/><rect x="29" y="314.5" width="5" height="1.5" fill="#9cdcfe"/><rect x="35" y="314.5" width="1" height="1.5" fill="#d4d4d4"/><rect x="36" y="314.5" width="1" height="1.5" fill="#d4d4d4"/><rect x="38" y="314.5" width="13" height="1.5" fill="#dcdcaa"/><rect x="51" y="314.5" width="1" height="1.5" fill="#d4d4d4"/><rect x="52" y="314.5" width="7" height="1.5" fill="#9cdcfe"/><rect x="59" y="314.5" width="1" height="1.5" fill="#d4d4d4"/><rect x="61" y="314.5" width="6" height="1.5" fill="#ce9178"/><rect x="67" y="314.5" width="1" height="1.5" fill="#d4d4d4"/><rect x="68" y="314.5" width="1" height="1.5" fill="#d4d4d4"/><rect x="70" y="314.5" width="1" height="1.5" fill="#d4d4d4"/><rect x="20" y="316.5" width="6" height="1.5" fill="#4ec9b0"/><rect x="26" y="316.5" width="1" height="1.5" fill="#d4d4d4"/><rect x="27" y="316.5" width="29" height="1.5" fill="#dcdcaa"/><rect x="56" y="316.5" width="1" height="1.5" fill="#d4d4d4"/><rect x="57" y="316.5" width="7" height="1.5" fill="#9cdcfe"/><rect x="64" y="316.5" width="1" height="1.5" fill="#d4d4d4"/><rect x="66" y="316.5" width="5" height="1.5" fill="#9cdcfe"/><rect x="71" y="316.5" width="1" height="1.5" fill="#d4d4d4"/><rect x="72" y="316.5" width="1" height="1.5" fill="#d4d4d4"/><rect x="18" y="318.5" width="1" height="1.5" fill="#d4d4d4"/><rect x="20" y="318.5" width="4" height="1.5" fill="#c586c0"/><rect x="25" y="318.5" width="2" height="1.5" fill="#c586c0"/><rect x="28" y="318.5" width="1" height="1.5" fill="#d4d4d4"/><rect x="29" y="318.5" width="5" height="1.5" fill="#9cdcfe"/><rect x="35" y="318.5" width="1" height="1.5" fill="#d4d4d4"/><rect x="36" y="318.5" width="1" height="1.5" fill="#d4d4d4"/><rect x="38" y="318.5" width="13" height="1.5" fill="#dcdcaa"/><rect x="51" y="318.5" width="1" height="1.5" fill="#d4d4d4"/><rect x="52" y="318.5" width="7" height="1.5" fill="#9cdcfe"/><rect x="59" y="318.5" width="1" height="1.5" fill="#d4d4d4"/><rect x="61" y="318.5" width="9" height="1.5" fill="#ce9178"/><rect x="70" y="318.5" width="1" height="1.5" fill="#d4d4d4"/><rect x="71" y="318.5" width="1" height="1.5" fill="#d4d4d4"/><rect x="73" y="318.5" width="1" height="1.5" fill="#d4d4d4"/><rect x="20" y="320.5" width="6" height="1.5" fill="#4ec9b0"/><rect x="26" y="320.5" width="1" height="1.5" fill="#d4d4d4"/><rect x="27" y="320.5" width="29" height="1.5" fill="#dcdcaa"/><rect x="56" y="320.5" width="1" height="1.5" fill="#d4d4d4"/><rect x="57" y="320.5" width="7" height="1.5" fill="#9cdcfe"/><rect x="64" y="320.5" width="1" height="1.5" fill="#d4d4d4"/><rect x="66" y="320.5" width="5" height="1.5" fill="#9cdcfe"/><rect x="71" y="320.5" width="1" height="1.5" fill="#d4d4d4"/><rect x="72" y="320.5" width="1" height="1.5" fill="#d4d4d4"/><rect x="18" y="322.5" width="1" height="1.5" fill="#d4d4d4"/><rect x="20" y="322.5" width="4" height="1.5" fill="#c586c0"/><rect x="25" y="322.5" width="2" height="1.5" fill="#c586c0"/><rect x="28" y="322.5" width="1" height="1.5" fill="#d4d4d4"/><rect x="29" y="322.5" width="5" height="1.5" fill="#9cdcfe"/><rect x="35" y="322.5" width="1" height="1.5" fill="#d4d4d4"/><rect x="36" y="322.5" width="1" height="1.5" fill="#d4d4d4"/><rect x="38" y="322.5" width="13" height="1.5" fill="#dcdcaa"/><rect x="51" y="322.5" width="1" height="1.5" fill="#d4d4d4"/><rect x="52" y="322.5" width="7" height="1.5" fill="#9cdcfe"/><rect x="59" y="322.5" width="1" height="1.5" fill="#d4d4d4"/><rect x="61" y="322.5" width="9" height="1.5" fill="#ce9178"/><rect x="70" y="322.5" width="1" height="1.5" fill="#d4d4d4"/><rect x="71" y="322.5" width="1" height="1.5" fill="#d4d4d4"/><rect x="73" y="322.5" width="1" height="1.5" fill="#d4d4d4"/><rect x="20" y="324.5" width="17" height="1.5" fill="#dcdcaa"/><rect x="37" y="324.5" width="1" height="1.5" fill="#d4d4d4"/><rect x="38" y="324.5" width="1" height="1.5" fill="#d4d4d4"/><rect x="39" y="324.5" width="1" height="1.5" fill="#d4d4d4"/><rect x="18" y="326.5" width="1" height="1.5" fill="#d4d4d4"/><rect x="20" y="326.5" width="4" height="1.5" fill="#c586c0"/><rect x="25" y="326.5" width="2" height="1.5" fill="#c586c0"/><rect x="28" y="326.5" width="1" height="1.5" fill="#d4d4d4"/><rect x="29" y="326.5" width="5" height="1.5" fill="#9cdcfe"/><rect x="35" y="326.5" width="1" height="1.5" fill="#d4d4d4"/><rect x="36" y="326.5" width="1" height="1.5" fill="#d4d4d4"/><rect x="38" y="326.5" width="13" height="1.5" fill="#dcdcaa"/><rect x="51" y="326.5" width="1" height="1.5" fill="#d4d4d4"/><rect x="52" y="326.5" width="7" height="1.5" fill="#9cdcfe"/><rect x="59" y="326.5" width="1" height="1.5" fill="#d4d4d4"/><rect x="61" y="326.5" width="11" height="1.5" fill="#ce9178"/><rect x="72" y="326.5" width="1" height="1.5" fill="#d4d4d4"/><rect x="73" y="326.5" width="1" height="1.5" fill="#d4d4d4"/><rect x="75" y="326.5" width="1" height="1.5" fill="#d4d4d4"/><rect x="20" y="328.5" width="3" height="1.5" fill="#569cd6"/><rect x="24" y="328.5" width="3" height="1.5" fill="#9cdcfe"/><rect x="28" y="328.5" width="1" height="1.5" fill="#d4d4d4"/><rect x="30" y="328.5" width="37" height="1.5" fill="#ce9178"/><rect x="68" y="328.5" width="40" height="1.5" fill="#ce9178"/><rect x="108" y="328.5" width="1" height="1.5" fill="#d4d4d4"/><rect x="20" y="330.5" width="5" height="1.5" fill="#4ec9b0"/><rect x="25" y="330.5" width="1" height="1.5" fill="#d4d4d4"/><rect x="26" y="330.5" width="5" height="1.5" fill="#dcdcaa"/><rect x="31" y="330.5" width="1" height="1.5" fill="#d4d4d4"/><rect x="32" y="330.5" width="3" height="1.5" fill="#9cdcfe"/><rect x="35" y="330.5" width="1" height="1.5" fill="#d4d4d4"/><rect x="36" y="330.5" width="1" height="1.5" fill="#d4d4d4"/><rect x="18" y="332.5" width="1" height="1.5" fill="#d4d4d4"/><rect x="20" y="332.5" width="4" height="1.5" fill="#c586c0"/><rect x="25" y="332.5" width="2" height="1.5" fill="#c586c0"/><rect x="28" y="332.5" width="1" height="1.5" fill="#d4d4d4"/><rect x="29" y="332.5" width="5" height="1.5" fill="#9cdcfe"/><rect x="35" y="332.5" width="1" height="1.5" fill="#d4d4d4"/><rect x="36" y="332.5" width="1" height="1.5" fill="#d4d4d4"/><rect x="38" y="332.5" width="13" height="1.5" fill="#dcdcaa"/><rect x="51" y="332.5" width="1" height="1.5" fill="#d4d4d4"/><rect x="52" y="332.5" width="7" height="1.5" fill="#9cdcfe"/><rect x="59" y="332.5" width="1" height="1.5" fill="#d4d4d4"/><rect x="61" y="332.5" width="21" height="1.5" fill="#ce9178"/><rect x="82" y="332.5" width="1" height="1.5" fill="#d4d4d4"/><rect x="83" y="332.5" width="1" height="1.5" fill="#d4d4d4"/><rect x="85" y="332.5" width="1" height="1.5" fill="#d4d4d4"/><rect x="20" y="334.5" width="6" height="1.5" fill="#4ec9b0"/><rect x="26" y="334.5" width="1" height="1.5" fill="#d4d4d4"/><rect x="27" y="334.5" width="29" height="1.5" fill="#dcdcaa"/><rect x="56" y="334.5" width="1" height="1.5" fill="#d4d4d4"/><rect x="57" y="334.5" width="7" height="1.5" fill="#9cdcfe"/><rect x="64" y="334.5" width="1" height="1.5" fill="#d4d4d4"/><rect x="66" y="334.5" width="5" height="1.5" fill="#9cdcfe"/><rect x="71" y="334.5" width="1" height="1.5" fill="#d4d4d4"/><rect x="72" y="334.5" width="1" height="1.5" fill="#d4d4d4"/><rect x="18" y="336.5" width="1" height="1.5" fill="#d4d4d4"/><rect x="20" y="336.5" width="4" height="1.5" fill="#c586c0"/><rect x="25" y="336.5" width="2" height="1.5" fill="#c586c0"/><rect x="28" y="336.5" width="1" height="1.5" fill="#d4d4d4"/><rect x="29" y="336.5" width="5" height="1.5" fill="#9cdcfe"/><rect x="35" y="336.5" width="1" height="1.5" fill="#d4d4d4"/><rect x="36" y="336.5" width="1" height="1.5" fill="#d4d4d4"/><rect x="38" y="336.5" width="13" height="1.5" fill="#dcdcaa"/><rect x="51" y="336.5" width="1" height="1.5" fill="#d4d4d4"/><rect x="52" y="336.5" width="7" height="1.5" fill="#9cdcfe"/><rect x="59" y="336.5" width="1" height="1.5" fill="#d4d4d4"/><rect x="61" y="336.5" width="18" height="1.5" fill="#ce9178"/><rect x="79" y="336.5" width="1" height="1.5" fill="#d4d4d4"/><rect x="80" y="336.5" width="1" height="1.5" fill="#d4d4d4"/><rect x="82" y="336.5" width="1" height="1.5" fill="#d4d4d4"/><rect x="20" y="338.5" width="26" height="1.5" fill="#dcdcaa"/><rect x="46" y="338.5" width="1" height="1.5" fill="#d4d4d4"/><rect x="47" y="338.5" width="1" height="1.5" fill="#d4d4d4"/><rect x="48" y="338.5" width="1" height="1.5" fill="#d4d4d4"/><rect x="18" y="340.5" width="1" height="1.5" fill="#d4d4d4"/><rect x="20" y="340.5" width="4" height="1.5" fill="#c586c0"/><rect x="25" y="340.5" width="2" height="1.5" fill="#c586c0"/><rect x="28" y="340.5" width="1" height="1.5" fill="#d4d4d4"/><rect x="29" y="340.5" width="5" height="1.5" fill="#9cdcfe"/><rect x="35" y="340.5" width="1" height="1.5" fill="#d4d4d4"/><rect x="36" y="340.5" width="1" height="1.5" fill="#d4d4d4"/><rect x="38" y="340.5" width="13" height="1.5" fill="#dcdcaa"/><rect x="51" y="340.5" width="1" height="1.5" fill="#d4d4d4"/><rect x="52" y="340.5" width="7" height="1.5" fill="#9cdcfe"/><rect x="59" y="340.5" width="1" height="1.5" fill="#d4d4d4"/><rect x="61" y="340.5" width="8" height="1.5" fill="#ce9178"/><rect x="69" y="340.5" width="1" height="1.5" fill="#d4d4d4"/><rect x="70" y="340.5" width="1" height="1.5" fill="#d4d4d4"/><rect x="72" y="340.5" width="1" height="1.5" fill="#d4d4d4"/><rect x="20" y="342.5" width="12" height="1.5" fill="#dcdcaa"/><rect x="32" y="342.5" width="1" height="1.5" fill="#d4d4d4"/><rect x="33" y="342.5" width="1" height="1.5" fill="#d4d4d4"/><rect x="34" y="342.5" width="1" height="1.5" fill="#d4d4d4"/><rect x="18" y="344.5" width="1" height="1.5" fill="#d4d4d4"/><rect x="20" y="344.5" width="4" height="1.5" fill="#c586c0"/><rect x="25" y="344.5" width="2" height="1.5" fill="#c586c0"/><rect x="28" y="344.5" width="1" height="1.5" fill="#d4d4d4"/><rect x="29" y="344.5" width="5" height="1.5" fill="#9cdcfe"/><rect x="35" y="344.5" width="1" height="1.5" fill="#d4d4d4"/><rect x="36" y="344.5" width="1" height="1.5" fill="#d4d4d4"/><rect x="38" y="344.5" width="13" height="1.5" fill="#dcdcaa"/><rect x="51" y="344.5" width="1" height="1.5" fill="#d4d4d4"/><rect x="52" y="344.5" width="7" height="1.5" fill="#9cdcfe"/><rect x="59" y="344.5" width="1" height="1.5" fill="#d4d4d4"/><rect x="61" y="344.5" width="17" height="1.5" fill="#ce9178"/><rect x="78" y="344.5" width="1" height="1.5" fill="#d4d4d4"/><rect x="79" y="344.5" width="1" height="1.5" fill="#d4d4d4"/><rect x="81" y="344.5" width="1" height="1.5" fill="#d4d4d4"/><rect x="20" y="346.5" width="29" height="1.5" fill="#dcdcaa"/><rect x="49" y="346.5" width="1" height="1.5" fill="#d4d4d4"/><rect x="50" y="346.5" width="1" height="1.5" fill="#d4d4d4"/><rect x="51" y="346.5" width="1" height="1.5" fill="#d4d4d4"/><rect x="18" y="348.5" width="1" height="1.5" fill="#d4d4d4"/><rect x="20" y="348.5" width="4" height="1.5" fill="#c586c0"/><rect x="25" y="348.5" width="2" height="1.5" fill="#c586c0"/><rect x="28" y="348.5" width="1" height="1.5" fill="#d4d4d4"/><rect x="29" y="348.5" width="5" height="1.5" fill="#9cdcfe"/><rect x="35" y="348.5" width="1" height="1.5" fill="#d4d4d4"/><rect x="36" y="348.5" width="1" height="1.5" fill="#d4d4d4"/><rect x="38" y="348.5" width="13" height="1.5" fill="#dcdcaa"/><rect x="51" y="348.5" width="1" height="1.5" fill="#d4d4d4"/><rect x="52" y="348.5" width="7" height="1.5" fill="#9cdcfe"/><rect x="59" y="348.5" width="1" height="1.5" fill="#d4d4d4"/><rect x="61" y="348.5" width="21" height="1.5" fill="#ce9178"/><rect x="82" y="348.5" width="1" height="1.5" fill="#d4d4d4"/><rect x="83" y="348.5" width="1" height="1.5" fill="#d4d4d4"/><rect x="85" y="348.5" width="1" height="1.5" fill="#d4d4d4"/><rect x="20" y="350.5" width="29" height="1.5" fill="#dcdcaa"/><rect x="49" y="350.5" width="1" height="1.5" fill="#d4d4d4"/><rect x="50" y="350.5" width="1" height="1.5" fill="#d4d4d4"/><rect x="51" y="350.5" width="1" height="1.5" fill="#d4d4d4"/><rect x="18" y="352.5" width="1" height="1.5" fill="#d4d4d4"/><rect x="16" y="354.5" width="1" height="1.5" fill="#d4d4d4"/><rect x="17" y="354.5" width="1" height="1.5" fill="#d4d4d4"/><rect x="14" y="356.5" width="1" height="1.5" fill="#d4d4d4"/><rect x="15" y="356.5" width="1" height="1.5" fill="#d4d4d4"/><rect x="12" y="358.5" width="1" height="1.5" fill="#d4d4d4"/><rect x="13" y="358.5" width="1" height="1.5" fill="#d4d4d4"/><rect x="10" y="360.5" width="1" height="1.5" fill="#d4d4d4"/><rect x="10" y="364.5" width="6" height="1.5" fill="#4ec9b0"/><rect x="16" y="364.5" width="1" height="1.5" fill="#d4d4d4"/><rect x="17" y="364.5" width="4" height="1.5" fill="#569cd6"/><rect x="21" y="364.5" width="1" height="1.5" fill="#d4d4d4"/><rect x="23" y="364.5" width="17" height="1.5" fill="#dcdcaa"/><rect x="40" y="364.5" width="1" height="1.5" fill="#d4d4d4"/><rect x="41" y="364.5" width="1" height="1.5" fill="#d4d4d4"/><rect x="43" y="364.5" width="1" height="1.5" fill="#d4d4d4"/><rect x="44" y="364.5" width="1" height="1.5" fill="#d4d4d4"/><rect x="46" y="364.5" width="12" height="1.5" fill="#9cdcfe"/><rect x="58" y="364.5" width="1" height="1.5" fill="#d4d4d4"/><rect x="59" y="364.5" width="16" height="1.5" fill="#dcdcaa"/><rect x="75" y="364.5" width="1" height="1.5" fill="#d4d4d4"/><rect x="16" y="366.5" width="10" height="1.5" fill="#9cdcfe"/><rect x="26" y="366.5" width="1" height="1.5" fill="#d4d4d4"/><rect x="28" y="366.5" width="10" height="1.5" fill="#9cdcfe"/><rect x="38" y="366.5" width="1" height="1.5" fill="#d4d4d4"/><rect x="16" y="368.5" width="16" height="1.5" fill="#9cdcfe"/><rect x="32" y="368.5" width="1" height="1.5" fill="#d4d4d4"/><rect x="34" y="368.5" width="18" height="1.5" fill="#ce9178"/><rect x="52" y="368.5" width="1" height="1.5" fill="#d4d4d4"/><rect x="14" y="370.5" width="1" height="1.5" fill="#d4d4d4"/><rect x="15" y="370.5" width="1" height="1.5" fill="#d4d4d4"/><rect x="10" y="374.5" width="12" height="1.5" fill="#dcdcaa"/><rect x="22" y="374.5" width="1" height="1.5" fill="#d4d4d4"/><rect x="23" y="374.5" width="1" height="1.5" fill="#d4d4d4"/><rect x="25" y="374.5" width="5" height="1.5" fill="#569cd6"/><rect x="31" y="374.5" width="1" height="1.5" fill="#d4d4d4"/><rect x="12" y="376.5" width="5" height="1.5" fill="#c586c0"/><rect x="18" y="376.5" width="13" height="1.5" fill="#dcdcaa"/><rect x="31" y="376.5" width="1" height="1.5" fill="#d4d4d4"/><rect x="14" y="378.5" width="7" height="1.5" fill="#9cdcfe"/><rect x="21" y="378.5" width="1" height="1.5" fill="#d4d4d4"/><rect x="14" y="380.5" width="15" height="1.5" fill="#4ec9b0"/><rect x="29" y="380.5" width="1" height="1.5" fill="#d4d4d4"/><rect x="16" y="382.5" width="7" height="1.5" fill="#9cdcfe"/><rect x="23" y="382.5" width="1" height="1.5" fill="#d4d4d4"/><rect x="25" y="382.5" width="1" height="1.5" fill="#d4d4d4"/><rect x="26" y="382.5" width="12" height="1.5" fill="#4ec9b0"/><rect x="39" y="382.5" width="7" height="1.5" fill="#9cdcfe"/><rect x="46" y="382.5" width="1" height="1.5" fill="#d4d4d4"/><rect x="48" y="382.5" width="11" height="1.5" fill="#4ec9b0"/><rect x="60" y="382.5" width="9" height="1.5" fill="#9cdcfe"/><rect x="69" y="382.5" width="1" height="1.5" fill="#d4d4d4"/><rect x="71" y="382.5" width="1" height="1.5" fill="#d4d4d4"/><rect x="18" y="384.5" width="6" height="1.5" fill="#c586c0"/><rect x="25" y="384.5" width="11" height="1.5" fill="#4ec9b0"/><rect x="36" y="384.5" width="1" height="1.5" fill="#d4d4d4"/><rect x="20" y="386.5" width="7" height="1.5" fill="#9cdcfe"/><rect x="27" y="386.5" width="1" height="1.5" fill="#d4d4d4"/><rect x="29" y="386.5" width="4" height="1.5" fill="#4ec9b0"/><rect x="33" y="386.5" width="1" height="1.5" fill="#d4d4d4"/><rect x="22" y="388.5" width="13" height="1.5" fill="#dcdcaa"/><rect x="35" y="388.5" width="1" height="1.5" fill="#d4d4d4"/><rect x="36" y="388.5" width="7" height="1.5" fill="#9cdcfe"/><rect x="43" y="388.5" width="1" height="1.5" fill="#d4d4d4"/><rect x="45" y="388.5" width="11" height="1.5" fill="#ce9178"/><rect x="56" y="388.5" width="1" height="1.5" fill="#d4d4d4"/><rect x="57" y="388.5" width="1" height="1.5" fill="#d4d4d4"/><rect x="58" y="388.5" width="1" height="1.5" fill="#d4d4d4"/><rect x="20" y="390.5" width="1" height="1.5" fill="#d4d4d4"/><rect x="21" y="390.5" width="1" height="1.5" fill="#d4d4d4"/><rect x="20" y="392.5" width="7" height="1.5" fill="#9cdcfe"/><rect x="27" y="392.5" width="1" height="1.5" fill="#d4d4d4"/><rect x="29" y="392.5" width="1" height="1.5" fill="#d4d4d4"/><rect x="30" y="392.5" width="6" height="1.5" fill="#4ec9b0"/><rect x="36" y="392.5" width="1" height="1.5" fill="#d4d4d4"/><rect x="37" y="392.5" width="1" height="1.5" fill="#d4d4d4"/><rect x="22" y="394.5" width="10" height="1.5" fill="#4ec9b0"/><rect x="32" y="394.5" width="1" height="1.5" fill="#d4d4d4"/><rect x="24" y="396.5" width="5" height="1.5" fill="#9cdcfe"/><rect x="29" y="396.5" width="1" height="1.5" fill="#d4d4d4"/><rect x="31" y="396.5" width="4" height="1.5" fill="#4ec9b0"/><rect x="35" y="396.5" width="1" height="1.5" fill="#d4d4d4"/><rect x="36" y="396.5" width="13" height="1.5" fill="#dcdcaa"/><rect x="49" y="396.5" width="1" height="1.5" fill="#d4d4d4"/><rect x="50" y="396.5" width="7" height="1.5" fill="#9cdcfe"/><rect x="57" y="396.5" width="1" height="1.5" fill="#d4d4d4"/><rect x="59" y="396.5" width="4" height="1.5" fill="#ce9178"/><rect x="63" y="396.5" width="1" height="1.5" fill="#d4d4d4"/><rect x="64" y="396.5" width="1" height="1.5" fill="#d4d4d4"/><rect x="65" y="396.5" width="1" height="1.5" fill="#d4d4d4"/><rect x="66" y="396.5" width="1" height="1.5" fill="#d4d4d4"/><rect x="24" y="398.5" width="9" height="1.5" fill="#9cdcfe"/><rect x="33" y="398.5" width="1" height="1.5" fill="#d4d4d4"/><rect x="35" y="398.5" width="1" height="1.5" fill="#d4d4d4"/><rect x="36" y="398.5" width="1" height="1.5" fill="#d4d4d4"/><rect x="38" y="398.5" width="1" height="1.5" fill="#d4d4d4"/><rect x="26" y="400.5" width="9" height="1.5" fill="#4ec9b0"/><rect x="35" y="400.5" width="1" height="1.5" fill="#d4d4d4"/><rect x="36" y="400.5" width="2" height="1.5" fill="#dcdcaa"/><rect x="38" y="400.5" width="1" height="1.5" fill="#d4d4d4"/><rect x="39" y="400.5" width="7" height="1.5" fill="#9cdcfe"/><rect x="46" y="400.5" width="1" height="1.5" fill="#d4d4d4"/><rect x="47" y="400.5" width="1" height="1.5" fill="#d4d4d4"/><rect x="48" y="400.5" width="3" height="1.5" fill="#dcdcaa"/><rect x="51" y="400.5" width="1" height="1.5" fill="#d4d4d4"/><rect x="52" y="400.5" width="5" height="1.5" fill="#569cd6"/><rect x="57" y="400.5" width="1" height="1.5" fill="#d4d4d4"/><rect x="58" y="400.5" width="1" height="1.5" fill="#d4d4d4"/><rect x="24" y="402.5" width="1" height="1.5" fill="#d4d4d4"/><rect x="25" y="402.5" width="1" height="1.5" fill="#d4d4d4"/><rect x="22" y="404.5" width="1" height="1.5" fill="#d4d4d4"/><rect x="23" y="404.5" width="1" height="1.5" fill="#d4d4d4"/><rect x="22" y="406.5" width="10" height="1.5" fill="#4ec9b0"/><rect x="32" y="406.5" width="1" height="1.5" fill="#d4d4d4"/><rect x="24" y="408.5" width="5" height="1.5" fill="#9cdcfe"/><rect x="29" y="408.5" width="1" height="1.5" fill="#d4d4d4"/><rect x="31" y="408.5" width="4" height="1.5" fill="#4ec9b0"/><rect x="35" y="408.5" width="1" height="1.5" fill="#d4d4d4"/><rect x="36" y="408.5" width="13" height="1.5" fill="#dcdcaa"/><rect x="49" y="408.5" width="1" height="1.5" fill="#d4d4d4"/><rect x="50" y="408.5" width="7" height="1.5" fill="#9cdcfe"/><rect x="57" y="408.5" width="1" height="1.5" fill="#d4d4d4"/><rect x="59" y="408.5" width="5" height="1.5" fill="#ce9178"/><rect x="64" y="408.5" width="1" height="1.5" fill="#d4d4d4"/><rect x="65" y="408.5" width="1" height="1.5" fill="#d4d4d4"/><rect x="66" y="408.5" width="1" height="1.5" fill="#d4d4d4"/><rect x="67" y="408.5" width="1" height="1.5" fill="#d4d4d4"/><rect x="24" y="410.5" width="9" height="1.5" fill="#9cdcfe"/><rect x="33" y="410.5" width="1" height="1.5" fill="#d4d4d4"/><rect x="35" y="410.5" width="1" height="1.5" fill="#d4d4d4"/><rect x="36" y="410.5" width="1" height="1.5" fill="#d4d4d4"/><rect x="38" y="410.5" width="1" height="1.5" fill="#d4d4d4"/><rect x="26" y="412.5" width="15" height="1.5" fill="#4ec9b0"/><rect x="42" y="412.5" width="15" height="1.5" fill="#9cdcfe"/><rect x="58" y="412.5" width="1" height="1.5" fill="#d4d4d4"/><rect x="30" y="414.5" width="8" height="1.5" fill="#4ec9b0"/><rect x="38" y="414.5" width="1" height="1.5" fill="#d4d4d4"/><rect x="39" y="414.5" width="2" height="1.5" fill="#9cdcfe"/><rect x="41" y="414.5" width="1" height="1.5" fill="#d4d4d4"/><rect x="42" y="414.5" width="15" height="1.5" fill="#4ec9b0"/><rect x="57" y="414.5" width="1" height="1.5" fill="#d4d4d4"/><rect x="58" y="414.5" width="1" height="1.5" fill="#d4d4d4"/><rect x="59" y="414.5" width="7" height="1.5" fill="#9cdcfe"/><rect x="66" y="414.5" width="1" height="1.5" fill="#d4d4d4"/><rect x="68" y="414.5" width="6" height="1.5" fill="#9cdcfe"/><rect x="74" y="414.5" width="1" height="1.5" fill="#d4d4d4"/><rect x="76" y="414.5" width="5" height="1.5" fill="#569cd6"/><rect x="81" y="414.5" width="1" height="1.5" fill="#d4d4d4"/><rect x="82" y="414.5" width="1" height="1.5" fill="#d4d4d4"/><rect x="26" y="416.5" width="15" height="1.5" fill="#9cdcfe"/><rect x="41" y="416.5" width="1" height="1.5" fill="#d4d4d4"/><rect x="42" y="416.5" width="16" height="1.5" fill="#dcdcaa"/><rect x="58" y="416.5" width="1" height="1.5" fill="#d4d4d4"/><rect x="59" y="416.5" width="7" height="1.5" fill="#9cdcfe"/><rect x="66" y="416.5" width="1" height="1.5" fill="#d4d4d4"/><rect x="67" y="416.5" width="1" height="1.5" fill="#d4d4d4"/><rect x="26" y="418.5" width="9" height="1.5" fill="#4ec9b0"/><rect x="35" y="418.5" width="1" height="1.5" fill="#d4d4d4"/><rect x="36" y="418.5" width="2" height="1.5" fill="#dcdcaa"/><rect x="38" y="418.5" width="1" height="1.5" fill="#d4d4d4"/><rect x="39" y="418.5" width="7" height="1.5" fill="#9cdcfe"/><rect x="46" y="418.5" width="1" height="1.5" fill="#d4d4d4"/><rect x="47" y="418.5" width="1" height="1.5" fill="#d4d4d4"/><rect x="48" y="418.5" width="23" height="1.5" fill="#dcdcaa"/><rect x="71" y="418.5" width="1" height="1.5" fill="#d4d4d4"/><rect x="72" y="418.5" width="7" height="1.5" fill="#ce9178"/><rect x="79" y="418.5" width="1" height="1.5" fill="#d4d4d4"/><rect x="81" y="418.5" width="1" height="1.5" fill="#d4d4d4"/><rect x="82" y="418.5" width="5" height="1.5" fill="#4ec9b0"/><rect x="87" y="418.5" width="1" height="1.5" fill="#d4d4d4"/><rect x="88" y="418.5" width="7" height="1.5" fill="#9cdcfe"/><rect x="95" y="418.5" width="1" height="1.5" fill="#d4d4d4"/><rect x="97" y="418.5" width="5" height="1.5" fill="#9cdcfe"/><rect x="102" y="418.5" width="1" height="1.5" fill="#d4d4d4"/><rect x="104" y="418.5" width="1" height="1.5" fill="#d4d4d4"/><rect x="105" y="418.5" width="1" height="1.5" fill="#d4d4d4"/><rect x="107" y="418.5" width="5" height="1.5" fill="#569cd6"/><rect x="112" y="418.5" width="1" height="1.5" fill="#d4d4d4"/><rect x="113" y="418.5" width="1" height="1.5" fill="#d4d4d4"/><rect x="24" y="420.5" width="1" height="1.5" fill="#d4d4d4"/><rect x="25" y="420.5" width="1" height="1.5" fill="#d4d4d4"/><rect x="22" y="422.5" width="1" height="1.5" fill="#d4d4d4"/><rect x="23" y="422.5" width="1" height="1.5" fill="#d4d4d4"/><rect x="20" y="424.5" width="1" height="1.5" fill="#d4d4d4"/><rect x="21" y="424.5" width="1" height="1.5" fill="#d4d4d4"/><rect x="18" y="426.5" width="1" height="1.5" fill="#d4d4d4"/><rect x="19" y="426.5" width="1" height="1.5" fill="#d4d4d4"/><rect x="16" y="428.5" width="1" height="1.5" fill="#d4d4d4"/><rect x="17" y="428.5" width="1" height="1.5" fill="#d4d4d4"/><rect x="14" y="430.5" width="1" height="1.5" fill="#d4d4d4"/><rect x="15" y="430.5" width="1" height="1.5" fill="#d4d4d4"/><rect x="12" y="432.5" width="1" height="1.5" fill="#d4d4d4"/><rect x="13" y="432.5" width="1" height="1.5" fill="#d4d4d4"/><rect x="10" y="434.5" width="1" height="1.5" fill="#d4d4d4"/><rect x="10" y="438.5" width="9" height="1.5" fill="#4ec9b0"/><rect x="10" y="440.5" width="6" height="1.5" fill="#4ec9b0"/><rect x="17" y="440.5" width="5" height="1.5" fill="#dcdcaa"/><rect x="22" y="440.5" width="1" height="1.5" fill="#d4d4d4"/><rect x="23" y="440.5" width="12" height="1.5" fill="#4ec9b0"/><rect x="36" y="440.5" width="7" height="1.5" fill="#9cdcfe"/><rect x="43" y="440.5" width="1" height="1.5" fill="#d4d4d4"/><rect x="45" y="440.5" width="1" height="1.5" fill="#d4d4d4"/><rect x="12" y="442.5" width="30" height="1.5" fill="#dcdcaa"/><rect x="42" y="442.5" width="1" height="1.5" fill="#d4d4d4"/><rect x="43" y="442.5" width="16" height="1.5" fill="#9cdcfe"/><rect x="59" y="442.5" width="1" height="1.5" fill="#d4d4d4"/><rect x="61" y="442.5" width="7" height="1.5" fill="#9cdcfe"/><rect x="68" y="442.5" width="1" height="1.5" fill="#d4d4d4"/><rect x="69" y="442.5" width="1" height="1.5" fill="#d4d4d4"/><rect x="12" y="444.5" width="6" height="1.5" fill="#c586c0"/><rect x="19" y="444.5" width="8" height="1.5" fill="#4ec9b0"/><rect x="27" y="444.5" width="1" height="1.5" fill="#d4d4d4"/><rect x="14" y="446.5" width="15" height="1.5" fill="#9cdcfe"/><rect x="29" y="446.5" width="1" height="1.5" fill="#d4d4d4"/><rect x="31" y="446.5" width="5" height="1.5" fill="#4ec9b0"/><rect x="36" y="446.5" width="1" height="1.5" fill="#d4d4d4"/><rect x="37" y="446.5" width="2" height="1.5" fill="#dcdcaa"/><rect x="39" y="446.5" width="1" height="1.5" fill="#d4d4d4"/><rect x="40" y="446.5" width="7" height="1.5" fill="#9cdcfe"/><rect x="47" y="446.5" width="1" height="1.5" fill="#d4d4d4"/><rect x="48" y="446.5" width="1" height="1.5" fill="#d4d4d4"/><rect x="49" y="446.5" width="11" height="1.5" fill="#9cdcfe"/><rect x="60" y="446.5" width="1" height="1.5" fill="#d4d4d4"/><rect x="61" y="446.5" width="10" height="1.5" fill="#9cdcfe"/><rect x="71" y="446.5" width="1" height="1.5" fill="#d4d4d4"/><rect x="14" y="448.5" width="4" height="1.5" fill="#9cdcfe"/><rect x="18" y="448.5" width="1" height="1.5" fill="#d4d4d4"/><rect x="20" y="448.5" width="8" height="1.5" fill="#4ec9b0"/><rect x="28" y="448.5" width="1" height="1.5" fill="#d4d4d4"/><rect x="29" y="448.5" width="12" height="1.5" fill="#4ec9b0"/><rect x="41" y="448.5" width="1" height="1.5" fill="#d4d4d4"/><rect x="42" y="448.5" width="1" height="1.5" fill="#d4d4d4"/><rect x="16" y="450.5" width="7" height="1.5" fill="#9cdcfe"/><rect x="23" y="450.5" width="1" height="1.5" fill="#d4d4d4"/><rect x="25" y="450.5" width="1" height="1.5" fill="#d4d4d4"/><rect x="26" y="450.5" width="7" height="1.5" fill="#9cdcfe"/><rect x="33" y="450.5" width="1" height="1.5" fill="#d4d4d4"/><rect x="35" y="450.5" width="4" height="1.5" fill="#9cdcfe"/><rect x="39" y="450.5" width="1" height="1.5" fill="#d4d4d4"/><rect x="41" y="450.5" width="5" height="1.5" fill="#9cdcfe"/><rect x="46" y="450.5" width="1" height="1.5" fill="#d4d4d4"/><rect x="48" y="450.5" width="1" height="1.5" fill="#d4d4d4"/><rect x="18" y="452.5" width="6" height="1.5" fill="#c586c0"/><rect x="25" y="452.5" width="21" height="1.5" fill="#4ec9b0"/><rect x="46" y="452.5" width="1" height="1.5" fill="#d4d4d4"/><rect x="20" y="454.5" width="10" height="1.5" fill="#9cdcfe"/><rect x="30" y="454.5" width="1" height="1.5" fill="#d4d4d4"/><rect x="32" y="454.5" width="16" height="1.5" fill="#9cdcfe"/><rect x="48" y="454.5" width="1" height="1.5" fill="#d4d4d4"/><rect x="20" y="456.5" width="5" height="1.5" fill="#9cdcfe"/><rect x="25" y="456.5" width="1" height="1.5" fill="#d4d4d4"/><rect x="27" y="456.5" width="6" height="1.5" fill="#4ec9b0"/><rect x="33" y="456.5" width="1" height="1.5" fill="#d4d4d4"/><rect x="22" y="458.5" width="8" height="1.5" fill="#9cdcfe"/><rect x="30" y="458.5" width="1" height="1.5" fill="#d4d4d4"/><rect x="32" y="458.5" width="1" height="1.5" fill="#d4d4d4"/><rect x="33" y="458.5" width="6" height="1.5" fill="#4ec9b0"/><rect x="39" y="458.5" width="1" height="1.5" fill="#d4d4d4"/><rect x="40" y="458.5" width="1" height="1.5" fill="#d4d4d4"/><rect x="24" y="460.5" width="10" height="1.5" fill="#dcdcaa"/><rect x="34" y="460.5" width="1" height="1.5" fill="#d4d4d4"/><rect x="35" y="460.5" width="1" height="1.5" fill="#d4d4d4"/><rect x="36" y="460.5" width="1" height="1.5" fill="#d4d4d4"/><rect x="24" y="462.5" width="10" height="1.5" fill="#dcdcaa"/><rect x="34" y="462.5" width="1" height="1.5" fill="#d4d4d4"/><rect x="35" y="462.5" width="1" height="1.5" fill="#d4d4d4"/><rect x="36" y="462.5" width="1" height="1.5" fill="#d4d4d4"/><rect x="22" y="464.5" width="1" height="1.5" fill="#d4d4d4"/><rect x="23" y="464.5" width="1" height="1.5" fill="#d4d4d4"/><rect x="20" y="466.5" width="1" height="1.5" fill="#d4d4d4"/><rect x="21" y="466.5" width="1" height="1.5" fill="#d4d4d4"/><rect x="18" y="468.5" width="1" height="1.5" fill="#d4d4d4"/><rect x="19" y="468.5" width="1" height="1.5" fill="#d4d4d4"/><rect x="16" y="470.5" width="1" height="1.5" fill="#d4d4d4"/><rect x="17" y="470.5" width="1" height="1.5" fill="#d4d4d4"/><rect x="14" y="472.5" width="1" height="1.5" fill="#d4d4d4"/><rect x="15" y="472.5" width="1" height="1.5" fill="#d4d4d4"/><rect x="12" y="474.5" width="1" height="1.5" fill="#d4d4d4"/><rect x="13" y="474.5" width="1" height="1.5" fill="#d4d4d4"/><rect x="10" y="476.5" width="1" height="1.5" fill="#d4d4d4"/><rect x="8" y="478.5" width="1" height="1.5" fill="#d4d4d4"/></g></svg>
<div class="a" style="left:1271px;top:180.25px;width:112px;height:2px;background:rgba(38,79,120,0.7)"></div>
<div class="a" style="left:721px;top:0.0px;width:524px;height:41.75px;background:#252526;box-shadow:0 0 8px 2px rgba(0,0,0,0.36)">
<div class="a" style="left:0;top:0;width:3px;height:100%;background:#454545"></div>
<svg width="10" height="14" style="left:11px;top:13.75px" viewBox="0 0 10 14"><path d="M1.5 1L8 7L1.5 13" fill="none" stroke="#c5c5c5" stroke-width="1.3"/></svg>
<div class="a" style="left:27px;top:4.75px;width:278px;height:31.700000000000003px;background:#3c3c3c"></div>
<div class="a" style="left:32px;top:5.75px;height:31.7px;line-height:31.7px;font-size:16px;color:#cccccc;transform-origin:0 0;transform:scaleX(0.975)">_getDrawerFirst</div>
<div class="a" style="left:227px;top:4.75px;height:31.7px;line-height:32px;font-size:14.5px;color:#c5c5c5">Aa</div>
<div class="a" style="left:253.5px;top:4.75px;height:31.7px;line-height:30px;font-size:14.5px;color:#c5c5c5">ab</div>
<svg width="20" height="6" style="left:252px;top:26.75px" viewBox="0 0 20 6"><path d="M0.8 0v3.8h18.4V0" fill="none" stroke="#c5c5c5" stroke-width="1.3"/></svg>
<div class="a" style="left:282px;top:26.75px;width:4.5px;height:4.5px;background:#c5c5c5"></div>
<svg width="14" height="14" style="left:286px;top:12.75px" viewBox="0 0 14 14"><path d="M7 0.5v11M2 3.2l10 5.6M12 3.2L2 8.8" stroke="#c5c5c5" stroke-width="1.6"/></svg>
<div class="a" style="left:312px;top:5.75px;height:31.7px;line-height:34px;font-size:16px;color:#f48771;transform-origin:0 0;transform:scaleX(0.925)">No results</div>
<svg width="120" height="20" style="left:403px;top:10.75px" viewBox="0 0 120 20">
<g fill="none" stroke="#8a8a8a" stroke-width="1.4"><path d="M10 3.5v15M3.5 10L10 3.5l6.5 6.5"/><path d="M41.5 3.5v15M35 12l6.5 6.5l6.5-6.5"/></g>
<g fill="none" stroke="#c5c5c5" stroke-width="1.5"><path d="M63.5 4.7h14M63.5 10.5h17.5M63.5 15.5h12.5"/><path d="M96.5 5l11 11M107.5 5l-11 11"/></g>
</svg>
</div>
</div>
<div class="a" style="left:1344px;top:905.7px;width:562px;height:132.0px;background:#252526;box-shadow:0 0 10px 1px rgba(0,0,0,0.45)">
<svg width="22" height="22" style="left:10.700000000000045px;top:14.049999999999955px" viewBox="0 0 22 22"><g fill="none" stroke="#3794ff" stroke-width="1.6">
<circle cx="11" cy="11" r="9.6"/><path d="M11 9.2v7.2"/></g><circle cx="11" cy="6.2" r="1.2" fill="#3794ff"/></svg>
<div class="a" style="left:39.20px;top:19.80px;font-size:16px;color:#cccccc;white-space:nowrap;line-height:1;transform-origin:0 0;transform:scale(1.0199,1.0);">Do you want to install the recommended extensions for</div>
<div class="a" style="left:39.20px;top:46.30px;font-size:16px;color:#cccccc;white-space:nowrap;line-height:1;transform-origin:0 0;transform:scale(0.9919,1.0);">gradlew.bat?</div>
<svg width="18" height="18" style="left:496px;top:16.699999999999932px" viewBox="0 0 18 18"><g fill="none" stroke="#c5c5c5" stroke-width="1.4" stroke-linejoin="round">
<path d="M17.44 7.36 L17.44 10.64 L14.84 11.07 L14.60 11.67 L16.13 13.81 L13.81 16.13 L11.67 14.60 L11.07 14.84 L10.64 17.44 L7.36 17.44 L6.93 14.84 L6.33 14.60 L4.19 16.13 L1.87 13.81 L3.40 11.67 L3.16 11.07 L0.56 10.64 L0.56 7.36 L3.16 6.93 L3.40 6.33 L1.87 4.19 L4.19 1.87 L6.33 3.40 L6.93 3.16 L7.36 0.56 L10.64 0.56 L11.07 3.16 L11.67 3.40 L13.81 1.87 L16.13 4.19 L14.60 6.33 L14.84 6.93Z"/><circle cx="9" cy="9" r="2.6"/></g></svg>
<svg width="12" height="12" style="left:531.3px;top:19.299999999999955px" viewBox="0 0 12 12"><path d="M0.8 0.8L11.2 11.2M11.2 0.8L0.8 11.2" stroke="#c5c5c5" stroke-width="1.5"/></svg>
<div class="a" style="left:249.79999999999995px;top:79.39999999999998px;width:99.10000000000014px;height:34.799999999999955px;background:#0e639c;border-radius:2px"></div>
<div class="a" style="left:314.29999999999995px;top:83.39999999999998px;width:1px;height:26.799999999999955px;background:#5a8fb8"></div>
<div class="a" style="left:261.90px;top:89.80px;font-size:16px;font-weight:bold;color:#ffffff;white-space:nowrap;line-height:1;transform-origin:0 0;transform:scale(0.8803,1.0);font-weight:bold">Install</div>
<svg width="14" height="9" style="left:325.20000000000005px;top:92.79999999999995px" viewBox="0 0 14 9"><path d="M1 1.5L7 7.5L13 1.5" fill="none" stroke="#fff" stroke-width="1.5"/></svg>
<div class="a" style="left:361px;top:79.39999999999998px;width:188.79999999999995px;height:34.799999999999955px;background:#3a3d41;border-radius:2px"></div>
<div class="a" style="left:373.60px;top:89.80px;font-size:16px;color:#ffffff;white-space:nowrap;line-height:1;transform-origin:0 0;transform:scale(0.9175,1.0);">Show Recommendations</div>
</div>
<div id="status">
<svg width="16" height="18" style="left:20.5px;top:5px" viewBox="0 0 16 18"><g fill="none" stroke="#ffffff" stroke-width="1.5">
<circle cx="3.2" cy="2.8" r="2.1"/><circle cx="3.2" cy="15" r="2.1"/><circle cx="12.6" cy="5.2" r="2.1"/>
<path d="M3.2 4.9v8M12.6 7.3c0 4-9.4 3-9.4 5.6"/></g></svg>
<div class="a" style="left:40.60px;top:6.10px;font-size:15px;color:#ffffff;white-space:nowrap;line-height:1;transform-origin:0 0;transform:scale(0.9970,1.0);">merging_code*</div>
<svg width="18" height="18" style="left:161.5px;top:5.5px" viewBox="0 0 18 18"><g fill="none" stroke="#ffffff" stroke-width="1.6">
<path d="M2.5 8.2A6.5 6.5 0 0 1 14.4 5.2M15.5 9.8A6.5 6.5 0 0 1 3.6 12.8"/><path d="M15 1.8v3.8h-3.8M3 16.2v-3.8h3.8"/></g></svg>
<svg width="17" height="20" style="left:198.5px;top:4px" viewBox="0 0 17 20"><g fill="none" stroke="#ffffff" stroke-width="1.5">
<circle cx="3" cy="3" r="2"/><circle cx="3" cy="17" r="2"/><circle cx="13.5" cy="9" r="2.2"/>
<path d="M3 5v10M7.5 1v18M13.5 11.2c0 3-6 3-6 3"/></g></svg>
<svg width="18" height="18" style="left:236px;top:5px" viewBox="0 0 18 18"><g fill="none" stroke="#ffffff" stroke-width="1.5">
<circle cx="9" cy="9" r="7.5"/><path d="M5.8 5.8l6.4 6.4M12.2 5.8l-6.4 6.4"/></g></svg>
<div class="a" style="left:257.00px;top:6.10px;font-size:15px;color:#ffffff;white-space:nowrap;line-height:1;transform-origin:0 0;transform:scale(1.0309,1.0);">0</div>
<svg width="18" height="18" style="left:270.5px;top:4.5px" viewBox="0 0 18 18"><g fill="none" stroke="#ffffff" stroke-width="1.5" stroke-linejoin="round">
<path d="M9 1.8L16.5 15.8H1.5z"/><path d="M9 6.5v5M9 13v1.4"/></g></svg>
<div class="a" style="left:290.60px;top:6.10px;font-size:15px;color:#ffffff;white-space:nowrap;line-height:1;transform-origin:0 0;transform:scale(1.0549,1.0);">0</div>
<svg width="18" height="18" style="left:304.5px;top:5px" viewBox="0 0 18 18"><g fill="none" stroke="#ffffff" stroke-width="1.5">
<circle cx="9" cy="9" r="7.5"/><path d="M9 7.5v6M9 4.5v1.5"/></g></svg>
<div class="a" style="left:326.00px;top:6.10px;font-size:15px;color:#ffffff;white-space:nowrap;line-height:1;transform-origin:0 0;transform:scale(0.8557,1.0);">1K</div>
<svg width="20" height="18" style="left:361px;top:5px" viewBox="0 0 20 18"><g fill="none" stroke="#ffffff" stroke-width="1.5" stroke-linejoin="round">
<path d="M7 2.2L17.5 8.6L7 15z"/></g><g fill="#007acc" stroke="#ffffff" stroke-width="1.4"><ellipse cx="5" cy="12.8" rx="3" ry="3.4"/></g><g stroke="#ffffff" stroke-width="1.3"><path d="M0.5 11.5h2M7.5 11.5h2M0.5 14.5h2M7.5 14.5h2M3 9l1 1.2M7 9l-1 1.2"/></g></svg>
<svg width="12" height="18" style="left:772.5px;top:5px" viewBox="0 0 12 18"><g fill="none" stroke="#ffffff" stroke-width="1.6">
<circle cx="6" cy="9" r="3.6"/><path d="M6 0.5v4.9M6 12.6v5"/></g></svg>
<div class="a" style="left:791.25px;top:6.10px;font-size:15px;color:#ffffff;white-space:nowrap;line-height:1;transform-origin:0 0;transform:scale(0.9667,1.0);">vijayvaghela72, 2 weeks ago</div>
<div class="a" style="left:997.50px;top:6.10px;font-size:15px;color:#ffffff;white-space:nowrap;line-height:1;transform-origin:0 0;transform:scale(0.9470,1.0);">Ln 91, Col 30</div>
<div class="a" style="left:1102.80px;top:6.10px;font-size:15px;color:#ffffff;white-space:nowrap;line-height:1;transform-origin:0 0;transform:scale(0.9024,1.0);">Spaces: 2</div>
<div class="a" style="left:1183.40px;top:6.10px;font-size:15px;color:#ffffff;white-space:nowrap;line-height:1;transform-origin:0 0;transform:scale(0.9201,1.0);">UTF-8</div>
<div class="a" style="left:1242.80px;top:6.10px;font-size:15px;color:#ffffff;white-space:nowrap;line-height:1;transform-origin:0 0;transform:scale(0.8221,1.0);">CRLF</div>
<div class="a" style="left:1296.00px;top:6.10px;font-size:15px;color:#ffffff;white-space:nowrap;line-height:1;transform-origin:0 0;transform:scale(0.9881,1.0);">Dart</div>
<div class="a" style="left:1344.40px;top:6.10px;font-size:15px;color:#ffffff;white-space:nowrap;line-height:1;transform-origin:0 0;transform:scale(0.9767,1.0);">Dart DevTools</div>
<div class="a" style="left:1456.20px;top:6.10px;font-size:15px;color:#ffffff;white-space:nowrap;line-height:1;transform-origin:0 0;transform:scale(0.9524,1.0);">Flutter: 3.3.2</div>
<div class="a" style="left:1556.80px;top:6.10px;font-size:15px;color:#ffffff;white-space:nowrap;line-height:1;transform-origin:0 0;transform:scale(0.9815,1.0);">SM A205F (android-arm64)</div>
<svg width="17" height="17" style="left:1757px;top:5.5px" viewBox="0 0 17 17"><g fill="none" stroke="#ffffff" stroke-width="1.5">
<circle cx="8.5" cy="8.5" r="7.2"/><path d="M13.6 3.4L3.4 13.6"/></g></svg>
<div class="a" style="left:1778.40px;top:6.10px;font-size:15px;color:#ffffff;white-space:nowrap;line-height:1;transform-origin:0 0;transform:scale(0.9845,1.0);">Prettier</div>
<svg width="19" height="18" style="left:1845.5px;top:5px" viewBox="0 0 19 18"><g fill="none" stroke="#ffffff" stroke-width="1.4" stroke-linejoin="round">
<circle cx="5.5" cy="7" r="3"/><path d="M0.8 16.5c0.5-3.5 2.3-5.2 4.7-5.2s4.2 1.7 4.7 5.2"/><path d="M8 1h10v7.5h-4.5l-2.5 2.5v-2.5"/></g></svg>
<svg width="18" height="19" style="left:1884.5px;top:4.5px" viewBox="0 0 18 19"><g fill="none" stroke="#ffffff" stroke-width="1.5" stroke-linejoin="round">
<path d="M8 2.5a5 5 0 0 1 5 5v4.5l2 2.5H1l2-2.5V7.5a5 5 0 0 1 5-5z"/><path d="M6 16.2a2.2 2.2 0 0 0 4 0"/></g>
<circle cx="14.3" cy="3.6" r="3.2" fill="#fff" stroke="#007acc" stroke-width="1"/></svg>
</div>
<svg width="1920" height="1080" style="left:0;top:0" viewBox="0 0 1920 1080">
<line x1="503" y1="303.5" x2="712" y2="479" stroke="#ff0000" stroke-width="6.5" stroke-linecap="round"/>
<path d="M736 503.5L697 491L717 467.5Z" fill="#ff0000" stroke="#ff0000" stroke-width="2" stroke-linejoin="round"/>
<rect x="651.25" y="511.25" width="721.25" height="88.75" rx="1" fill="none" stroke="#ff0000" stroke-width="7.5"/>
</svg>
<div class="a" style="left:304.60px;top:246.60px;font-size:28px;font-weight:bold;color:#ff0000;white-space:nowrap;line-height:1;transform-origin:0 0;transform:scale(0.9394,0.84);-webkit-text-stroke:1.6px #ff0000">comment out this 2 line using</div>
<div class="a" style="left:309.20px;top:283.70px;font-size:28px;font-weight:bold;color:#ff0000;white-space:nowrap;line-height:1;transform-origin:0 0;transform:scale(0.9735,0.84);-webkit-text-stroke:1.6px #ff0000">like this</div>
<svg width="40" height="30" style="left:680px;top:240px" viewBox="680 240 40 30"><path d="M690 266.5L702.5 249M703.5 266.5L716 249" stroke="#ff0000" stroke-width="3.2"/></svg>
</body></html>
